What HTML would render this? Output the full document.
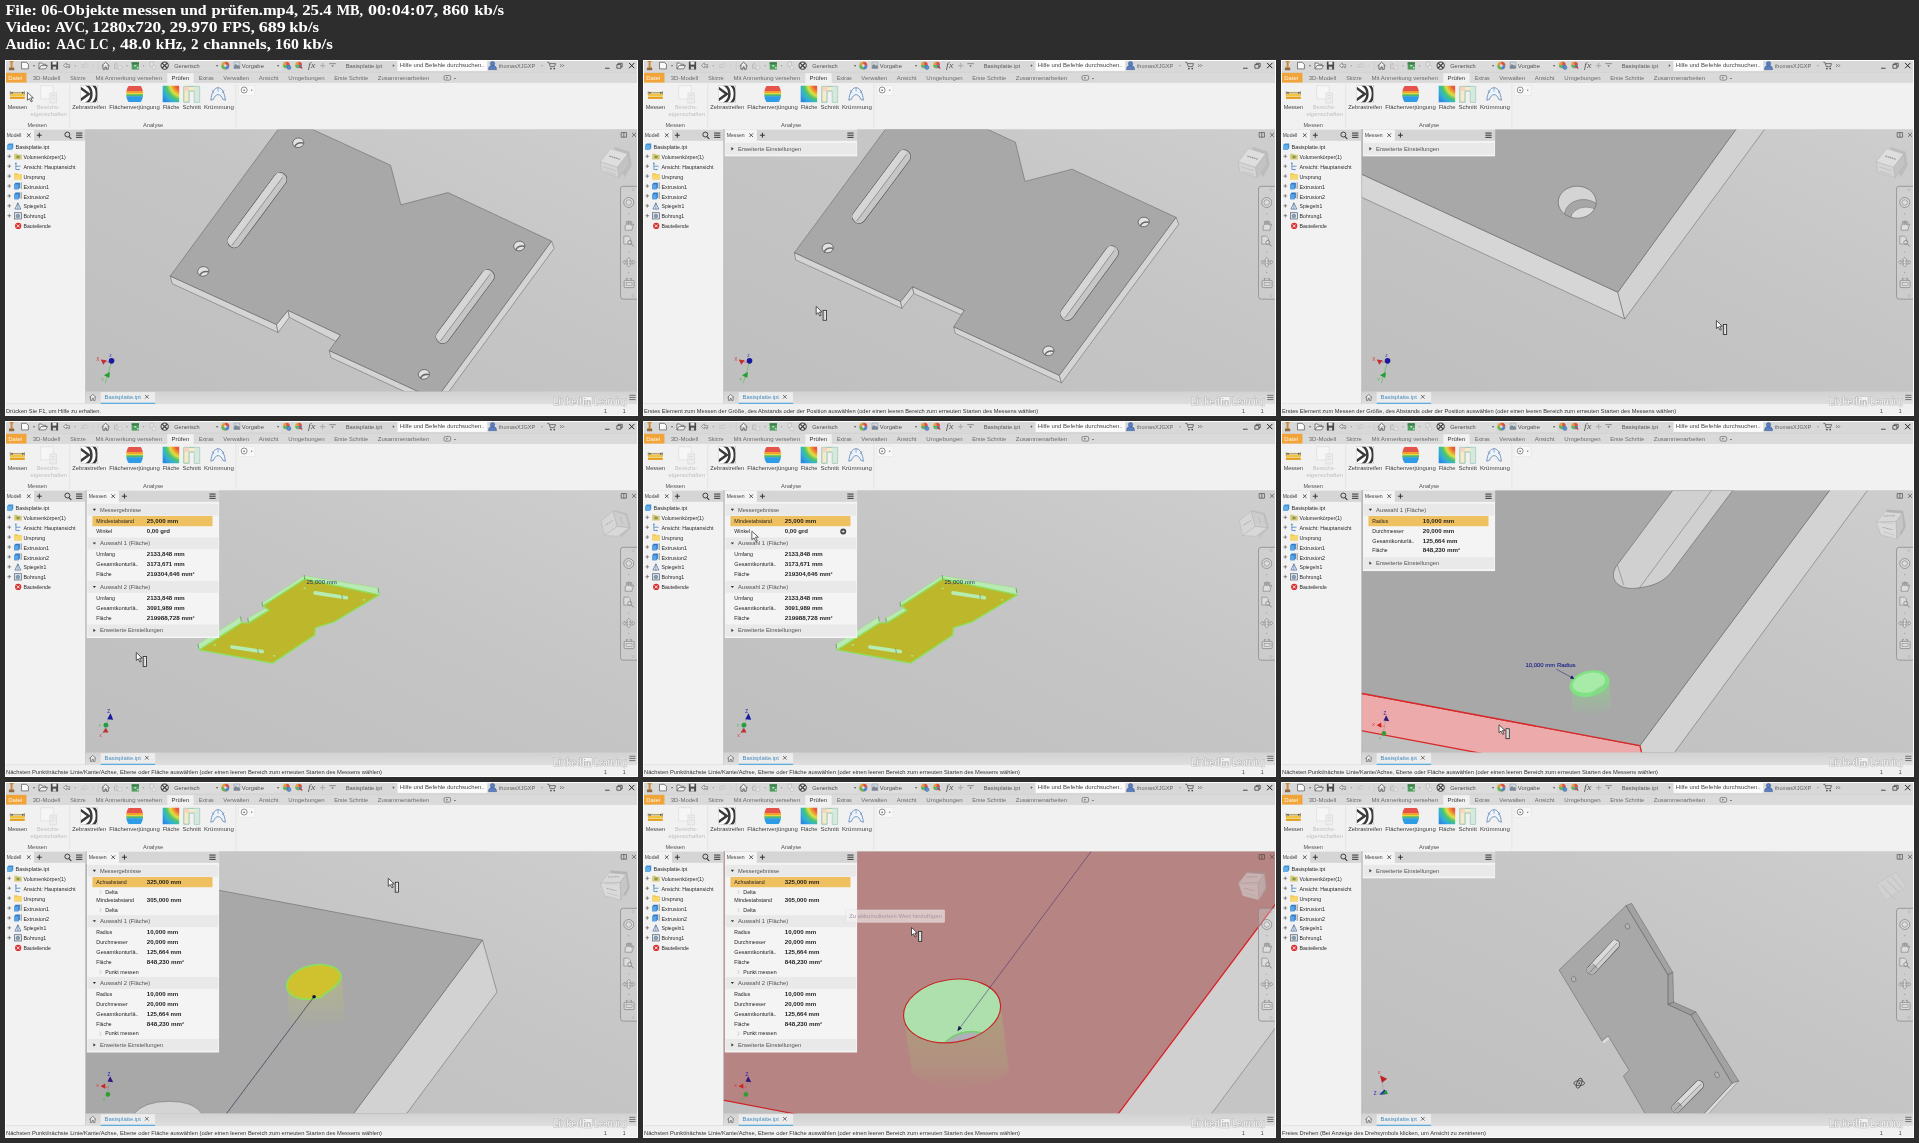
<!DOCTYPE html><html><head><meta charset="utf-8"><title>06-Objekte messen und prüfen</title>
<style>html,body{margin:0;padding:0}body{width:1919px;height:1143px;background:#2d2d2d;position:relative;overflow:hidden}.p{position:absolute;display:block;background:#c4c4c4;will-change:transform;filter:blur(.4px)}.h{position:absolute;left:0;top:0;will-change:transform}</style></head><body>
<svg class="h" width="1919" height="60" viewBox="0 0 1919 60" font-family='"Liberation Serif", serif' font-weight="bold" fill="#fff" font-size="15.5">
<text x="5.4" y="14.8" textLength="31.5" lengthAdjust="spacingAndGlyphs">File:</text>
<text x="41.3" y="14.8" textLength="77.7" lengthAdjust="spacingAndGlyphs">06-Objekte</text>
<text x="122.6" y="14.8" textLength="53.6" lengthAdjust="spacingAndGlyphs">messen</text>
<text x="180.2" y="14.8" textLength="26.4" lengthAdjust="spacingAndGlyphs">und</text>
<text x="211.4" y="14.8" textLength="86.7" lengthAdjust="spacingAndGlyphs">prüfen.mp4,</text>
<text x="302.2" y="14.8" textLength="29.5" lengthAdjust="spacingAndGlyphs">25.4</text>
<text x="336.7" y="14.8" textLength="26.4" lengthAdjust="spacingAndGlyphs">MB,</text>
<text x="367.9" y="14.8" textLength="70.4" lengthAdjust="spacingAndGlyphs">00:04:07,</text>
<text x="442.4" y="14.8" textLength="26.4" lengthAdjust="spacingAndGlyphs">860</text>
<text x="474.3" y="14.8" textLength="29.8" lengthAdjust="spacingAndGlyphs">kb/s</text>
<text x="5.4" y="31.7" textLength="45.4" lengthAdjust="spacingAndGlyphs">Video:</text>
<text x="54.9" y="31.7" textLength="33.9" lengthAdjust="spacingAndGlyphs">AVC,</text>
<text x="92.1" y="31.7" textLength="73.5" lengthAdjust="spacingAndGlyphs">1280x720,</text>
<text x="169.4" y="31.7" textLength="48.1" lengthAdjust="spacingAndGlyphs">29.970</text>
<text x="222.2" y="31.7" textLength="32.5" lengthAdjust="spacingAndGlyphs">FPS,</text>
<text x="258.8" y="31.7" textLength="27.1" lengthAdjust="spacingAndGlyphs">689</text>
<text x="289.3" y="31.7" textLength="29.8" lengthAdjust="spacingAndGlyphs">kb/s</text>
<text x="5.4" y="48.6" textLength="45.4" lengthAdjust="spacingAndGlyphs">Audio:</text>
<text x="56.2" y="48.6" textLength="29.4" lengthAdjust="spacingAndGlyphs">AAC</text>
<text x="90.1" y="48.6" textLength="18.3" lengthAdjust="spacingAndGlyphs">LC</text>
<text x="112.5" y="48.6" textLength="2.7" lengthAdjust="spacingAndGlyphs">,</text>
<text x="119.9" y="48.6" textLength="31.1" lengthAdjust="spacingAndGlyphs">48.0</text>
<text x="155.8" y="48.6" textLength="30.5" lengthAdjust="spacingAndGlyphs">kHz,</text>
<text x="191" y="48.6" textLength="7.5" lengthAdjust="spacingAndGlyphs">2</text>
<text x="203.3" y="48.6" textLength="67.7" lengthAdjust="spacingAndGlyphs">channels,</text>
<text x="275.1" y="48.6" textLength="23.7" lengthAdjust="spacingAndGlyphs">160</text>
<text x="302.8" y="48.6" textLength="30.1" lengthAdjust="spacingAndGlyphs">kb/s</text>
</svg>
<svg class="p" style="left:5px;top:60px" width="633" height="356" viewBox="0 0 1919 1079.25" font-family='"Liberation Sans", sans-serif'>
<linearGradient id="vbg0" x1="0" y1="1" x2="1" y2="0"><stop offset="0" stop-color="#bfbfbf"/><stop offset=".55" stop-color="#c5c5c5"/><stop offset="1" stop-color="#cecece"/></linearGradient><rect x="244" y="210" width="1675" height="796" fill="url(#vbg0)" />
<clipPath id="vc0"><rect x="244" y="210" width="1675" height="796"/></clipPath>
<g clip-path="url(#vc0)"><polygon points="501,655 823,802 828,826 507,678" fill="#d4d4d4" stroke="#4c4c4c" stroke-width="1.3" stroke-linejoin="round" />
<polygon points="823,802 858,759 862,780 828,826" fill="#dcdcdc" stroke="#4c4c4c" stroke-width="1.3" stroke-linejoin="round" />
<polygon points="858,759 1017,834 1003,853 862,780" fill="#d4d4d4" stroke="#4c4c4c" stroke-width="1.3" stroke-linejoin="round" />
<polygon points="983,881 1255,1006 1213,1006 988,902" fill="#d4d4d4" stroke="#4c4c4c" stroke-width="1.3" stroke-linejoin="round" />
<polygon points="1657,549 1665,571 1345,1006 1323,1006" fill="#d4d4d4" stroke="#4c4c4c" stroke-width="1.3" stroke-linejoin="round" />
<polygon points="501,655 828,210 931,210 1169,319 1200,439 1343,402 1657,549 1323,1006 1255,1006 983,881 1017,834 858,759 823,802" fill="#a8a8a8" stroke="#4c4c4c" stroke-width="1.3" stroke-linejoin="round" />
<line x1="834" y1="362" x2="695" y2="549" stroke="#484848" stroke-width="42.8" stroke-linecap="round"/>
<line x1="834" y1="362" x2="695" y2="549" stroke="#c6c6c6" stroke-width="39.6" stroke-linecap="round"/>
<line x1="830.1" y1="352.8" x2="685.0" y2="548.0" stroke="#d6d6d6" stroke-width="20.5" stroke-linecap="round"/>
<line x1="841.8" y1="355.0" x2="688.1" y2="561.7" stroke="#484848" stroke-width="1.3"/>
<line x1="1463" y1="656" x2="1327" y2="839" stroke="#484848" stroke-width="42.8" stroke-linecap="round"/>
<line x1="1463" y1="656" x2="1327" y2="839" stroke="#c6c6c6" stroke-width="39.6" stroke-linecap="round"/>
<line x1="1459.1" y1="646.8" x2="1317.0" y2="838.0" stroke="#d6d6d6" stroke-width="20.5" stroke-linecap="round"/>
<line x1="1470.8" y1="649.0" x2="1320.1" y2="851.7" stroke="#484848" stroke-width="1.3"/>
<g transform="translate(889,251) rotate(-10)">
<ellipse cx="0" cy="0" rx="17" ry="14.5" fill="#e2e2e2" stroke="#484848" stroke-width="2"/>
<path d="M-11.9 9.0Q-2.5 -2.9 14.3 3.2" fill="none" stroke="#6a6a6a" stroke-width="4.6" stroke-linecap="round"/>
</g>
<g transform="translate(601,641) rotate(-10)">
<ellipse cx="0" cy="0" rx="17" ry="14.5" fill="#e2e2e2" stroke="#484848" stroke-width="2"/>
<path d="M-11.9 9.0Q-2.5 -2.9 14.3 3.2" fill="none" stroke="#6a6a6a" stroke-width="4.6" stroke-linecap="round"/>
</g>
<g transform="translate(1559,564) rotate(-10)">
<ellipse cx="0" cy="0" rx="17" ry="14.5" fill="#e2e2e2" stroke="#484848" stroke-width="2"/>
<path d="M-11.9 9.0Q-2.5 -2.9 14.3 3.2" fill="none" stroke="#6a6a6a" stroke-width="4.6" stroke-linecap="round"/>
</g>
<g transform="translate(1270,953) rotate(-10)">
<ellipse cx="0" cy="0" rx="17" ry="14.5" fill="#e2e2e2" stroke="#484848" stroke-width="2"/>
<path d="M-11.9 9.0Q-2.5 -2.9 14.3 3.2" fill="none" stroke="#6a6a6a" stroke-width="4.6" stroke-linecap="round"/>
</g></g>
<path d="M322 918l-18 62" stroke="#40c040" stroke-width="1.6"/><path d="M322 918l-28-6" stroke="#d04040" stroke-width="1.6"/>
<path d="M300 956l18-10l-2 18z" fill="#20a030"/>
<path d="M290 908l18 2l-10 14z" fill="#c03030"/>
<circle cx="323" cy="912" r="8.5" fill="#1818a0"/>
<text x="277" y="914" font-size="14" fill="#e03030">X</text>
<text x="316" y="900" font-size="12" fill="#2020c0">Z</text>
<text x="292" y="972" font-size="12" fill="#30c030">Y</text>
<path d="M1868 220h16v14h-16zM1876 220v14" fill="none" stroke="#444" stroke-width="2"/>
<path d="M1901 221L1913 233M1913 221L1901 233" stroke="#444" stroke-width="2" fill="none"/>
<rect x="1866" y="383" width="60" height="342" rx="8" fill="#d8d8d8" fill-opacity=".35" stroke="#8c8c8c" stroke-width="2.4"/>
<circle cx="1891" cy="432" r="15" fill="#eaeaea" fill-opacity=".5" stroke="#7c7c7c" stroke-width="2.2"/><circle cx="1891" cy="432" r="8.5" fill="none" stroke="#888888" stroke-width="2"/>
<path d="M1880 516v-14l4-2v-10h4v9h2v-11h4v11h2v-9h4v12l2-4h4l-5 14v4z" fill="#ececec" fill-opacity=".5" stroke="#787878" stroke-width="1.8"/>
<path d="M1876 534h14l6 6v18h-20z" fill="#eaeaea" fill-opacity=".5" stroke="#7c7c7c" stroke-width="1.8"/><circle cx="1894" cy="553" r="6" fill="#e8e8e8" fill-opacity=".5" stroke="#707070" stroke-width="2"/><path d="M1899 558l7 7" stroke="#707070" stroke-width="2.6"/>
<path d="M1891 598l7 9h-4v4h9v-4l7 6l-7 6v-4h-9v4h4l-7 9l-7-9h4v-4h-9v4l-7-6l7-6v4h9v-4h-4z" fill="#e8e8e8" fill-opacity=".5" stroke="#7a7a7a" stroke-width="1.6" transform="translate(0,0) scale(1)"/>
<rect x="1877" y="668" width="30" height="22" rx="3" fill="#e8e8e8" fill-opacity=".5" stroke="#7a7a7a" stroke-width="2"/><rect x="1883" y="675" width="18" height="9" fill="none" stroke="#888888" stroke-width="1.6"/><path d="M1884 668v-6h5M1899 668v-6h-5" fill="none" stroke="#7a7a7a" stroke-width="1.8"/>
<circle cx="1891" cy="466" r="1.8" fill="#999"/>
<circle cx="1891" cy="582" r="1.8" fill="#999"/>
<circle cx="1891" cy="644" r="1.8" fill="#999"/>
<circle cx="1904" cy="393" r="3.4" fill="none" stroke="#aaa" stroke-width="1.4"/><circle cx="1904" cy="714" r="3.4" fill="none" stroke="#aaa" stroke-width="1.4"/>
<g opacity="1"><path d="M1846 262l48 16l6 42l-22 36z" fill="#a4a4a4" opacity=".4"/><path d="M1835.500 268.500L1888 285L1857 325.500L1804.500 309z" fill="#dedede" stroke="#b2b2b2" stroke-width="1.4" stroke-linejoin="round"/><path d="M1804.500 309L1857 325.500L1861.500 356.500L1809 340z" fill="#d5d5d5" stroke="#b2b2b2" stroke-width="1.4" stroke-linejoin="round"/><path d="M1857 325.500L1888 285L1892 317L1861.500 356.500z" fill="#c3c3c3" stroke="#b2b2b2" stroke-width="1.4" stroke-linejoin="round"/><path d="M1832 291l32 10" stroke="#8a8a8a" stroke-width="3.4" stroke-dasharray="5 2"/><path d="M1814 324l38 12M1816 337l36 11" stroke="#b8b8b8" stroke-width="2"/></g>

<rect x="0" y="0" width="1919" height="38" fill="#d8d8d8" />
<path d="M14 3h12v4h-3v15h4v6h-14v-6h4v-15h-3z" fill="#c98a3a"/>
<path d="M12 24h16v7h-16z" fill="#8a6a48"/>
<path d="M50 7h14l7 6v14h-21z" fill="#fafafa" stroke="#555" stroke-width="2.2"/>
<path d="M84.8 16.08h6.4l-3.2 4.16z" fill="#555"/>
<path d="M103 27v-18h8l3 4h10v5M103 27l6-10h20l-6 10z" fill="#f4f4f4" stroke="#555" stroke-width="2.2" stroke-linejoin="round"/>
<path d="M139 5h22v24h-22z" fill="#4a4a4a"/><path d="M144 5h12v9h-12z" fill="#e8e8e8"/><path d="M145 20h10v9h-10z" fill="#d0d0d0"/>
<path d="M177 17l9-8v5h10v9h-4v-4h-6v5z" fill="#e8e8e8" stroke="#666" stroke-width="1.8" stroke-linejoin="round"/>
<path d="M210.4 16.44h5.2l-2.6 3.3800000000000003z" fill="#777"/>
<path d="M252 17l-9-8v5h-10v9h4v-4h6v5z" fill="#dedede" stroke="#bdbdbd" stroke-width="1.8" stroke-linejoin="round"/>
<path d="M264.4 16.44h5.2l-2.6 3.3800000000000003z" fill="#b5b5b5"/>
<line x1="283" y1="5" x2="283" y2="30" stroke="#c4c4c4" stroke-width="1.5" />
<path d="M293 18l12-11l12 11M297 16v12h6v-7h4v7h6v-12" fill="#f4f4f4" stroke="#4a4a4a" stroke-width="2.4" stroke-linejoin="round"/>
<path d="M335 8l6 5l-6 5M335 13h-3v12h14v-6" fill="none" stroke="#b0b0b0" stroke-width="2.2"/><path d="M343 18h11v10h-11z" fill="#e6e6e6" stroke="#b8b8b8" stroke-width="1.6"/>
<path d="M367.4 16.44h5.2l-2.6 3.3800000000000003z" fill="#777"/>
<path d="M384 7h22v22h-22z" fill="#4f9d5d"/><path d="M384 7h22v6h-22z" fill="#3d7f4a"/><path d="M392 15h6v5h-6zM400 21h5v5h-5z" fill="#bfe3c5"/>
<path d="M417.4 16.44h5.2l-2.6 3.3800000000000003z" fill="#777"/>
<path d="M440 6h10v14h-10z" fill="#e4e4e4" stroke="#b0b0b0" stroke-width="1.6"/><path d="M447 18h9v10h-9z" fill="#ececec" stroke="#b8b8b8" stroke-width="1.6"/>
<circle cx="484" cy="17" r="11" fill="#e9e9e9" stroke="#3f3f3f" stroke-width="3.2"/><path d="M476.500 9.500l15 15M491.500 9.500l-15 15" stroke="#3f3f3f" stroke-width="4"/>
<rect x="502" y="3" width="150" height="30" fill="#dcdcdc" />
<text x="513" y="23" font-size="17" fill="#555" textLength="77" lengthAdjust="spacingAndGlyphs">Generisch</text>
<path d="M639.4 15.84h7.2l-3.6 4.680000000000001z" fill="#444"/>
<circle cx="668" cy="17" r="12" fill="#d9a13c"/><path d="M668 17L668 5A12 12 0 0 1 680 17z" fill="#d94c4c"/><path d="M668 17L680 17A12 12 0 0 1 668 29z" fill="#4d84d8"/><path d="M668 17L668 29A12 12 0 0 1 656 17z" fill="#5cb85c"/><circle cx="668" cy="17" r="4" fill="#e9d9f0"/>
<rect x="690" y="3" width="148" height="30" fill="#dedede" />
<path d="M694 6h18v20h-18z" fill="#cfd6de" stroke="#8a8f98" stroke-width="1.5"/><path d="M694 18l6-6l5 5l3-2l4 4v7h-18z" fill="#7b8794"/>
<text x="718" y="23" font-size="17" fill="#555" textLength="67" lengthAdjust="spacingAndGlyphs">Vorgabe</text>
<path d="M824.4 15.84h7.2l-3.6 4.680000000000001z" fill="#444"/>
<circle cx="853" cy="15" r="10" fill="#e0a040"/><path d="M853 15V5A10 10 0 0 1 863 15z" fill="#d95050"/><path d="M853 15h10A10 10 0 0 1 853 25z" fill="#4f86d8"/><path d="M853 15v10A10 10 0 0 1 843 15z" fill="#5cb85c"/>
<circle cx="890" cy="15" r="10" fill="#e0a040"/><path d="M890 15V5A10 10 0 0 1 900 15z" fill="#d95050"/><path d="M890 15h10A10 10 0 0 1 890 25z" fill="#4f86d8"/><path d="M890 15v10A10 10 0 0 1 880 15z" fill="#5cb85c"/>
<circle cx="861" cy="23" r="6" fill="#5a8fd0" stroke="#35588a" stroke-width="1.2"/>
<path d="M893 18l8 8" stroke="#c04040" stroke-width="4"/>
<text x="919" y="25" font-size="24" fill="#555" textLength="22" lengthAdjust="spacingAndGlyphs" font-style="italic" font-family="Liberation Serif, serif">fx</text>
<path d="M955 17H971M963 9V25" stroke="#b0b0b0" stroke-width="3.4" fill="none"/>
<line x1="983" y1="11" x2="1003" y2="11" stroke="#666" stroke-width="2" />
<path d="M989.4 16.84h7.2l-3.6 4.680000000000001z" fill="#555"/>
<text x="1033" y="23" font-size="17" fill="#5a5a5a" textLength="110" lengthAdjust="spacingAndGlyphs">Basisplatte.ipt</text>
<path d="M1175.6 13v8l5.6 -4z" fill="#555"/>
<rect x="1190" y="2" width="272" height="31" fill="#fbfbfb" />
<text x="1197" y="22" font-size="17" fill="#4a4a4a" textLength="257" lengthAdjust="spacingAndGlyphs">Hilfe und Befehle durchsuchen..</text>
<circle cx="1478" cy="11" r="6.5" fill="#5b7fc0" stroke="#2c4f92" stroke-width="1.6"/><path d="M1466 29c0-9 5-12 12-12s12 3 12 12z" fill="#5b7fc0" stroke="#2c4f92" stroke-width="1.6"/>
<text x="1497" y="23" font-size="17" fill="#666" textLength="110" lengthAdjust="spacingAndGlyphs">thomasXJGXP</text>
<path d="M1625.2 16.32h5.6l-2.8 3.6399999999999997z" fill="#666"/>
<path d="M1644 7h5l4 13h13l3-9h-18" fill="none" stroke="#4a4a4a" stroke-width="2.2"/><circle cx="1655" cy="26" r="2.6" fill="#4a4a4a"/><circle cx="1665" cy="26" r="2.6" fill="#4a4a4a"/>
<path d="M1683 13l4 4l-4 4M1690 13l4 4l-4 4" fill="none" stroke="#444" stroke-width="2"/>
<line x1="1819" y1="25" x2="1833" y2="25" stroke="#333" stroke-width="2.6" />
<path d="M1855 14h12v11h-12zM1859 14v-4h12v11h-4" fill="none" stroke="#333" stroke-width="2.2"/>
<path d="M1892 9L1908 25M1908 9L1892 25" stroke="#222" stroke-width="3" fill="none"/>
<rect x="0" y="38" width="1919" height="31" fill="#dadada" />
<rect x="3" y="39" width="62" height="30" fill="#f0a43a" />
<text x="10" y="60" font-size="17" fill="#fff3dc" textLength="42" lengthAdjust="spacingAndGlyphs">Datei</text>
<rect x="492" y="40" width="80" height="30" fill="#f1f1f1" />
<text x="84" y="60" font-size="17" fill="#6e6e6e" textLength="83" lengthAdjust="spacingAndGlyphs">3D-Modell</text>
<text x="198" y="60" font-size="17" fill="#6e6e6e" textLength="47" lengthAdjust="spacingAndGlyphs">Skizze</text>
<text x="274" y="60" font-size="17" fill="#6e6e6e" textLength="202" lengthAdjust="spacingAndGlyphs">Mit Anmerkung versehen</text>
<text x="505" y="60" font-size="17" fill="#333" textLength="53" lengthAdjust="spacingAndGlyphs">Prüfen</text>
<text x="587" y="60" font-size="17" fill="#6e6e6e" textLength="46" lengthAdjust="spacingAndGlyphs">Extras</text>
<text x="662" y="60" font-size="17" fill="#6e6e6e" textLength="78" lengthAdjust="spacingAndGlyphs">Verwalten</text>
<text x="769" y="60" font-size="17" fill="#6e6e6e" textLength="60" lengthAdjust="spacingAndGlyphs">Ansicht</text>
<text x="859" y="60" font-size="17" fill="#6e6e6e" textLength="110" lengthAdjust="spacingAndGlyphs">Umgebungen</text>
<text x="998" y="60" font-size="17" fill="#6e6e6e" textLength="103" lengthAdjust="spacingAndGlyphs">Erste Schritte</text>
<text x="1130" y="60" font-size="17" fill="#6e6e6e" textLength="156" lengthAdjust="spacingAndGlyphs">Zusammenarbeiten</text>
<rect x="1331" y="47" width="20" height="14" rx="4" fill="none" stroke="#555" stroke-width="1.8"/><path d="M1338 51v6l5-3z" fill="#555"/>
<path d="M1361 54.2h6l-3 3.9000000000000004z" fill="#444"/>
<rect x="0" y="69" width="1919" height="141" fill="#f1f1f1" />
<rect x="15" y="95.5" width="45" height="8" fill="#f9e9b4" />
<rect x="15" y="103" width="45" height="6.5" fill="#f3c440" />
<rect x="15" y="109.5" width="45" height="1.5" fill="#fdf2d0" />
<rect x="15" y="111" width="45" height="7" fill="#e1a11f" />
<path d="M16 95v9M59 95v9M18 99.500h39" stroke="#4a4a4a" stroke-width="1.8" fill="none"/><path d="M17 99.500l6-3.200v6.400zM58 99.500l-6-3.200v6.400z" fill="#4a4a4a"/>
<text x="8" y="148" font-size="17" fill="#444" textLength="59" lengthAdjust="spacingAndGlyphs">Messen</text>
<path d="M108 78h38v40h-38z" fill="#f6f6f6" stroke="#dcdcdc" stroke-width="2"/><path d="M136 100h20v30h-20z" fill="#ededed" stroke="#d8d8d8" stroke-width="2"/><path d="M141 108h10M141 116h10" stroke="#cfcfcf" stroke-width="2"/>
<text x="97" y="148" font-size="17" fill="#c2c2c2" textLength="68" lengthAdjust="spacingAndGlyphs">Bereichs-</text>
<text x="77" y="170" font-size="17" fill="#c2c2c2" textLength="111" lengthAdjust="spacingAndGlyphs">eigenschaften</text>
<text x="68" y="202" font-size="17" fill="#555" textLength="59" lengthAdjust="spacingAndGlyphs">Messen</text>
<line x1="196" y1="72" x2="196" y2="206" stroke="#dedede" stroke-width="2" />
<clipPath id="zb0"><rect x="230" y="78" width="50" height="50"/></clipPath>
<rect x="230" y="78" width="50" height="50" fill="#fdfdfd" stroke="#bbb" stroke-width="1"/>
<g clip-path="url(#zb0)" fill="none" stroke="#3a3a3a" stroke-width="7.500"><path d="M228 84l26 19l-26 19"/><path d="M244 74c24 12 24 46 0 58"/><path d="M262 72c22 12 22 50 0 62"/><path d="M279 70c12 14 12 52 0 66"/></g>
<text x="204" y="148" font-size="17" fill="#444" textLength="103" lengthAdjust="spacingAndGlyphs">Zebrastreifen</text>
<clipPath id="brl0"><path d="M375 78h36c10 13 10 37 0 50h-36c-10-13-10-37 0-50z"/></clipPath>
<g clip-path="url(#brl0)"><rect x="360" y="78" width="66" height="17" fill="#e5534b"/><rect x="360" y="94" width="66" height="7" fill="#f0a030"/><rect x="360" y="100" width="66" height="5" fill="#e8d83a"/><rect x="360" y="104" width="66" height="7" fill="#4bb86a"/><rect x="360" y="110" width="66" height="19" fill="#2e9be6"/></g>
<text x="316" y="148" font-size="17" fill="#444" textLength="153" lengthAdjust="spacingAndGlyphs">Flächenverjüngung</text>
<radialGradient id="fl0" gradientUnits="userSpaceOnUse" cx="540" cy="70" r="78"><stop offset="0" stop-color="#e8503e"/><stop offset=".3" stop-color="#ea5a3c"/><stop offset=".42" stop-color="#f0a030"/><stop offset=".52" stop-color="#dfe040"/><stop offset=".66" stop-color="#4cc470"/><stop offset=".82" stop-color="#30b0d8"/><stop offset="1" stop-color="#2e86e4"/></radialGradient>
<rect x="478" y="78" width="50" height="50" fill="url(#fl0)" />
<text x="478" y="148" font-size="17" fill="#444" textLength="51" lengthAdjust="spacingAndGlyphs">Fläche</text>
<path d="M542 80h48v48h-16v-34h-16v34h-16z" fill="#f4ecc8" stroke="#86bdb0" stroke-width="2.6"/><path d="M574 80h16v48h-16z" fill="#cfe8e2" opacity=".8"/><path d="M542 80h16v14h-16z" fill="#f4d0c0" opacity=".8"/>
<text x="538" y="148" font-size="17" fill="#444" textLength="56" lengthAdjust="spacingAndGlyphs">Schnitt</text>
<path d="M624 122c2-22 10-38 22-38s20 16 22 38l-8-3c-3-9-8-14-14-14s-11 5-14 14z" fill="#eef4fb" stroke="#5a80b0" stroke-width="2.4" stroke-linejoin="round"/><path d="M634 100l-6-8M646 96v-12M658 100l6-8" stroke="#5a80b0" stroke-width="1.8"/>
<text x="603" y="148" font-size="17" fill="#444" textLength="91" lengthAdjust="spacingAndGlyphs">Krümmung</text>
<text x="418" y="202" font-size="17" fill="#555" textLength="62" lengthAdjust="spacingAndGlyphs">Analyse</text>
<line x1="700" y1="72" x2="700" y2="206" stroke="#dedede" stroke-width="2" />
<rect x="709" y="77" width="49" height="30" fill="#f7f7f7" stroke="#e2e2e2" stroke-width="1.5"/>
<circle cx="725" cy="91" r="9" fill="#fff" stroke="#555" stroke-width="2"/>
<path d="M721.4 89.84h7.2l-3.6 4.680000000000001z" fill="#444"/>
<path d="M745.4 90.44h5.2l-2.6 3.3800000000000003z" fill="#444"/>
<path d="M68 98v24l6-5l5 10l4-2l-5-10h8z" fill="#fff" stroke="#333" stroke-width="2.2" stroke-linejoin="round"/>
<rect x="0" y="210" width="244" height="832" fill="#f2f2f2" />
<rect x="88" y="212" width="156" height="33" fill="#d5d5d5" />
<text x="5" y="233" font-size="15.5" fill="#444" textLength="45" lengthAdjust="spacingAndGlyphs">Modell</text>
<path d="M66.5 222.5L77.5 233.5M77.5 222.5L66.5 233.5" stroke="#333" stroke-width="2.4" fill="none"/>
<path d="M96.5 228H111.5M104 220.5V235.5" stroke="#333" stroke-width="3" fill="none"/>
<circle cx="189" cy="226" r="7.5" fill="none" stroke="#333" stroke-width="2.8"/><path d="M194 232l7 7" stroke="#333" stroke-width="3.2"/>
<path d="M215.5 221.5h19M215.5 228h19M215.5 234.5h19" stroke="#333" stroke-width="3" fill="none"/>
<line x1="244.5" y1="210" x2="244.5" y2="1042" stroke="#b4b4b4" stroke-width="1.5" />
<text x="32" y="270" font-size="15.5" fill="#2a2a2a" textLength="102" lengthAdjust="spacingAndGlyphs">Basisplatte.ipt</text>
<path d="M7 258l4-5h14v14l-4 5h-14z" fill="#3d8fd6"/><path d="M7 258h14v14h-14z" fill="#62aee8"/>
<text x="56" y="300" font-size="15.5" fill="#2a2a2a" textLength="128" lengthAdjust="spacingAndGlyphs">Volumenkörper(1)</text>
<path d="M7.5 292H18.5M13 286.5V297.5" stroke="#555" stroke-width="2" fill="none"/>
<path d="M28 284h9l3 3h11v15h-23z" fill="#d8c878"/><path d="M35 290h9v8h-9z" fill="#7f9a4a"/>
<text x="56" y="330" font-size="15.5" fill="#2a2a2a" textLength="158" lengthAdjust="spacingAndGlyphs">Ansicht: Hauptansicht</text>
<path d="M7.5 322H18.5M13 316.5V327.5" stroke="#555" stroke-width="2" fill="none"/>
<path d="M33 313v19h8M33 322h14" fill="none" stroke="#3a78b8" stroke-width="2.2"/><circle cx="33" cy="313" r="2.2" fill="#3a78b8"/><circle cx="42" cy="332" r="2.2" fill="#3a78b8"/>
<text x="56" y="360" font-size="15.5" fill="#2a2a2a" textLength="66" lengthAdjust="spacingAndGlyphs">Ursprung</text>
<path d="M7.5 352H18.5M13 346.5V357.5" stroke="#555" stroke-width="2" fill="none"/>
<path d="M28 343h9l3 3h11v16h-23z" fill="#f0c850"/><path d="M28 349h23v13h-23z" fill="#f7d870"/>
<text x="56" y="390" font-size="15.5" fill="#2a2a2a" textLength="77" lengthAdjust="spacingAndGlyphs">Extrusion1</text>
<path d="M7.5 382H18.5M13 376.5V387.5" stroke="#555" stroke-width="2" fill="none"/>
<path d="M28 377l4-5h13v15l-4 5h-13z" fill="#2f78c4"/><path d="M28 377h13v15h-13z" fill="#5aa4e4"/><path d="M49 391v-20" stroke="#444" stroke-width="1.8"/>
<text x="56" y="420" font-size="15.5" fill="#2a2a2a" textLength="77" lengthAdjust="spacingAndGlyphs">Extrusion2</text>
<path d="M7.5 412H18.5M13 406.5V417.5" stroke="#555" stroke-width="2" fill="none"/>
<path d="M28 407l4-5h13v15l-4 5h-13z" fill="#2f78c4"/><path d="M28 407h13v15h-13z" fill="#5aa4e4"/><path d="M49 421v-20" stroke="#444" stroke-width="1.8"/>
<text x="56" y="450" font-size="15.5" fill="#2a2a2a" textLength="69" lengthAdjust="spacingAndGlyphs">Spiegeln1</text>
<path d="M7.5 442H18.5M13 436.5V447.5" stroke="#555" stroke-width="2" fill="none"/>
<path d="M30 452l9-19l9 19z" fill="#dfe8f4" stroke="#44648c" stroke-width="2"/><path d="M39 433v19" stroke="#44648c" stroke-width="1.6"/>
<text x="56" y="480" font-size="15.5" fill="#2a2a2a" textLength="69" lengthAdjust="spacingAndGlyphs">Bohrung1</text>
<path d="M7.5 472H18.5M13 466.5V477.5" stroke="#555" stroke-width="2" fill="none"/>
<rect x="29" y="463" width="21" height="19" fill="#dce6ee" stroke="#4a5a6a" stroke-width="2"/><circle cx="39" cy="473" r="5.5" fill="#8aa0b4" stroke="#4a5a6a" stroke-width="1.4"/>
<text x="56" y="510" font-size="15.5" fill="#2a2a2a" textLength="83" lengthAdjust="spacingAndGlyphs">Bauteilende</text>
<circle cx="40" cy="503" r="9.5" fill="#d83030"/><path d="M35.500 498.5l9 9M44.500 498.5l-9 9" stroke="#fff" stroke-width="2.6"/>
<linearGradient id="dtb0" x1="0" y1="0" x2="0" y2="1"><stop offset="0" stop-color="#d2d2d2"/><stop offset="1" stop-color="#dedede"/></linearGradient>
<rect x="244" y="1005" width="1675" height="38" fill="url(#dtb0)" />
<path d="M256 1023l10-9l10 9M259 1021v11h5v-6h4v6h5v-11" fill="#f4f4f4" stroke="#555" stroke-width="2" stroke-linejoin="round"/>
<rect x="290" y="1007" width="165" height="33" fill="#ececec" />
<rect x="290" y="1039" width="165" height="3.5" fill="#4fa6de" />
<text x="302" y="1028" font-size="17" fill="#4a8fc0" textLength="110" lengthAdjust="spacingAndGlyphs">Basisplatte.ipt</text>
<path d="M424.5 1015.5L435.5 1026.5M435.5 1015.5L424.5 1026.5" stroke="#333" stroke-width="2" fill="none"/>
<path d="M1892.5 1016.5h19M1892.5 1023h19M1892.5 1029.5h19" stroke="#555" stroke-width="2.4" fill="none"/>
<rect x="0" y="1043" width="1919" height="37" fill="#f0f0f0" />
<text x="3" y="1070" font-size="15.5" fill="#333" textLength="288" lengthAdjust="spacingAndGlyphs">Drücken Sie F1, um Hilfe zu erhalten.</text>
<text x="1816" y="1070" font-size="15.5" fill="#444">1</text>
<text x="1873" y="1070" font-size="15.5" fill="#444">1</text>
<text x="1661" y="1047" font-size="32" fill="#ececec" textLength="87" lengthAdjust="spacingAndGlyphs" font-weight="bold" stroke="#8e8e8e" stroke-width="1.3" paint-order="stroke" fill-opacity=".92">Linked</text>
<rect x="1751" y="1020" width="29" height="29" fill="#f4f4f4" rx="3" stroke="#a0a0a0" stroke-width="1" fill-opacity=".9"/>
<text x="1754" y="1046" font-size="27" fill="#bdbdbd" textLength="23" lengthAdjust="spacingAndGlyphs" font-weight="bold" stroke="#b0b0b0" stroke-width=".4">in</text>
<text x="1786" y="1047" font-size="32" fill="#ececec" textLength="100" lengthAdjust="spacingAndGlyphs" font-weight="bold" stroke="#8e8e8e" stroke-width="1.3" paint-order="stroke" fill-opacity=".92">Learning</text>
<rect x="1.5" y="1.5" width="1916" height="1076.25" fill="none" stroke="#fdfdfd" stroke-width="3"/>
</svg>
<svg class="p" style="left:643px;top:60px" width="633" height="356" viewBox="0 0 1919 1079.25" font-family='"Liberation Sans", sans-serif'>
<linearGradient id="vbg1" x1="0" y1="1" x2="1" y2="0"><stop offset="0" stop-color="#bfbfbf"/><stop offset=".55" stop-color="#c5c5c5"/><stop offset="1" stop-color="#cecece"/></linearGradient><rect x="244" y="210" width="1675" height="796" fill="url(#vbg1)" />
<clipPath id="vc1"><rect x="244" y="210" width="1675" height="796"/></clipPath>
<g clip-path="url(#vc1)"><polygon points="459,584 781,732 785,753 463,606" fill="#d4d4d4" stroke="#4c4c4c" stroke-width="1.3" stroke-linejoin="round" />
<polygon points="781,732 817,687 821,708 785,753" fill="#d4d4d4" stroke="#4c4c4c" stroke-width="1.3" stroke-linejoin="round" />
<polygon points="817,687 974,759 966,773 821,708" fill="#d4d4d4" stroke="#4c4c4c" stroke-width="1.3" stroke-linejoin="round" />
<polygon points="942,809 1262,956 1269,979 947,829" fill="#d4d4d4" stroke="#4c4c4c" stroke-width="1.3" stroke-linejoin="round" />
<polygon points="1616,477 1624,498 1269,979 1262,956" fill="#d4d4d4" stroke="#4c4c4c" stroke-width="1.3" stroke-linejoin="round" />
<polygon points="459,584 735,210 1044,210 1129,249 1158,368 1301,331 1616,477 1262,956 942,809 974,759 817,687 781,732" fill="#a8a8a8" stroke="#4c4c4c" stroke-width="1.3" stroke-linejoin="round" />
<line x1="791" y1="293" x2="655" y2="475" stroke="#484848" stroke-width="42.8" stroke-linecap="round"/>
<line x1="791" y1="293" x2="655" y2="475" stroke="#c6c6c6" stroke-width="39.6" stroke-linecap="round"/>
<line x1="787.2" y1="283.7" x2="645.0" y2="474.0" stroke="#d6d6d6" stroke-width="20.5" stroke-linecap="round"/>
<line x1="798.8" y1="286.0" x2="648.1" y2="487.7" stroke="#484848" stroke-width="1.3"/>
<line x1="1421" y1="584" x2="1286" y2="769" stroke="#484848" stroke-width="42.8" stroke-linecap="round"/>
<line x1="1421" y1="584" x2="1286" y2="769" stroke="#c6c6c6" stroke-width="39.6" stroke-linecap="round"/>
<line x1="1417.1" y1="574.8" x2="1276.0" y2="768.1" stroke="#d6d6d6" stroke-width="20.5" stroke-linecap="round"/>
<line x1="1428.7" y1="576.9" x2="1279.2" y2="781.8" stroke="#484848" stroke-width="1.3"/>
<g transform="translate(560,570) rotate(-10)">
<ellipse cx="0" cy="0" rx="17" ry="14.5" fill="#e2e2e2" stroke="#484848" stroke-width="2"/>
<path d="M-11.9 9.0Q-2.5 -2.9 14.3 3.2" fill="none" stroke="#6a6a6a" stroke-width="4.6" stroke-linecap="round"/>
</g>
<g transform="translate(1518,491) rotate(-10)">
<ellipse cx="0" cy="0" rx="17" ry="14.5" fill="#e2e2e2" stroke="#484848" stroke-width="2"/>
<path d="M-11.9 9.0Q-2.5 -2.9 14.3 3.2" fill="none" stroke="#6a6a6a" stroke-width="4.6" stroke-linecap="round"/>
</g>
<g transform="translate(1229,882) rotate(-10)">
<ellipse cx="0" cy="0" rx="17" ry="14.5" fill="#e2e2e2" stroke="#484848" stroke-width="2"/>
<path d="M-11.9 9.0Q-2.5 -2.9 14.3 3.2" fill="none" stroke="#6a6a6a" stroke-width="4.6" stroke-linecap="round"/>
</g></g>
<path d="M322 918l-18 62" stroke="#40c040" stroke-width="1.6"/><path d="M322 918l-28-6" stroke="#d04040" stroke-width="1.6"/>
<path d="M300 956l18-10l-2 18z" fill="#20a030"/>
<path d="M290 908l18 2l-10 14z" fill="#c03030"/>
<circle cx="323" cy="912" r="8.5" fill="#1818a0"/>
<text x="277" y="914" font-size="14" fill="#e03030">X</text>
<text x="316" y="900" font-size="12" fill="#2020c0">Z</text>
<text x="292" y="972" font-size="12" fill="#30c030">Y</text>
<path d="M1868 220h16v14h-16zM1876 220v14" fill="none" stroke="#444" stroke-width="2"/>
<path d="M1901 221L1913 233M1913 221L1901 233" stroke="#444" stroke-width="2" fill="none"/>
<rect x="1866" y="383" width="60" height="342" rx="8" fill="#d8d8d8" fill-opacity=".35" stroke="#8c8c8c" stroke-width="2.4"/>
<circle cx="1891" cy="432" r="15" fill="#eaeaea" fill-opacity=".5" stroke="#7c7c7c" stroke-width="2.2"/><circle cx="1891" cy="432" r="8.5" fill="none" stroke="#888888" stroke-width="2"/>
<path d="M1880 516v-14l4-2v-10h4v9h2v-11h4v11h2v-9h4v12l2-4h4l-5 14v4z" fill="#ececec" fill-opacity=".5" stroke="#787878" stroke-width="1.8"/>
<path d="M1876 534h14l6 6v18h-20z" fill="#eaeaea" fill-opacity=".5" stroke="#7c7c7c" stroke-width="1.8"/><circle cx="1894" cy="553" r="6" fill="#e8e8e8" fill-opacity=".5" stroke="#707070" stroke-width="2"/><path d="M1899 558l7 7" stroke="#707070" stroke-width="2.6"/>
<path d="M1891 598l7 9h-4v4h9v-4l7 6l-7 6v-4h-9v4h4l-7 9l-7-9h4v-4h-9v4l-7-6l7-6v4h9v-4h-4z" fill="#e8e8e8" fill-opacity=".5" stroke="#7a7a7a" stroke-width="1.6" transform="translate(0,0) scale(1)"/>
<rect x="1877" y="668" width="30" height="22" rx="3" fill="#e8e8e8" fill-opacity=".5" stroke="#7a7a7a" stroke-width="2"/><rect x="1883" y="675" width="18" height="9" fill="none" stroke="#888888" stroke-width="1.6"/><path d="M1884 668v-6h5M1899 668v-6h-5" fill="none" stroke="#7a7a7a" stroke-width="1.8"/>
<circle cx="1891" cy="466" r="1.8" fill="#999"/>
<circle cx="1891" cy="582" r="1.8" fill="#999"/>
<circle cx="1891" cy="644" r="1.8" fill="#999"/>
<circle cx="1904" cy="393" r="3.4" fill="none" stroke="#aaa" stroke-width="1.4"/><circle cx="1904" cy="714" r="3.4" fill="none" stroke="#aaa" stroke-width="1.4"/>
<g opacity="1"><path d="M1846 262l48 16l6 42l-22 36z" fill="#a4a4a4" opacity=".4"/><path d="M1835.500 268.500L1888 285L1857 325.500L1804.500 309z" fill="#dedede" stroke="#b2b2b2" stroke-width="1.4" stroke-linejoin="round"/><path d="M1804.500 309L1857 325.500L1861.500 356.500L1809 340z" fill="#d5d5d5" stroke="#b2b2b2" stroke-width="1.4" stroke-linejoin="round"/><path d="M1857 325.500L1888 285L1892 317L1861.500 356.500z" fill="#c3c3c3" stroke="#b2b2b2" stroke-width="1.4" stroke-linejoin="round"/><path d="M1832 291l32 10" stroke="#8a8a8a" stroke-width="3.4" stroke-dasharray="5 2"/><path d="M1814 324l38 12M1816 337l36 11" stroke="#b8b8b8" stroke-width="2"/></g>
<rect x="248" y="210" width="401" height="82" fill="#f4f4f4" />
<rect x="345" y="212" width="304" height="33" fill="#d5d5d5" />
<text x="254" y="233" font-size="15.5" fill="#444" textLength="54" lengthAdjust="spacingAndGlyphs">Messen</text>
<path d="M322.5 222.5L333.5 233.5M333.5 222.5L322.5 233.5" stroke="#333" stroke-width="2.4" fill="none"/>
<path d="M354.5 228H369.5M362 220.5V235.5" stroke="#333" stroke-width="3" fill="none"/>
<path d="M619.5 221.5h19M619.5 228h19M619.5 234.5h19" stroke="#333" stroke-width="3" fill="none"/>
<rect x="250" y="251" width="397" height="36" fill="#e9e9e9" />
<path d="M268.0 264v10l7.0 -5z" fill="#333"/>
<text x="288" y="275" font-size="17" fill="#555" textLength="192" lengthAdjust="spacingAndGlyphs">Erweiterte Einstellungen</text>

<path d="M525 747v24l6-5l5 10l4-2l-5-10h8z" fill="#fff" stroke="#2c2c2c" stroke-width="2.4" stroke-linejoin="round"/><rect x="546" y="759" width="10" height="30" fill="#ececec" stroke="#2c2c2c" stroke-width="2.6"/><path d="M548 766h4M548 772h4M548 778h4M548 784h4" stroke="#888" stroke-width="1.2"/>
<rect x="0" y="0" width="1919" height="38" fill="#d8d8d8" />
<path d="M14 3h12v4h-3v15h4v6h-14v-6h4v-15h-3z" fill="#c98a3a"/>
<path d="M12 24h16v7h-16z" fill="#8a6a48"/>
<path d="M50 7h14l7 6v14h-21z" fill="#fafafa" stroke="#555" stroke-width="2.2"/>
<path d="M84.8 16.08h6.4l-3.2 4.16z" fill="#555"/>
<path d="M103 27v-18h8l3 4h10v5M103 27l6-10h20l-6 10z" fill="#f4f4f4" stroke="#555" stroke-width="2.2" stroke-linejoin="round"/>
<path d="M139 5h22v24h-22z" fill="#4a4a4a"/><path d="M144 5h12v9h-12z" fill="#e8e8e8"/><path d="M145 20h10v9h-10z" fill="#d0d0d0"/>
<path d="M177 17l9-8v5h10v9h-4v-4h-6v5z" fill="#e8e8e8" stroke="#666" stroke-width="1.8" stroke-linejoin="round"/>
<path d="M210.4 16.44h5.2l-2.6 3.3800000000000003z" fill="#777"/>
<path d="M252 17l-9-8v5h-10v9h4v-4h6v5z" fill="#dedede" stroke="#bdbdbd" stroke-width="1.8" stroke-linejoin="round"/>
<path d="M264.4 16.44h5.2l-2.6 3.3800000000000003z" fill="#b5b5b5"/>
<line x1="283" y1="5" x2="283" y2="30" stroke="#c4c4c4" stroke-width="1.5" />
<path d="M293 18l12-11l12 11M297 16v12h6v-7h4v7h6v-12" fill="#f4f4f4" stroke="#4a4a4a" stroke-width="2.4" stroke-linejoin="round"/>
<path d="M335 8l6 5l-6 5M335 13h-3v12h14v-6" fill="none" stroke="#b0b0b0" stroke-width="2.2"/><path d="M343 18h11v10h-11z" fill="#e6e6e6" stroke="#b8b8b8" stroke-width="1.6"/>
<path d="M367.4 16.44h5.2l-2.6 3.3800000000000003z" fill="#777"/>
<path d="M384 7h22v22h-22z" fill="#4f9d5d"/><path d="M384 7h22v6h-22z" fill="#3d7f4a"/><path d="M392 15h6v5h-6zM400 21h5v5h-5z" fill="#bfe3c5"/>
<path d="M417.4 16.44h5.2l-2.6 3.3800000000000003z" fill="#777"/>
<path d="M440 6h10v14h-10z" fill="#e4e4e4" stroke="#b0b0b0" stroke-width="1.6"/><path d="M447 18h9v10h-9z" fill="#ececec" stroke="#b8b8b8" stroke-width="1.6"/>
<circle cx="484" cy="17" r="11" fill="#e9e9e9" stroke="#3f3f3f" stroke-width="3.2"/><path d="M476.500 9.500l15 15M491.500 9.500l-15 15" stroke="#3f3f3f" stroke-width="4"/>
<rect x="502" y="3" width="150" height="30" fill="#dcdcdc" />
<text x="513" y="23" font-size="17" fill="#555" textLength="77" lengthAdjust="spacingAndGlyphs">Generisch</text>
<path d="M639.4 15.84h7.2l-3.6 4.680000000000001z" fill="#444"/>
<circle cx="668" cy="17" r="12" fill="#d9a13c"/><path d="M668 17L668 5A12 12 0 0 1 680 17z" fill="#d94c4c"/><path d="M668 17L680 17A12 12 0 0 1 668 29z" fill="#4d84d8"/><path d="M668 17L668 29A12 12 0 0 1 656 17z" fill="#5cb85c"/><circle cx="668" cy="17" r="4" fill="#e9d9f0"/>
<rect x="690" y="3" width="148" height="30" fill="#dedede" />
<path d="M694 6h18v20h-18z" fill="#cfd6de" stroke="#8a8f98" stroke-width="1.5"/><path d="M694 18l6-6l5 5l3-2l4 4v7h-18z" fill="#7b8794"/>
<text x="718" y="23" font-size="17" fill="#555" textLength="67" lengthAdjust="spacingAndGlyphs">Vorgabe</text>
<path d="M824.4 15.84h7.2l-3.6 4.680000000000001z" fill="#444"/>
<circle cx="853" cy="15" r="10" fill="#e0a040"/><path d="M853 15V5A10 10 0 0 1 863 15z" fill="#d95050"/><path d="M853 15h10A10 10 0 0 1 853 25z" fill="#4f86d8"/><path d="M853 15v10A10 10 0 0 1 843 15z" fill="#5cb85c"/>
<circle cx="890" cy="15" r="10" fill="#e0a040"/><path d="M890 15V5A10 10 0 0 1 900 15z" fill="#d95050"/><path d="M890 15h10A10 10 0 0 1 890 25z" fill="#4f86d8"/><path d="M890 15v10A10 10 0 0 1 880 15z" fill="#5cb85c"/>
<circle cx="861" cy="23" r="6" fill="#5a8fd0" stroke="#35588a" stroke-width="1.2"/>
<path d="M893 18l8 8" stroke="#c04040" stroke-width="4"/>
<text x="919" y="25" font-size="24" fill="#555" textLength="22" lengthAdjust="spacingAndGlyphs" font-style="italic" font-family="Liberation Serif, serif">fx</text>
<path d="M955 17H971M963 9V25" stroke="#b0b0b0" stroke-width="3.4" fill="none"/>
<line x1="983" y1="11" x2="1003" y2="11" stroke="#666" stroke-width="2" />
<path d="M989.4 16.84h7.2l-3.6 4.680000000000001z" fill="#555"/>
<text x="1033" y="23" font-size="17" fill="#5a5a5a" textLength="110" lengthAdjust="spacingAndGlyphs">Basisplatte.ipt</text>
<path d="M1175.6 13v8l5.6 -4z" fill="#555"/>
<rect x="1190" y="2" width="272" height="31" fill="#fbfbfb" />
<text x="1197" y="22" font-size="17" fill="#4a4a4a" textLength="257" lengthAdjust="spacingAndGlyphs">Hilfe und Befehle durchsuchen..</text>
<circle cx="1478" cy="11" r="6.5" fill="#5b7fc0" stroke="#2c4f92" stroke-width="1.6"/><path d="M1466 29c0-9 5-12 12-12s12 3 12 12z" fill="#5b7fc0" stroke="#2c4f92" stroke-width="1.6"/>
<text x="1497" y="23" font-size="17" fill="#666" textLength="110" lengthAdjust="spacingAndGlyphs">thomasXJGXP</text>
<path d="M1625.2 16.32h5.6l-2.8 3.6399999999999997z" fill="#666"/>
<path d="M1644 7h5l4 13h13l3-9h-18" fill="none" stroke="#4a4a4a" stroke-width="2.2"/><circle cx="1655" cy="26" r="2.6" fill="#4a4a4a"/><circle cx="1665" cy="26" r="2.6" fill="#4a4a4a"/>
<path d="M1683 13l4 4l-4 4M1690 13l4 4l-4 4" fill="none" stroke="#444" stroke-width="2"/>
<line x1="1819" y1="25" x2="1833" y2="25" stroke="#333" stroke-width="2.6" />
<path d="M1855 14h12v11h-12zM1859 14v-4h12v11h-4" fill="none" stroke="#333" stroke-width="2.2"/>
<path d="M1892 9L1908 25M1908 9L1892 25" stroke="#222" stroke-width="3" fill="none"/>
<rect x="0" y="38" width="1919" height="31" fill="#dadada" />
<rect x="3" y="39" width="62" height="30" fill="#f0a43a" />
<text x="10" y="60" font-size="17" fill="#fff3dc" textLength="42" lengthAdjust="spacingAndGlyphs">Datei</text>
<rect x="492" y="40" width="80" height="30" fill="#f1f1f1" />
<text x="84" y="60" font-size="17" fill="#6e6e6e" textLength="83" lengthAdjust="spacingAndGlyphs">3D-Modell</text>
<text x="198" y="60" font-size="17" fill="#6e6e6e" textLength="47" lengthAdjust="spacingAndGlyphs">Skizze</text>
<text x="274" y="60" font-size="17" fill="#6e6e6e" textLength="202" lengthAdjust="spacingAndGlyphs">Mit Anmerkung versehen</text>
<text x="505" y="60" font-size="17" fill="#333" textLength="53" lengthAdjust="spacingAndGlyphs">Prüfen</text>
<text x="587" y="60" font-size="17" fill="#6e6e6e" textLength="46" lengthAdjust="spacingAndGlyphs">Extras</text>
<text x="662" y="60" font-size="17" fill="#6e6e6e" textLength="78" lengthAdjust="spacingAndGlyphs">Verwalten</text>
<text x="769" y="60" font-size="17" fill="#6e6e6e" textLength="60" lengthAdjust="spacingAndGlyphs">Ansicht</text>
<text x="859" y="60" font-size="17" fill="#6e6e6e" textLength="110" lengthAdjust="spacingAndGlyphs">Umgebungen</text>
<text x="998" y="60" font-size="17" fill="#6e6e6e" textLength="103" lengthAdjust="spacingAndGlyphs">Erste Schritte</text>
<text x="1130" y="60" font-size="17" fill="#6e6e6e" textLength="156" lengthAdjust="spacingAndGlyphs">Zusammenarbeiten</text>
<rect x="1331" y="47" width="20" height="14" rx="4" fill="none" stroke="#555" stroke-width="1.8"/><path d="M1338 51v6l5-3z" fill="#555"/>
<path d="M1361 54.2h6l-3 3.9000000000000004z" fill="#444"/>
<rect x="0" y="69" width="1919" height="141" fill="#f1f1f1" />
<rect x="15" y="95.5" width="45" height="8" fill="#f9e9b4" />
<rect x="15" y="103" width="45" height="6.5" fill="#f3c440" />
<rect x="15" y="109.5" width="45" height="1.5" fill="#fdf2d0" />
<rect x="15" y="111" width="45" height="7" fill="#e1a11f" />
<path d="M16 95v9M59 95v9M18 99.500h39" stroke="#4a4a4a" stroke-width="1.8" fill="none"/><path d="M17 99.500l6-3.200v6.400zM58 99.500l-6-3.200v6.400z" fill="#4a4a4a"/>
<text x="8" y="148" font-size="17" fill="#444" textLength="59" lengthAdjust="spacingAndGlyphs">Messen</text>
<path d="M108 78h38v40h-38z" fill="#f6f6f6" stroke="#dcdcdc" stroke-width="2"/><path d="M136 100h20v30h-20z" fill="#ededed" stroke="#d8d8d8" stroke-width="2"/><path d="M141 108h10M141 116h10" stroke="#cfcfcf" stroke-width="2"/>
<text x="97" y="148" font-size="17" fill="#c2c2c2" textLength="68" lengthAdjust="spacingAndGlyphs">Bereichs-</text>
<text x="77" y="170" font-size="17" fill="#c2c2c2" textLength="111" lengthAdjust="spacingAndGlyphs">eigenschaften</text>
<text x="68" y="202" font-size="17" fill="#555" textLength="59" lengthAdjust="spacingAndGlyphs">Messen</text>
<line x1="196" y1="72" x2="196" y2="206" stroke="#dedede" stroke-width="2" />
<clipPath id="zb1"><rect x="230" y="78" width="50" height="50"/></clipPath>
<rect x="230" y="78" width="50" height="50" fill="#fdfdfd" stroke="#bbb" stroke-width="1"/>
<g clip-path="url(#zb1)" fill="none" stroke="#3a3a3a" stroke-width="7.500"><path d="M228 84l26 19l-26 19"/><path d="M244 74c24 12 24 46 0 58"/><path d="M262 72c22 12 22 50 0 62"/><path d="M279 70c12 14 12 52 0 66"/></g>
<text x="204" y="148" font-size="17" fill="#444" textLength="103" lengthAdjust="spacingAndGlyphs">Zebrastreifen</text>
<clipPath id="brl1"><path d="M375 78h36c10 13 10 37 0 50h-36c-10-13-10-37 0-50z"/></clipPath>
<g clip-path="url(#brl1)"><rect x="360" y="78" width="66" height="17" fill="#e5534b"/><rect x="360" y="94" width="66" height="7" fill="#f0a030"/><rect x="360" y="100" width="66" height="5" fill="#e8d83a"/><rect x="360" y="104" width="66" height="7" fill="#4bb86a"/><rect x="360" y="110" width="66" height="19" fill="#2e9be6"/></g>
<text x="316" y="148" font-size="17" fill="#444" textLength="153" lengthAdjust="spacingAndGlyphs">Flächenverjüngung</text>
<radialGradient id="fl1" gradientUnits="userSpaceOnUse" cx="540" cy="70" r="78"><stop offset="0" stop-color="#e8503e"/><stop offset=".3" stop-color="#ea5a3c"/><stop offset=".42" stop-color="#f0a030"/><stop offset=".52" stop-color="#dfe040"/><stop offset=".66" stop-color="#4cc470"/><stop offset=".82" stop-color="#30b0d8"/><stop offset="1" stop-color="#2e86e4"/></radialGradient>
<rect x="478" y="78" width="50" height="50" fill="url(#fl1)" />
<text x="478" y="148" font-size="17" fill="#444" textLength="51" lengthAdjust="spacingAndGlyphs">Fläche</text>
<path d="M542 80h48v48h-16v-34h-16v34h-16z" fill="#f4ecc8" stroke="#86bdb0" stroke-width="2.6"/><path d="M574 80h16v48h-16z" fill="#cfe8e2" opacity=".8"/><path d="M542 80h16v14h-16z" fill="#f4d0c0" opacity=".8"/>
<text x="538" y="148" font-size="17" fill="#444" textLength="56" lengthAdjust="spacingAndGlyphs">Schnitt</text>
<path d="M624 122c2-22 10-38 22-38s20 16 22 38l-8-3c-3-9-8-14-14-14s-11 5-14 14z" fill="#eef4fb" stroke="#5a80b0" stroke-width="2.4" stroke-linejoin="round"/><path d="M634 100l-6-8M646 96v-12M658 100l6-8" stroke="#5a80b0" stroke-width="1.8"/>
<text x="603" y="148" font-size="17" fill="#444" textLength="91" lengthAdjust="spacingAndGlyphs">Krümmung</text>
<text x="418" y="202" font-size="17" fill="#555" textLength="62" lengthAdjust="spacingAndGlyphs">Analyse</text>
<line x1="700" y1="72" x2="700" y2="206" stroke="#dedede" stroke-width="2" />
<rect x="709" y="77" width="49" height="30" fill="#f7f7f7" stroke="#e2e2e2" stroke-width="1.5"/>
<circle cx="725" cy="91" r="9" fill="#fff" stroke="#555" stroke-width="2"/>
<path d="M721.4 89.84h7.2l-3.6 4.680000000000001z" fill="#444"/>
<path d="M745.4 90.44h5.2l-2.6 3.3800000000000003z" fill="#444"/>
<rect x="0" y="210" width="244" height="832" fill="#f2f2f2" />
<rect x="88" y="212" width="156" height="33" fill="#d5d5d5" />
<text x="5" y="233" font-size="15.5" fill="#444" textLength="45" lengthAdjust="spacingAndGlyphs">Modell</text>
<path d="M66.5 222.5L77.5 233.5M77.5 222.5L66.5 233.5" stroke="#333" stroke-width="2.4" fill="none"/>
<path d="M96.5 228H111.5M104 220.5V235.5" stroke="#333" stroke-width="3" fill="none"/>
<circle cx="189" cy="226" r="7.5" fill="none" stroke="#333" stroke-width="2.8"/><path d="M194 232l7 7" stroke="#333" stroke-width="3.2"/>
<path d="M215.5 221.5h19M215.5 228h19M215.5 234.5h19" stroke="#333" stroke-width="3" fill="none"/>
<line x1="244.5" y1="210" x2="244.5" y2="1042" stroke="#b4b4b4" stroke-width="1.5" />
<text x="32" y="270" font-size="15.5" fill="#2a2a2a" textLength="102" lengthAdjust="spacingAndGlyphs">Basisplatte.ipt</text>
<path d="M7 258l4-5h14v14l-4 5h-14z" fill="#3d8fd6"/><path d="M7 258h14v14h-14z" fill="#62aee8"/>
<text x="56" y="300" font-size="15.5" fill="#2a2a2a" textLength="128" lengthAdjust="spacingAndGlyphs">Volumenkörper(1)</text>
<path d="M7.5 292H18.5M13 286.5V297.5" stroke="#555" stroke-width="2" fill="none"/>
<path d="M28 284h9l3 3h11v15h-23z" fill="#d8c878"/><path d="M35 290h9v8h-9z" fill="#7f9a4a"/>
<text x="56" y="330" font-size="15.5" fill="#2a2a2a" textLength="158" lengthAdjust="spacingAndGlyphs">Ansicht: Hauptansicht</text>
<path d="M7.5 322H18.5M13 316.5V327.5" stroke="#555" stroke-width="2" fill="none"/>
<path d="M33 313v19h8M33 322h14" fill="none" stroke="#3a78b8" stroke-width="2.2"/><circle cx="33" cy="313" r="2.2" fill="#3a78b8"/><circle cx="42" cy="332" r="2.2" fill="#3a78b8"/>
<text x="56" y="360" font-size="15.5" fill="#2a2a2a" textLength="66" lengthAdjust="spacingAndGlyphs">Ursprung</text>
<path d="M7.5 352H18.5M13 346.5V357.5" stroke="#555" stroke-width="2" fill="none"/>
<path d="M28 343h9l3 3h11v16h-23z" fill="#f0c850"/><path d="M28 349h23v13h-23z" fill="#f7d870"/>
<text x="56" y="390" font-size="15.5" fill="#2a2a2a" textLength="77" lengthAdjust="spacingAndGlyphs">Extrusion1</text>
<path d="M7.5 382H18.5M13 376.5V387.5" stroke="#555" stroke-width="2" fill="none"/>
<path d="M28 377l4-5h13v15l-4 5h-13z" fill="#2f78c4"/><path d="M28 377h13v15h-13z" fill="#5aa4e4"/><path d="M49 391v-20" stroke="#444" stroke-width="1.8"/>
<text x="56" y="420" font-size="15.5" fill="#2a2a2a" textLength="77" lengthAdjust="spacingAndGlyphs">Extrusion2</text>
<path d="M7.5 412H18.5M13 406.5V417.5" stroke="#555" stroke-width="2" fill="none"/>
<path d="M28 407l4-5h13v15l-4 5h-13z" fill="#2f78c4"/><path d="M28 407h13v15h-13z" fill="#5aa4e4"/><path d="M49 421v-20" stroke="#444" stroke-width="1.8"/>
<text x="56" y="450" font-size="15.5" fill="#2a2a2a" textLength="69" lengthAdjust="spacingAndGlyphs">Spiegeln1</text>
<path d="M7.5 442H18.5M13 436.5V447.5" stroke="#555" stroke-width="2" fill="none"/>
<path d="M30 452l9-19l9 19z" fill="#dfe8f4" stroke="#44648c" stroke-width="2"/><path d="M39 433v19" stroke="#44648c" stroke-width="1.6"/>
<text x="56" y="480" font-size="15.5" fill="#2a2a2a" textLength="69" lengthAdjust="spacingAndGlyphs">Bohrung1</text>
<path d="M7.5 472H18.5M13 466.5V477.5" stroke="#555" stroke-width="2" fill="none"/>
<rect x="29" y="463" width="21" height="19" fill="#dce6ee" stroke="#4a5a6a" stroke-width="2"/><circle cx="39" cy="473" r="5.5" fill="#8aa0b4" stroke="#4a5a6a" stroke-width="1.4"/>
<text x="56" y="510" font-size="15.5" fill="#2a2a2a" textLength="83" lengthAdjust="spacingAndGlyphs">Bauteilende</text>
<circle cx="40" cy="503" r="9.5" fill="#d83030"/><path d="M35.500 498.5l9 9M44.500 498.5l-9 9" stroke="#fff" stroke-width="2.6"/>
<linearGradient id="dtb1" x1="0" y1="0" x2="0" y2="1"><stop offset="0" stop-color="#d2d2d2"/><stop offset="1" stop-color="#dedede"/></linearGradient>
<rect x="244" y="1005" width="1675" height="38" fill="url(#dtb1)" />
<path d="M256 1023l10-9l10 9M259 1021v11h5v-6h4v6h5v-11" fill="#f4f4f4" stroke="#555" stroke-width="2" stroke-linejoin="round"/>
<rect x="290" y="1007" width="165" height="33" fill="#ececec" />
<rect x="290" y="1039" width="165" height="3.5" fill="#4fa6de" />
<text x="302" y="1028" font-size="17" fill="#4a8fc0" textLength="110" lengthAdjust="spacingAndGlyphs">Basisplatte.ipt</text>
<path d="M424.5 1015.5L435.5 1026.5M435.5 1015.5L424.5 1026.5" stroke="#333" stroke-width="2" fill="none"/>
<path d="M1892.5 1016.5h19M1892.5 1023h19M1892.5 1029.5h19" stroke="#555" stroke-width="2.4" fill="none"/>
<rect x="0" y="1043" width="1919" height="37" fill="#f0f0f0" />
<text x="3" y="1070" font-size="15.5" fill="#333" textLength="1195" lengthAdjust="spacingAndGlyphs">Erstes Element zum Messen der Größe, des Abstands oder der Position auswählen (oder einen leeren Bereich zum erneuten Starten des Messens wählen)</text>
<text x="1816" y="1070" font-size="15.5" fill="#444">1</text>
<text x="1873" y="1070" font-size="15.5" fill="#444">1</text>
<text x="1661" y="1047" font-size="32" fill="#ececec" textLength="87" lengthAdjust="spacingAndGlyphs" font-weight="bold" stroke="#8e8e8e" stroke-width="1.3" paint-order="stroke" fill-opacity=".92">Linked</text>
<rect x="1751" y="1020" width="29" height="29" fill="#f4f4f4" rx="3" stroke="#a0a0a0" stroke-width="1" fill-opacity=".9"/>
<text x="1754" y="1046" font-size="27" fill="#bdbdbd" textLength="23" lengthAdjust="spacingAndGlyphs" font-weight="bold" stroke="#b0b0b0" stroke-width=".4">in</text>
<text x="1786" y="1047" font-size="32" fill="#ececec" textLength="100" lengthAdjust="spacingAndGlyphs" font-weight="bold" stroke="#8e8e8e" stroke-width="1.3" paint-order="stroke" fill-opacity=".92">Learning</text>
<rect x="1.5" y="1.5" width="1916" height="1076.25" fill="none" stroke="#fdfdfd" stroke-width="3"/>
</svg>
<svg class="p" style="left:1281px;top:60px" width="633" height="356" viewBox="0 0 1919 1079.25" font-family='"Liberation Sans", sans-serif'>
<linearGradient id="vbg2" x1="0" y1="1" x2="1" y2="0"><stop offset="0" stop-color="#bfbfbf"/><stop offset=".55" stop-color="#c5c5c5"/><stop offset="1" stop-color="#cecece"/></linearGradient><rect x="244" y="210" width="1675" height="796" fill="url(#vbg2)" />
<clipPath id="vc2"><rect x="244" y="210" width="1675" height="796"/></clipPath>
<g clip-path="url(#vc2)"><polygon points="244,346 1021,704 1042,785 244,416" fill="#d6d6d6" stroke="#4c4c4c" stroke-width="1.3" stroke-linejoin="round" />
<polygon points="1383,205 1470,205 1042,785 1021,704" fill="#d2d2d2" stroke="#4c4c4c" stroke-width="1.3" stroke-linejoin="round" />
<polygon points="244,205 1383,205 1021,704 244,346" fill="#a8a8a8" stroke="#4c4c4c" stroke-width="1.3" stroke-linejoin="round" />
<clipPath id="bh2"><ellipse cx="898" cy="431" rx="57.5" ry="48.5"/></clipPath>
<ellipse cx="898" cy="431" rx="57.500" ry="48.5" fill="#d4d4d4"/>
<g clip-path="url(#bh2)"><ellipse cx="917" cy="468" rx="57" ry="45" fill="#a6a6a6" stroke="#4c4c4c" stroke-width="1.2"/><ellipse cx="925" cy="482" rx="47" ry="36" fill="#dadada" stroke="#4c4c4c" stroke-width="1.2"/></g>
<ellipse cx="898" cy="431" rx="57.5" ry="48.500" fill="none" stroke="#4c4c4c" stroke-width="1.5"/></g>
<path d="M322 918l-18 62" stroke="#40c040" stroke-width="1.6"/><path d="M322 918l-28-6" stroke="#d04040" stroke-width="1.6"/>
<path d="M300 956l18-10l-2 18z" fill="#20a030"/>
<path d="M290 908l18 2l-10 14z" fill="#c03030"/>
<circle cx="323" cy="912" r="8.5" fill="#1818a0"/>
<text x="277" y="914" font-size="14" fill="#e03030">X</text>
<text x="316" y="900" font-size="12" fill="#2020c0">Z</text>
<text x="292" y="972" font-size="12" fill="#30c030">Y</text>
<path d="M1868 220h16v14h-16zM1876 220v14" fill="none" stroke="#444" stroke-width="2"/>
<path d="M1901 221L1913 233M1913 221L1901 233" stroke="#444" stroke-width="2" fill="none"/>
<rect x="1866" y="383" width="60" height="342" rx="8" fill="#d8d8d8" fill-opacity=".35" stroke="#8c8c8c" stroke-width="2.4"/>
<circle cx="1891" cy="432" r="15" fill="#eaeaea" fill-opacity=".5" stroke="#7c7c7c" stroke-width="2.2"/><circle cx="1891" cy="432" r="8.5" fill="none" stroke="#888888" stroke-width="2"/>
<path d="M1880 516v-14l4-2v-10h4v9h2v-11h4v11h2v-9h4v12l2-4h4l-5 14v4z" fill="#ececec" fill-opacity=".5" stroke="#787878" stroke-width="1.8"/>
<path d="M1876 534h14l6 6v18h-20z" fill="#eaeaea" fill-opacity=".5" stroke="#7c7c7c" stroke-width="1.8"/><circle cx="1894" cy="553" r="6" fill="#e8e8e8" fill-opacity=".5" stroke="#707070" stroke-width="2"/><path d="M1899 558l7 7" stroke="#707070" stroke-width="2.6"/>
<path d="M1891 598l7 9h-4v4h9v-4l7 6l-7 6v-4h-9v4h4l-7 9l-7-9h4v-4h-9v4l-7-6l7-6v4h9v-4h-4z" fill="#e8e8e8" fill-opacity=".5" stroke="#7a7a7a" stroke-width="1.6" transform="translate(0,0) scale(1)"/>
<rect x="1877" y="668" width="30" height="22" rx="3" fill="#e8e8e8" fill-opacity=".5" stroke="#7a7a7a" stroke-width="2"/><rect x="1883" y="675" width="18" height="9" fill="none" stroke="#888888" stroke-width="1.6"/><path d="M1884 668v-6h5M1899 668v-6h-5" fill="none" stroke="#7a7a7a" stroke-width="1.8"/>
<circle cx="1891" cy="466" r="1.8" fill="#999"/>
<circle cx="1891" cy="582" r="1.8" fill="#999"/>
<circle cx="1891" cy="644" r="1.8" fill="#999"/>
<circle cx="1904" cy="393" r="3.4" fill="none" stroke="#aaa" stroke-width="1.4"/><circle cx="1904" cy="714" r="3.4" fill="none" stroke="#aaa" stroke-width="1.4"/>
<g opacity="1"><path d="M1846 262l48 16l6 42l-22 36z" fill="#a4a4a4" opacity=".4"/><path d="M1835.500 268.500L1888 285L1857 325.500L1804.500 309z" fill="#dedede" stroke="#b2b2b2" stroke-width="1.4" stroke-linejoin="round"/><path d="M1804.500 309L1857 325.500L1861.500 356.500L1809 340z" fill="#d5d5d5" stroke="#b2b2b2" stroke-width="1.4" stroke-linejoin="round"/><path d="M1857 325.500L1888 285L1892 317L1861.500 356.500z" fill="#c3c3c3" stroke="#b2b2b2" stroke-width="1.4" stroke-linejoin="round"/><path d="M1832 291l32 10" stroke="#8a8a8a" stroke-width="3.4" stroke-dasharray="5 2"/><path d="M1814 324l38 12M1816 337l36 11" stroke="#b8b8b8" stroke-width="2"/></g>
<rect x="248" y="210" width="401" height="82" fill="#f4f4f4" />
<rect x="345" y="212" width="304" height="33" fill="#d5d5d5" />
<text x="254" y="233" font-size="15.5" fill="#444" textLength="54" lengthAdjust="spacingAndGlyphs">Messen</text>
<path d="M322.5 222.5L333.5 233.5M333.5 222.5L322.5 233.5" stroke="#333" stroke-width="2.4" fill="none"/>
<path d="M354.5 228H369.5M362 220.5V235.5" stroke="#333" stroke-width="3" fill="none"/>
<path d="M619.5 221.5h19M619.5 228h19M619.5 234.5h19" stroke="#333" stroke-width="3" fill="none"/>
<rect x="250" y="251" width="397" height="36" fill="#e9e9e9" />
<path d="M268.0 264v10l7.0 -5z" fill="#333"/>
<text x="288" y="275" font-size="17" fill="#555" textLength="192" lengthAdjust="spacingAndGlyphs">Erweiterte Einstellungen</text>

<path d="M1320 790v24l6-5l5 10l4-2l-5-10h8z" fill="#fff" stroke="#2c2c2c" stroke-width="2.4" stroke-linejoin="round"/><rect x="1341" y="802" width="10" height="30" fill="#ececec" stroke="#2c2c2c" stroke-width="2.6"/><path d="M1343 809h4M1343 815h4M1343 821h4M1343 827h4" stroke="#888" stroke-width="1.2"/>
<rect x="0" y="0" width="1919" height="38" fill="#d8d8d8" />
<path d="M14 3h12v4h-3v15h4v6h-14v-6h4v-15h-3z" fill="#c98a3a"/>
<path d="M12 24h16v7h-16z" fill="#8a6a48"/>
<path d="M50 7h14l7 6v14h-21z" fill="#fafafa" stroke="#555" stroke-width="2.2"/>
<path d="M84.8 16.08h6.4l-3.2 4.16z" fill="#555"/>
<path d="M103 27v-18h8l3 4h10v5M103 27l6-10h20l-6 10z" fill="#f4f4f4" stroke="#555" stroke-width="2.2" stroke-linejoin="round"/>
<path d="M139 5h22v24h-22z" fill="#4a4a4a"/><path d="M144 5h12v9h-12z" fill="#e8e8e8"/><path d="M145 20h10v9h-10z" fill="#d0d0d0"/>
<path d="M177 17l9-8v5h10v9h-4v-4h-6v5z" fill="#e8e8e8" stroke="#666" stroke-width="1.8" stroke-linejoin="round"/>
<path d="M210.4 16.44h5.2l-2.6 3.3800000000000003z" fill="#777"/>
<path d="M252 17l-9-8v5h-10v9h4v-4h6v5z" fill="#dedede" stroke="#bdbdbd" stroke-width="1.8" stroke-linejoin="round"/>
<path d="M264.4 16.44h5.2l-2.6 3.3800000000000003z" fill="#b5b5b5"/>
<line x1="283" y1="5" x2="283" y2="30" stroke="#c4c4c4" stroke-width="1.5" />
<path d="M293 18l12-11l12 11M297 16v12h6v-7h4v7h6v-12" fill="#f4f4f4" stroke="#4a4a4a" stroke-width="2.4" stroke-linejoin="round"/>
<path d="M335 8l6 5l-6 5M335 13h-3v12h14v-6" fill="none" stroke="#b0b0b0" stroke-width="2.2"/><path d="M343 18h11v10h-11z" fill="#e6e6e6" stroke="#b8b8b8" stroke-width="1.6"/>
<path d="M367.4 16.44h5.2l-2.6 3.3800000000000003z" fill="#777"/>
<path d="M384 7h22v22h-22z" fill="#4f9d5d"/><path d="M384 7h22v6h-22z" fill="#3d7f4a"/><path d="M392 15h6v5h-6zM400 21h5v5h-5z" fill="#bfe3c5"/>
<path d="M417.4 16.44h5.2l-2.6 3.3800000000000003z" fill="#777"/>
<path d="M440 6h10v14h-10z" fill="#e4e4e4" stroke="#b0b0b0" stroke-width="1.6"/><path d="M447 18h9v10h-9z" fill="#ececec" stroke="#b8b8b8" stroke-width="1.6"/>
<circle cx="484" cy="17" r="11" fill="#e9e9e9" stroke="#3f3f3f" stroke-width="3.2"/><path d="M476.500 9.500l15 15M491.500 9.500l-15 15" stroke="#3f3f3f" stroke-width="4"/>
<rect x="502" y="3" width="150" height="30" fill="#dcdcdc" />
<text x="513" y="23" font-size="17" fill="#555" textLength="77" lengthAdjust="spacingAndGlyphs">Generisch</text>
<path d="M639.4 15.84h7.2l-3.6 4.680000000000001z" fill="#444"/>
<circle cx="668" cy="17" r="12" fill="#d9a13c"/><path d="M668 17L668 5A12 12 0 0 1 680 17z" fill="#d94c4c"/><path d="M668 17L680 17A12 12 0 0 1 668 29z" fill="#4d84d8"/><path d="M668 17L668 29A12 12 0 0 1 656 17z" fill="#5cb85c"/><circle cx="668" cy="17" r="4" fill="#e9d9f0"/>
<rect x="690" y="3" width="148" height="30" fill="#dedede" />
<path d="M694 6h18v20h-18z" fill="#cfd6de" stroke="#8a8f98" stroke-width="1.5"/><path d="M694 18l6-6l5 5l3-2l4 4v7h-18z" fill="#7b8794"/>
<text x="718" y="23" font-size="17" fill="#555" textLength="67" lengthAdjust="spacingAndGlyphs">Vorgabe</text>
<path d="M824.4 15.84h7.2l-3.6 4.680000000000001z" fill="#444"/>
<circle cx="853" cy="15" r="10" fill="#e0a040"/><path d="M853 15V5A10 10 0 0 1 863 15z" fill="#d95050"/><path d="M853 15h10A10 10 0 0 1 853 25z" fill="#4f86d8"/><path d="M853 15v10A10 10 0 0 1 843 15z" fill="#5cb85c"/>
<circle cx="890" cy="15" r="10" fill="#e0a040"/><path d="M890 15V5A10 10 0 0 1 900 15z" fill="#d95050"/><path d="M890 15h10A10 10 0 0 1 890 25z" fill="#4f86d8"/><path d="M890 15v10A10 10 0 0 1 880 15z" fill="#5cb85c"/>
<circle cx="861" cy="23" r="6" fill="#5a8fd0" stroke="#35588a" stroke-width="1.2"/>
<path d="M893 18l8 8" stroke="#c04040" stroke-width="4"/>
<text x="919" y="25" font-size="24" fill="#555" textLength="22" lengthAdjust="spacingAndGlyphs" font-style="italic" font-family="Liberation Serif, serif">fx</text>
<path d="M955 17H971M963 9V25" stroke="#b0b0b0" stroke-width="3.4" fill="none"/>
<line x1="983" y1="11" x2="1003" y2="11" stroke="#666" stroke-width="2" />
<path d="M989.4 16.84h7.2l-3.6 4.680000000000001z" fill="#555"/>
<text x="1033" y="23" font-size="17" fill="#5a5a5a" textLength="110" lengthAdjust="spacingAndGlyphs">Basisplatte.ipt</text>
<path d="M1175.6 13v8l5.6 -4z" fill="#555"/>
<rect x="1190" y="2" width="272" height="31" fill="#fbfbfb" />
<text x="1197" y="22" font-size="17" fill="#4a4a4a" textLength="257" lengthAdjust="spacingAndGlyphs">Hilfe und Befehle durchsuchen..</text>
<circle cx="1478" cy="11" r="6.5" fill="#5b7fc0" stroke="#2c4f92" stroke-width="1.6"/><path d="M1466 29c0-9 5-12 12-12s12 3 12 12z" fill="#5b7fc0" stroke="#2c4f92" stroke-width="1.6"/>
<text x="1497" y="23" font-size="17" fill="#666" textLength="110" lengthAdjust="spacingAndGlyphs">thomasXJGXP</text>
<path d="M1625.2 16.32h5.6l-2.8 3.6399999999999997z" fill="#666"/>
<path d="M1644 7h5l4 13h13l3-9h-18" fill="none" stroke="#4a4a4a" stroke-width="2.2"/><circle cx="1655" cy="26" r="2.6" fill="#4a4a4a"/><circle cx="1665" cy="26" r="2.6" fill="#4a4a4a"/>
<path d="M1683 13l4 4l-4 4M1690 13l4 4l-4 4" fill="none" stroke="#444" stroke-width="2"/>
<line x1="1819" y1="25" x2="1833" y2="25" stroke="#333" stroke-width="2.6" />
<path d="M1855 14h12v11h-12zM1859 14v-4h12v11h-4" fill="none" stroke="#333" stroke-width="2.2"/>
<path d="M1892 9L1908 25M1908 9L1892 25" stroke="#222" stroke-width="3" fill="none"/>
<rect x="0" y="38" width="1919" height="31" fill="#dadada" />
<rect x="3" y="39" width="62" height="30" fill="#f0a43a" />
<text x="10" y="60" font-size="17" fill="#fff3dc" textLength="42" lengthAdjust="spacingAndGlyphs">Datei</text>
<rect x="492" y="40" width="80" height="30" fill="#f1f1f1" />
<text x="84" y="60" font-size="17" fill="#6e6e6e" textLength="83" lengthAdjust="spacingAndGlyphs">3D-Modell</text>
<text x="198" y="60" font-size="17" fill="#6e6e6e" textLength="47" lengthAdjust="spacingAndGlyphs">Skizze</text>
<text x="274" y="60" font-size="17" fill="#6e6e6e" textLength="202" lengthAdjust="spacingAndGlyphs">Mit Anmerkung versehen</text>
<text x="505" y="60" font-size="17" fill="#333" textLength="53" lengthAdjust="spacingAndGlyphs">Prüfen</text>
<text x="587" y="60" font-size="17" fill="#6e6e6e" textLength="46" lengthAdjust="spacingAndGlyphs">Extras</text>
<text x="662" y="60" font-size="17" fill="#6e6e6e" textLength="78" lengthAdjust="spacingAndGlyphs">Verwalten</text>
<text x="769" y="60" font-size="17" fill="#6e6e6e" textLength="60" lengthAdjust="spacingAndGlyphs">Ansicht</text>
<text x="859" y="60" font-size="17" fill="#6e6e6e" textLength="110" lengthAdjust="spacingAndGlyphs">Umgebungen</text>
<text x="998" y="60" font-size="17" fill="#6e6e6e" textLength="103" lengthAdjust="spacingAndGlyphs">Erste Schritte</text>
<text x="1130" y="60" font-size="17" fill="#6e6e6e" textLength="156" lengthAdjust="spacingAndGlyphs">Zusammenarbeiten</text>
<rect x="1331" y="47" width="20" height="14" rx="4" fill="none" stroke="#555" stroke-width="1.8"/><path d="M1338 51v6l5-3z" fill="#555"/>
<path d="M1361 54.2h6l-3 3.9000000000000004z" fill="#444"/>
<rect x="0" y="69" width="1919" height="141" fill="#f1f1f1" />
<rect x="15" y="95.5" width="45" height="8" fill="#f9e9b4" />
<rect x="15" y="103" width="45" height="6.5" fill="#f3c440" />
<rect x="15" y="109.5" width="45" height="1.5" fill="#fdf2d0" />
<rect x="15" y="111" width="45" height="7" fill="#e1a11f" />
<path d="M16 95v9M59 95v9M18 99.500h39" stroke="#4a4a4a" stroke-width="1.8" fill="none"/><path d="M17 99.500l6-3.200v6.400zM58 99.500l-6-3.200v6.400z" fill="#4a4a4a"/>
<text x="8" y="148" font-size="17" fill="#444" textLength="59" lengthAdjust="spacingAndGlyphs">Messen</text>
<path d="M108 78h38v40h-38z" fill="#f6f6f6" stroke="#dcdcdc" stroke-width="2"/><path d="M136 100h20v30h-20z" fill="#ededed" stroke="#d8d8d8" stroke-width="2"/><path d="M141 108h10M141 116h10" stroke="#cfcfcf" stroke-width="2"/>
<text x="97" y="148" font-size="17" fill="#c2c2c2" textLength="68" lengthAdjust="spacingAndGlyphs">Bereichs-</text>
<text x="77" y="170" font-size="17" fill="#c2c2c2" textLength="111" lengthAdjust="spacingAndGlyphs">eigenschaften</text>
<text x="68" y="202" font-size="17" fill="#555" textLength="59" lengthAdjust="spacingAndGlyphs">Messen</text>
<line x1="196" y1="72" x2="196" y2="206" stroke="#dedede" stroke-width="2" />
<clipPath id="zb2"><rect x="230" y="78" width="50" height="50"/></clipPath>
<rect x="230" y="78" width="50" height="50" fill="#fdfdfd" stroke="#bbb" stroke-width="1"/>
<g clip-path="url(#zb2)" fill="none" stroke="#3a3a3a" stroke-width="7.500"><path d="M228 84l26 19l-26 19"/><path d="M244 74c24 12 24 46 0 58"/><path d="M262 72c22 12 22 50 0 62"/><path d="M279 70c12 14 12 52 0 66"/></g>
<text x="204" y="148" font-size="17" fill="#444" textLength="103" lengthAdjust="spacingAndGlyphs">Zebrastreifen</text>
<clipPath id="brl2"><path d="M375 78h36c10 13 10 37 0 50h-36c-10-13-10-37 0-50z"/></clipPath>
<g clip-path="url(#brl2)"><rect x="360" y="78" width="66" height="17" fill="#e5534b"/><rect x="360" y="94" width="66" height="7" fill="#f0a030"/><rect x="360" y="100" width="66" height="5" fill="#e8d83a"/><rect x="360" y="104" width="66" height="7" fill="#4bb86a"/><rect x="360" y="110" width="66" height="19" fill="#2e9be6"/></g>
<text x="316" y="148" font-size="17" fill="#444" textLength="153" lengthAdjust="spacingAndGlyphs">Flächenverjüngung</text>
<radialGradient id="fl2" gradientUnits="userSpaceOnUse" cx="540" cy="70" r="78"><stop offset="0" stop-color="#e8503e"/><stop offset=".3" stop-color="#ea5a3c"/><stop offset=".42" stop-color="#f0a030"/><stop offset=".52" stop-color="#dfe040"/><stop offset=".66" stop-color="#4cc470"/><stop offset=".82" stop-color="#30b0d8"/><stop offset="1" stop-color="#2e86e4"/></radialGradient>
<rect x="478" y="78" width="50" height="50" fill="url(#fl2)" />
<text x="478" y="148" font-size="17" fill="#444" textLength="51" lengthAdjust="spacingAndGlyphs">Fläche</text>
<path d="M542 80h48v48h-16v-34h-16v34h-16z" fill="#f4ecc8" stroke="#86bdb0" stroke-width="2.6"/><path d="M574 80h16v48h-16z" fill="#cfe8e2" opacity=".8"/><path d="M542 80h16v14h-16z" fill="#f4d0c0" opacity=".8"/>
<text x="538" y="148" font-size="17" fill="#444" textLength="56" lengthAdjust="spacingAndGlyphs">Schnitt</text>
<path d="M624 122c2-22 10-38 22-38s20 16 22 38l-8-3c-3-9-8-14-14-14s-11 5-14 14z" fill="#eef4fb" stroke="#5a80b0" stroke-width="2.4" stroke-linejoin="round"/><path d="M634 100l-6-8M646 96v-12M658 100l6-8" stroke="#5a80b0" stroke-width="1.8"/>
<text x="603" y="148" font-size="17" fill="#444" textLength="91" lengthAdjust="spacingAndGlyphs">Krümmung</text>
<text x="418" y="202" font-size="17" fill="#555" textLength="62" lengthAdjust="spacingAndGlyphs">Analyse</text>
<line x1="700" y1="72" x2="700" y2="206" stroke="#dedede" stroke-width="2" />
<rect x="709" y="77" width="49" height="30" fill="#f7f7f7" stroke="#e2e2e2" stroke-width="1.5"/>
<circle cx="725" cy="91" r="9" fill="#fff" stroke="#555" stroke-width="2"/>
<path d="M721.4 89.84h7.2l-3.6 4.680000000000001z" fill="#444"/>
<path d="M745.4 90.44h5.2l-2.6 3.3800000000000003z" fill="#444"/>
<rect x="0" y="210" width="244" height="832" fill="#f2f2f2" />
<rect x="88" y="212" width="156" height="33" fill="#d5d5d5" />
<text x="5" y="233" font-size="15.5" fill="#444" textLength="45" lengthAdjust="spacingAndGlyphs">Modell</text>
<path d="M66.5 222.5L77.5 233.5M77.5 222.5L66.5 233.5" stroke="#333" stroke-width="2.4" fill="none"/>
<path d="M96.5 228H111.5M104 220.5V235.5" stroke="#333" stroke-width="3" fill="none"/>
<circle cx="189" cy="226" r="7.5" fill="none" stroke="#333" stroke-width="2.8"/><path d="M194 232l7 7" stroke="#333" stroke-width="3.2"/>
<path d="M215.5 221.5h19M215.5 228h19M215.5 234.5h19" stroke="#333" stroke-width="3" fill="none"/>
<line x1="244.5" y1="210" x2="244.5" y2="1042" stroke="#b4b4b4" stroke-width="1.5" />
<text x="32" y="270" font-size="15.5" fill="#2a2a2a" textLength="102" lengthAdjust="spacingAndGlyphs">Basisplatte.ipt</text>
<path d="M7 258l4-5h14v14l-4 5h-14z" fill="#3d8fd6"/><path d="M7 258h14v14h-14z" fill="#62aee8"/>
<text x="56" y="300" font-size="15.5" fill="#2a2a2a" textLength="128" lengthAdjust="spacingAndGlyphs">Volumenkörper(1)</text>
<path d="M7.5 292H18.5M13 286.5V297.5" stroke="#555" stroke-width="2" fill="none"/>
<path d="M28 284h9l3 3h11v15h-23z" fill="#d8c878"/><path d="M35 290h9v8h-9z" fill="#7f9a4a"/>
<text x="56" y="330" font-size="15.5" fill="#2a2a2a" textLength="158" lengthAdjust="spacingAndGlyphs">Ansicht: Hauptansicht</text>
<path d="M7.5 322H18.5M13 316.5V327.5" stroke="#555" stroke-width="2" fill="none"/>
<path d="M33 313v19h8M33 322h14" fill="none" stroke="#3a78b8" stroke-width="2.2"/><circle cx="33" cy="313" r="2.2" fill="#3a78b8"/><circle cx="42" cy="332" r="2.2" fill="#3a78b8"/>
<text x="56" y="360" font-size="15.5" fill="#2a2a2a" textLength="66" lengthAdjust="spacingAndGlyphs">Ursprung</text>
<path d="M7.5 352H18.5M13 346.5V357.5" stroke="#555" stroke-width="2" fill="none"/>
<path d="M28 343h9l3 3h11v16h-23z" fill="#f0c850"/><path d="M28 349h23v13h-23z" fill="#f7d870"/>
<text x="56" y="390" font-size="15.5" fill="#2a2a2a" textLength="77" lengthAdjust="spacingAndGlyphs">Extrusion1</text>
<path d="M7.5 382H18.5M13 376.5V387.5" stroke="#555" stroke-width="2" fill="none"/>
<path d="M28 377l4-5h13v15l-4 5h-13z" fill="#2f78c4"/><path d="M28 377h13v15h-13z" fill="#5aa4e4"/><path d="M49 391v-20" stroke="#444" stroke-width="1.8"/>
<text x="56" y="420" font-size="15.5" fill="#2a2a2a" textLength="77" lengthAdjust="spacingAndGlyphs">Extrusion2</text>
<path d="M7.5 412H18.5M13 406.5V417.5" stroke="#555" stroke-width="2" fill="none"/>
<path d="M28 407l4-5h13v15l-4 5h-13z" fill="#2f78c4"/><path d="M28 407h13v15h-13z" fill="#5aa4e4"/><path d="M49 421v-20" stroke="#444" stroke-width="1.8"/>
<text x="56" y="450" font-size="15.5" fill="#2a2a2a" textLength="69" lengthAdjust="spacingAndGlyphs">Spiegeln1</text>
<path d="M7.5 442H18.5M13 436.5V447.5" stroke="#555" stroke-width="2" fill="none"/>
<path d="M30 452l9-19l9 19z" fill="#dfe8f4" stroke="#44648c" stroke-width="2"/><path d="M39 433v19" stroke="#44648c" stroke-width="1.6"/>
<text x="56" y="480" font-size="15.5" fill="#2a2a2a" textLength="69" lengthAdjust="spacingAndGlyphs">Bohrung1</text>
<path d="M7.5 472H18.5M13 466.5V477.5" stroke="#555" stroke-width="2" fill="none"/>
<rect x="29" y="463" width="21" height="19" fill="#dce6ee" stroke="#4a5a6a" stroke-width="2"/><circle cx="39" cy="473" r="5.5" fill="#8aa0b4" stroke="#4a5a6a" stroke-width="1.4"/>
<text x="56" y="510" font-size="15.5" fill="#2a2a2a" textLength="83" lengthAdjust="spacingAndGlyphs">Bauteilende</text>
<circle cx="40" cy="503" r="9.5" fill="#d83030"/><path d="M35.500 498.5l9 9M44.500 498.5l-9 9" stroke="#fff" stroke-width="2.6"/>
<linearGradient id="dtb2" x1="0" y1="0" x2="0" y2="1"><stop offset="0" stop-color="#d2d2d2"/><stop offset="1" stop-color="#dedede"/></linearGradient>
<rect x="244" y="1005" width="1675" height="38" fill="url(#dtb2)" />
<path d="M256 1023l10-9l10 9M259 1021v11h5v-6h4v6h5v-11" fill="#f4f4f4" stroke="#555" stroke-width="2" stroke-linejoin="round"/>
<rect x="290" y="1007" width="165" height="33" fill="#ececec" />
<rect x="290" y="1039" width="165" height="3.5" fill="#4fa6de" />
<text x="302" y="1028" font-size="17" fill="#4a8fc0" textLength="110" lengthAdjust="spacingAndGlyphs">Basisplatte.ipt</text>
<path d="M424.5 1015.5L435.5 1026.5M435.5 1015.5L424.5 1026.5" stroke="#333" stroke-width="2" fill="none"/>
<path d="M1892.5 1016.5h19M1892.5 1023h19M1892.5 1029.5h19" stroke="#555" stroke-width="2.4" fill="none"/>
<rect x="0" y="1043" width="1919" height="37" fill="#f0f0f0" />
<text x="3" y="1070" font-size="15.5" fill="#333" textLength="1195" lengthAdjust="spacingAndGlyphs">Erstes Element zum Messen der Größe, des Abstands oder der Position auswählen (oder einen leeren Bereich zum erneuten Starten des Messens wählen)</text>
<text x="1816" y="1070" font-size="15.5" fill="#444">1</text>
<text x="1873" y="1070" font-size="15.5" fill="#444">1</text>
<text x="1661" y="1047" font-size="32" fill="#ececec" textLength="87" lengthAdjust="spacingAndGlyphs" font-weight="bold" stroke="#8e8e8e" stroke-width="1.3" paint-order="stroke" fill-opacity=".92">Linked</text>
<rect x="1751" y="1020" width="29" height="29" fill="#f4f4f4" rx="3" stroke="#a0a0a0" stroke-width="1" fill-opacity=".9"/>
<text x="1754" y="1046" font-size="27" fill="#bdbdbd" textLength="23" lengthAdjust="spacingAndGlyphs" font-weight="bold" stroke="#b0b0b0" stroke-width=".4">in</text>
<text x="1786" y="1047" font-size="32" fill="#ececec" textLength="100" lengthAdjust="spacingAndGlyphs" font-weight="bold" stroke="#8e8e8e" stroke-width="1.3" paint-order="stroke" fill-opacity=".92">Learning</text>
<rect x="1.5" y="1.5" width="1916" height="1076.25" fill="none" stroke="#fdfdfd" stroke-width="3"/>
</svg>
<svg class="p" style="left:5px;top:421px" width="633" height="356" viewBox="0 0 1919 1079.25" font-family='"Liberation Sans", sans-serif'>
<linearGradient id="vbg3" x1="0" y1="1" x2="1" y2="0"><stop offset="0" stop-color="#bfbfbf"/><stop offset=".55" stop-color="#c5c5c5"/><stop offset="1" stop-color="#cecece"/></linearGradient><rect x="244" y="210" width="1675" height="796" fill="url(#vbg3)" />
<clipPath id="vc3"><rect x="244" y="210" width="1675" height="796"/></clipPath>
<g clip-path="url(#vc3)"><polygon points="589,694 717.5,612 714,594 585,677" fill="#b9eab4" stroke="#8fe070" stroke-width="1.5" stroke-linejoin="round" />
<polygon points="739,612 801,574 799,562 736,598" fill="#b9eab4" stroke="#8fe070" stroke-width="1.5" stroke-linejoin="round" />
<polygon points="782.5,560.5 909,479 907,469 779,552" fill="#b9eab4" stroke="#8fe070" stroke-width="1.5" stroke-linejoin="round" />
<polygon points="909,479 1134,527 1131,506 907,469" fill="#b9eab4" stroke="#8fe070" stroke-width="1.5" stroke-linejoin="round" />
<polygon points="589,694 717.5,612 739,612 801,574 782.5,560.5 909,479 1134,527 997.5,609 941,627 939,649 811,734" fill="#bcb72b" stroke="#8de05c" stroke-width="4.2" stroke-linejoin="round" />
<path d="M940 521l95 15" stroke="#b6ecb2" stroke-width="11" stroke-linecap="round"/>
<path d="M688 685l92 14" stroke="#b6ecb2" stroke-width="11" stroke-linecap="round"/>
<ellipse cx="909" cy="507" rx="4" ry="2.6" fill="#a8e878"/>
<ellipse cx="1088" cy="542" rx="4" ry="2.6" fill="#a8e878"/>
<ellipse cx="636" cy="679" rx="4" ry="2.6" fill="#a8e878"/>
<ellipse cx="816" cy="712" rx="4" ry="2.6" fill="#a8e878"/>
<line x1="585" y1="676" x2="587" y2="690" stroke="#4a5a4a" stroke-width="1.4" />
<line x1="714" y1="593" x2="716" y2="607" stroke="#4a5a4a" stroke-width="1.4" />
<line x1="736" y1="597" x2="738" y2="611" stroke="#4a5a4a" stroke-width="1.4" />
<line x1="779" y1="549" x2="781" y2="563" stroke="#4a5a4a" stroke-width="1.4" />
<line x1="907" y1="467" x2="909" y2="481" stroke="#4a5a4a" stroke-width="1.4" />
<line x1="1131" y1="507" x2="1133" y2="521" stroke="#4a5a4a" stroke-width="1.4" />
<line x1="1021" y1="526" x2="1023" y2="540" stroke="#4a5a4a" stroke-width="1.4" />
<line x1="766" y1="690" x2="768" y2="704" stroke="#4a5a4a" stroke-width="1.4" />
<text x="914" y="493" font-size="17" fill="#1c3566" textLength="92" lengthAdjust="spacingAndGlyphs">25,000 mm</text></g>
<path d="M318 890l-10 30l-12 28" stroke="#888" stroke-width="1.2" fill="none"/>
<path d="M310 904l10-18l8 20z" fill="#1818a0"/>
<circle cx="306" cy="922" r="7.5" fill="#20a040"/>
<path d="M296 944l10-14l8 14z" fill="#c03030"/>
<text x="310" y="886" font-size="14" fill="#2020c0">Z</text>
<text x="284" y="927" font-size="11" fill="#30c030">Y</text>
<text x="286" y="958" font-size="12" fill="#e03030">X</text>
<path d="M1868 220h16v14h-16zM1876 220v14" fill="none" stroke="#444" stroke-width="2"/>
<path d="M1901 221L1913 233M1913 221L1901 233" stroke="#444" stroke-width="2" fill="none"/>
<rect x="1866" y="383" width="60" height="342" rx="8" fill="#d8d8d8" fill-opacity=".35" stroke="#8c8c8c" stroke-width="2.4"/>
<circle cx="1891" cy="432" r="15" fill="#eaeaea" fill-opacity=".5" stroke="#7c7c7c" stroke-width="2.2"/><circle cx="1891" cy="432" r="8.5" fill="none" stroke="#888888" stroke-width="2"/>
<path d="M1880 516v-14l4-2v-10h4v9h2v-11h4v11h2v-9h4v12l2-4h4l-5 14v4z" fill="#ececec" fill-opacity=".5" stroke="#787878" stroke-width="1.8"/>
<path d="M1876 534h14l6 6v18h-20z" fill="#eaeaea" fill-opacity=".5" stroke="#7c7c7c" stroke-width="1.8"/><circle cx="1894" cy="553" r="6" fill="#e8e8e8" fill-opacity=".5" stroke="#707070" stroke-width="2"/><path d="M1899 558l7 7" stroke="#707070" stroke-width="2.6"/>
<path d="M1891 598l7 9h-4v4h9v-4l7 6l-7 6v-4h-9v4h4l-7 9l-7-9h4v-4h-9v4l-7-6l7-6v4h9v-4h-4z" fill="#e8e8e8" fill-opacity=".5" stroke="#7a7a7a" stroke-width="1.6" transform="translate(0,0) scale(1)"/>
<rect x="1877" y="668" width="30" height="22" rx="3" fill="#e8e8e8" fill-opacity=".5" stroke="#7a7a7a" stroke-width="2"/><rect x="1883" y="675" width="18" height="9" fill="none" stroke="#888888" stroke-width="1.6"/><path d="M1884 668v-6h5M1899 668v-6h-5" fill="none" stroke="#7a7a7a" stroke-width="1.8"/>
<circle cx="1891" cy="466" r="1.8" fill="#999"/>
<circle cx="1891" cy="582" r="1.8" fill="#999"/>
<circle cx="1891" cy="644" r="1.8" fill="#999"/>
<circle cx="1904" cy="393" r="3.4" fill="none" stroke="#aaa" stroke-width="1.4"/><circle cx="1904" cy="714" r="3.4" fill="none" stroke="#aaa" stroke-width="1.4"/>
<g opacity="1"><path d="M1846 270l40 10l12 44l-30 30z" fill="#a8a8a8" opacity=".35"/><path d="M1807.500 302.600L1843.600 272.900L1856.300 319.600L1818 347.200z" fill="#d6d6d6" stroke="#b2b2b2" stroke-width="1.4" stroke-linejoin="round"/><path d="M1843.600 272.900L1881.800 283.500L1892.400 323.800L1856.300 319.600z" fill="#cdcdcd" stroke="#b2b2b2" stroke-width="1.4" stroke-linejoin="round"/><path d="M1818 347.200L1856.300 319.600L1892.400 323.800L1858.400 349.300z" fill="#d9d9d9" stroke="#b2b2b2" stroke-width="1.4" stroke-linejoin="round"/><path d="M1820 316l22-14" stroke="#a4a4a4" stroke-width="3" stroke-dasharray="4 2"/><path d="M1866 290l5 20" stroke="#b4b4b4" stroke-width="2"/></g>
<rect x="248" y="210" width="401" height="448" fill="#f4f4f4" />
<rect x="345" y="212" width="304" height="33" fill="#d5d5d5" />
<text x="254" y="233" font-size="15.5" fill="#444" textLength="54" lengthAdjust="spacingAndGlyphs">Messen</text>
<path d="M322.5 222.5L333.5 233.5M333.5 222.5L322.5 233.5" stroke="#333" stroke-width="2.4" fill="none"/>
<path d="M354.5 228H369.5M362 220.5V235.5" stroke="#333" stroke-width="3" fill="none"/>
<path d="M619.5 221.5h19M619.5 228h19M619.5 234.5h19" stroke="#333" stroke-width="3" fill="none"/>
<rect x="250" y="251" width="397" height="36" fill="#e9e9e9" />
<path d="M266 266.0h10l-5 6.5z" fill="#333"/>
<text x="288" y="275" font-size="17" fill="#555" textLength="125" lengthAdjust="spacingAndGlyphs">Messergebnisse</text>
<rect x="265" y="288" width="364" height="31" fill="#efc060" />
<text x="277" y="308.5" font-size="15.5" fill="#1e1e1e" textLength="114" lengthAdjust="spacingAndGlyphs">Mindestabstand</text>
<text x="430" y="308.5" font-size="15.5" fill="#1c1c1c" textLength="95" lengthAdjust="spacingAndGlyphs" font-weight="bold">25,000 mm</text>
<text x="277" y="338.5" font-size="15.5" fill="#1e1e1e" textLength="48" lengthAdjust="spacingAndGlyphs">Winkel</text>
<text x="430" y="338.5" font-size="15.5" fill="#1c1c1c" textLength="70" lengthAdjust="spacingAndGlyphs" font-weight="bold">0,00 grd</text>
<rect x="250" y="353" width="397" height="36" fill="#e9e9e9" />
<path d="M266 368.0h10l-5 6.5z" fill="#333"/>
<text x="288" y="377" font-size="17" fill="#555" textLength="152" lengthAdjust="spacingAndGlyphs">Auswahl 1 (Fläche)</text>
<text x="277" y="410.5" font-size="15.5" fill="#1e1e1e" textLength="56" lengthAdjust="spacingAndGlyphs">Umfang</text>
<text x="430" y="410.5" font-size="15.5" fill="#1c1c1c" textLength="115" lengthAdjust="spacingAndGlyphs" font-weight="bold">2133,848 mm</text>
<text x="277" y="440.5" font-size="15.5" fill="#1e1e1e" textLength="128" lengthAdjust="spacingAndGlyphs">Gesamtkonturlä..</text>
<text x="430" y="440.5" font-size="15.5" fill="#1c1c1c" textLength="115" lengthAdjust="spacingAndGlyphs" font-weight="bold">3173,671 mm</text>
<text x="277" y="470.5" font-size="15.5" fill="#1e1e1e" textLength="46" lengthAdjust="spacingAndGlyphs">Fläche</text>
<text x="430" y="470.5" font-size="15.5" fill="#1c1c1c" textLength="145" lengthAdjust="spacingAndGlyphs" font-weight="bold">219304,646 mm²</text>
<rect x="250" y="485" width="397" height="36" fill="#e9e9e9" />
<path d="M266 500.0h10l-5 6.5z" fill="#333"/>
<text x="288" y="509" font-size="17" fill="#555" textLength="152" lengthAdjust="spacingAndGlyphs">Auswahl 2 (Fläche)</text>
<text x="277" y="542.5" font-size="15.5" fill="#1e1e1e" textLength="56" lengthAdjust="spacingAndGlyphs">Umfang</text>
<text x="430" y="542.5" font-size="15.5" fill="#1c1c1c" textLength="115" lengthAdjust="spacingAndGlyphs" font-weight="bold">2133,848 mm</text>
<text x="277" y="572.5" font-size="15.5" fill="#1e1e1e" textLength="128" lengthAdjust="spacingAndGlyphs">Gesamtkonturlä..</text>
<text x="430" y="572.5" font-size="15.5" fill="#1c1c1c" textLength="115" lengthAdjust="spacingAndGlyphs" font-weight="bold">3091,989 mm</text>
<text x="277" y="602.5" font-size="15.5" fill="#1e1e1e" textLength="46" lengthAdjust="spacingAndGlyphs">Fläche</text>
<text x="430" y="602.5" font-size="15.5" fill="#1c1c1c" textLength="145" lengthAdjust="spacingAndGlyphs" font-weight="bold">219988,728 mm²</text>
<rect x="250" y="617" width="397" height="36" fill="#e9e9e9" />
<path d="M268.0 630v10l7.0 -5z" fill="#333"/>
<text x="288" y="641" font-size="17" fill="#555" textLength="192" lengthAdjust="spacingAndGlyphs">Erweiterte Einstellungen</text>

<path d="M398 702v24l6-5l5 10l4-2l-5-10h8z" fill="#fff" stroke="#2c2c2c" stroke-width="2.4" stroke-linejoin="round"/><rect x="419" y="714" width="10" height="30" fill="#ececec" stroke="#2c2c2c" stroke-width="2.6"/><path d="M421 721h4M421 727h4M421 733h4M421 739h4" stroke="#888" stroke-width="1.2"/>
<rect x="0" y="0" width="1919" height="38" fill="#d8d8d8" />
<path d="M14 3h12v4h-3v15h4v6h-14v-6h4v-15h-3z" fill="#c98a3a"/>
<path d="M12 24h16v7h-16z" fill="#8a6a48"/>
<path d="M50 7h14l7 6v14h-21z" fill="#fafafa" stroke="#555" stroke-width="2.2"/>
<path d="M84.8 16.08h6.4l-3.2 4.16z" fill="#555"/>
<path d="M103 27v-18h8l3 4h10v5M103 27l6-10h20l-6 10z" fill="#f4f4f4" stroke="#555" stroke-width="2.2" stroke-linejoin="round"/>
<path d="M139 5h22v24h-22z" fill="#4a4a4a"/><path d="M144 5h12v9h-12z" fill="#e8e8e8"/><path d="M145 20h10v9h-10z" fill="#d0d0d0"/>
<path d="M177 17l9-8v5h10v9h-4v-4h-6v5z" fill="#e8e8e8" stroke="#666" stroke-width="1.8" stroke-linejoin="round"/>
<path d="M210.4 16.44h5.2l-2.6 3.3800000000000003z" fill="#777"/>
<path d="M252 17l-9-8v5h-10v9h4v-4h6v5z" fill="#dedede" stroke="#bdbdbd" stroke-width="1.8" stroke-linejoin="round"/>
<path d="M264.4 16.44h5.2l-2.6 3.3800000000000003z" fill="#b5b5b5"/>
<line x1="283" y1="5" x2="283" y2="30" stroke="#c4c4c4" stroke-width="1.5" />
<path d="M293 18l12-11l12 11M297 16v12h6v-7h4v7h6v-12" fill="#f4f4f4" stroke="#4a4a4a" stroke-width="2.4" stroke-linejoin="round"/>
<path d="M335 8l6 5l-6 5M335 13h-3v12h14v-6" fill="none" stroke="#b0b0b0" stroke-width="2.2"/><path d="M343 18h11v10h-11z" fill="#e6e6e6" stroke="#b8b8b8" stroke-width="1.6"/>
<path d="M367.4 16.44h5.2l-2.6 3.3800000000000003z" fill="#777"/>
<path d="M384 7h22v22h-22z" fill="#4f9d5d"/><path d="M384 7h22v6h-22z" fill="#3d7f4a"/><path d="M392 15h6v5h-6zM400 21h5v5h-5z" fill="#bfe3c5"/>
<path d="M417.4 16.44h5.2l-2.6 3.3800000000000003z" fill="#777"/>
<path d="M440 6h10v14h-10z" fill="#e4e4e4" stroke="#b0b0b0" stroke-width="1.6"/><path d="M447 18h9v10h-9z" fill="#ececec" stroke="#b8b8b8" stroke-width="1.6"/>
<circle cx="484" cy="17" r="11" fill="#e9e9e9" stroke="#3f3f3f" stroke-width="3.2"/><path d="M476.500 9.500l15 15M491.500 9.500l-15 15" stroke="#3f3f3f" stroke-width="4"/>
<rect x="502" y="3" width="150" height="30" fill="#dcdcdc" />
<text x="513" y="23" font-size="17" fill="#555" textLength="77" lengthAdjust="spacingAndGlyphs">Generisch</text>
<path d="M639.4 15.84h7.2l-3.6 4.680000000000001z" fill="#444"/>
<circle cx="668" cy="17" r="12" fill="#d9a13c"/><path d="M668 17L668 5A12 12 0 0 1 680 17z" fill="#d94c4c"/><path d="M668 17L680 17A12 12 0 0 1 668 29z" fill="#4d84d8"/><path d="M668 17L668 29A12 12 0 0 1 656 17z" fill="#5cb85c"/><circle cx="668" cy="17" r="4" fill="#e9d9f0"/>
<rect x="690" y="3" width="148" height="30" fill="#dedede" />
<path d="M694 6h18v20h-18z" fill="#cfd6de" stroke="#8a8f98" stroke-width="1.5"/><path d="M694 18l6-6l5 5l3-2l4 4v7h-18z" fill="#7b8794"/>
<text x="718" y="23" font-size="17" fill="#555" textLength="67" lengthAdjust="spacingAndGlyphs">Vorgabe</text>
<path d="M824.4 15.84h7.2l-3.6 4.680000000000001z" fill="#444"/>
<circle cx="853" cy="15" r="10" fill="#e0a040"/><path d="M853 15V5A10 10 0 0 1 863 15z" fill="#d95050"/><path d="M853 15h10A10 10 0 0 1 853 25z" fill="#4f86d8"/><path d="M853 15v10A10 10 0 0 1 843 15z" fill="#5cb85c"/>
<circle cx="890" cy="15" r="10" fill="#e0a040"/><path d="M890 15V5A10 10 0 0 1 900 15z" fill="#d95050"/><path d="M890 15h10A10 10 0 0 1 890 25z" fill="#4f86d8"/><path d="M890 15v10A10 10 0 0 1 880 15z" fill="#5cb85c"/>
<circle cx="861" cy="23" r="6" fill="#5a8fd0" stroke="#35588a" stroke-width="1.2"/>
<path d="M893 18l8 8" stroke="#c04040" stroke-width="4"/>
<text x="919" y="25" font-size="24" fill="#555" textLength="22" lengthAdjust="spacingAndGlyphs" font-style="italic" font-family="Liberation Serif, serif">fx</text>
<path d="M955 17H971M963 9V25" stroke="#b0b0b0" stroke-width="3.4" fill="none"/>
<line x1="983" y1="11" x2="1003" y2="11" stroke="#666" stroke-width="2" />
<path d="M989.4 16.84h7.2l-3.6 4.680000000000001z" fill="#555"/>
<text x="1033" y="23" font-size="17" fill="#5a5a5a" textLength="110" lengthAdjust="spacingAndGlyphs">Basisplatte.ipt</text>
<path d="M1175.6 13v8l5.6 -4z" fill="#555"/>
<rect x="1190" y="2" width="272" height="31" fill="#fbfbfb" />
<text x="1197" y="22" font-size="17" fill="#4a4a4a" textLength="257" lengthAdjust="spacingAndGlyphs">Hilfe und Befehle durchsuchen..</text>
<circle cx="1478" cy="11" r="6.5" fill="#5b7fc0" stroke="#2c4f92" stroke-width="1.6"/><path d="M1466 29c0-9 5-12 12-12s12 3 12 12z" fill="#5b7fc0" stroke="#2c4f92" stroke-width="1.6"/>
<text x="1497" y="23" font-size="17" fill="#666" textLength="110" lengthAdjust="spacingAndGlyphs">thomasXJGXP</text>
<path d="M1625.2 16.32h5.6l-2.8 3.6399999999999997z" fill="#666"/>
<path d="M1644 7h5l4 13h13l3-9h-18" fill="none" stroke="#4a4a4a" stroke-width="2.2"/><circle cx="1655" cy="26" r="2.6" fill="#4a4a4a"/><circle cx="1665" cy="26" r="2.6" fill="#4a4a4a"/>
<path d="M1683 13l4 4l-4 4M1690 13l4 4l-4 4" fill="none" stroke="#444" stroke-width="2"/>
<line x1="1819" y1="25" x2="1833" y2="25" stroke="#333" stroke-width="2.6" />
<path d="M1855 14h12v11h-12zM1859 14v-4h12v11h-4" fill="none" stroke="#333" stroke-width="2.2"/>
<path d="M1892 9L1908 25M1908 9L1892 25" stroke="#222" stroke-width="3" fill="none"/>
<rect x="0" y="38" width="1919" height="31" fill="#dadada" />
<rect x="3" y="39" width="62" height="30" fill="#f0a43a" />
<text x="10" y="60" font-size="17" fill="#fff3dc" textLength="42" lengthAdjust="spacingAndGlyphs">Datei</text>
<rect x="492" y="40" width="80" height="30" fill="#f1f1f1" />
<text x="84" y="60" font-size="17" fill="#6e6e6e" textLength="83" lengthAdjust="spacingAndGlyphs">3D-Modell</text>
<text x="198" y="60" font-size="17" fill="#6e6e6e" textLength="47" lengthAdjust="spacingAndGlyphs">Skizze</text>
<text x="274" y="60" font-size="17" fill="#6e6e6e" textLength="202" lengthAdjust="spacingAndGlyphs">Mit Anmerkung versehen</text>
<text x="505" y="60" font-size="17" fill="#333" textLength="53" lengthAdjust="spacingAndGlyphs">Prüfen</text>
<text x="587" y="60" font-size="17" fill="#6e6e6e" textLength="46" lengthAdjust="spacingAndGlyphs">Extras</text>
<text x="662" y="60" font-size="17" fill="#6e6e6e" textLength="78" lengthAdjust="spacingAndGlyphs">Verwalten</text>
<text x="769" y="60" font-size="17" fill="#6e6e6e" textLength="60" lengthAdjust="spacingAndGlyphs">Ansicht</text>
<text x="859" y="60" font-size="17" fill="#6e6e6e" textLength="110" lengthAdjust="spacingAndGlyphs">Umgebungen</text>
<text x="998" y="60" font-size="17" fill="#6e6e6e" textLength="103" lengthAdjust="spacingAndGlyphs">Erste Schritte</text>
<text x="1130" y="60" font-size="17" fill="#6e6e6e" textLength="156" lengthAdjust="spacingAndGlyphs">Zusammenarbeiten</text>
<rect x="1331" y="47" width="20" height="14" rx="4" fill="none" stroke="#555" stroke-width="1.8"/><path d="M1338 51v6l5-3z" fill="#555"/>
<path d="M1361 54.2h6l-3 3.9000000000000004z" fill="#444"/>
<rect x="0" y="69" width="1919" height="141" fill="#f1f1f1" />
<rect x="15" y="95.5" width="45" height="8" fill="#f9e9b4" />
<rect x="15" y="103" width="45" height="6.5" fill="#f3c440" />
<rect x="15" y="109.5" width="45" height="1.5" fill="#fdf2d0" />
<rect x="15" y="111" width="45" height="7" fill="#e1a11f" />
<path d="M16 95v9M59 95v9M18 99.500h39" stroke="#4a4a4a" stroke-width="1.8" fill="none"/><path d="M17 99.500l6-3.200v6.400zM58 99.500l-6-3.200v6.400z" fill="#4a4a4a"/>
<text x="8" y="148" font-size="17" fill="#444" textLength="59" lengthAdjust="spacingAndGlyphs">Messen</text>
<path d="M108 78h38v40h-38z" fill="#f6f6f6" stroke="#dcdcdc" stroke-width="2"/><path d="M136 100h20v30h-20z" fill="#ededed" stroke="#d8d8d8" stroke-width="2"/><path d="M141 108h10M141 116h10" stroke="#cfcfcf" stroke-width="2"/>
<text x="97" y="148" font-size="17" fill="#c2c2c2" textLength="68" lengthAdjust="spacingAndGlyphs">Bereichs-</text>
<text x="77" y="170" font-size="17" fill="#c2c2c2" textLength="111" lengthAdjust="spacingAndGlyphs">eigenschaften</text>
<text x="68" y="202" font-size="17" fill="#555" textLength="59" lengthAdjust="spacingAndGlyphs">Messen</text>
<line x1="196" y1="72" x2="196" y2="206" stroke="#dedede" stroke-width="2" />
<clipPath id="zb3"><rect x="230" y="78" width="50" height="50"/></clipPath>
<rect x="230" y="78" width="50" height="50" fill="#fdfdfd" stroke="#bbb" stroke-width="1"/>
<g clip-path="url(#zb3)" fill="none" stroke="#3a3a3a" stroke-width="7.500"><path d="M228 84l26 19l-26 19"/><path d="M244 74c24 12 24 46 0 58"/><path d="M262 72c22 12 22 50 0 62"/><path d="M279 70c12 14 12 52 0 66"/></g>
<text x="204" y="148" font-size="17" fill="#444" textLength="103" lengthAdjust="spacingAndGlyphs">Zebrastreifen</text>
<clipPath id="brl3"><path d="M375 78h36c10 13 10 37 0 50h-36c-10-13-10-37 0-50z"/></clipPath>
<g clip-path="url(#brl3)"><rect x="360" y="78" width="66" height="17" fill="#e5534b"/><rect x="360" y="94" width="66" height="7" fill="#f0a030"/><rect x="360" y="100" width="66" height="5" fill="#e8d83a"/><rect x="360" y="104" width="66" height="7" fill="#4bb86a"/><rect x="360" y="110" width="66" height="19" fill="#2e9be6"/></g>
<text x="316" y="148" font-size="17" fill="#444" textLength="153" lengthAdjust="spacingAndGlyphs">Flächenverjüngung</text>
<radialGradient id="fl3" gradientUnits="userSpaceOnUse" cx="540" cy="70" r="78"><stop offset="0" stop-color="#e8503e"/><stop offset=".3" stop-color="#ea5a3c"/><stop offset=".42" stop-color="#f0a030"/><stop offset=".52" stop-color="#dfe040"/><stop offset=".66" stop-color="#4cc470"/><stop offset=".82" stop-color="#30b0d8"/><stop offset="1" stop-color="#2e86e4"/></radialGradient>
<rect x="478" y="78" width="50" height="50" fill="url(#fl3)" />
<text x="478" y="148" font-size="17" fill="#444" textLength="51" lengthAdjust="spacingAndGlyphs">Fläche</text>
<path d="M542 80h48v48h-16v-34h-16v34h-16z" fill="#f4ecc8" stroke="#86bdb0" stroke-width="2.6"/><path d="M574 80h16v48h-16z" fill="#cfe8e2" opacity=".8"/><path d="M542 80h16v14h-16z" fill="#f4d0c0" opacity=".8"/>
<text x="538" y="148" font-size="17" fill="#444" textLength="56" lengthAdjust="spacingAndGlyphs">Schnitt</text>
<path d="M624 122c2-22 10-38 22-38s20 16 22 38l-8-3c-3-9-8-14-14-14s-11 5-14 14z" fill="#eef4fb" stroke="#5a80b0" stroke-width="2.4" stroke-linejoin="round"/><path d="M634 100l-6-8M646 96v-12M658 100l6-8" stroke="#5a80b0" stroke-width="1.8"/>
<text x="603" y="148" font-size="17" fill="#444" textLength="91" lengthAdjust="spacingAndGlyphs">Krümmung</text>
<text x="418" y="202" font-size="17" fill="#555" textLength="62" lengthAdjust="spacingAndGlyphs">Analyse</text>
<line x1="700" y1="72" x2="700" y2="206" stroke="#dedede" stroke-width="2" />
<rect x="709" y="77" width="49" height="30" fill="#f7f7f7" stroke="#e2e2e2" stroke-width="1.5"/>
<circle cx="725" cy="91" r="9" fill="#fff" stroke="#555" stroke-width="2"/>
<path d="M721.4 89.84h7.2l-3.6 4.680000000000001z" fill="#444"/>
<path d="M745.4 90.44h5.2l-2.6 3.3800000000000003z" fill="#444"/>
<rect x="0" y="210" width="244" height="832" fill="#f2f2f2" />
<rect x="88" y="212" width="156" height="33" fill="#d5d5d5" />
<text x="5" y="233" font-size="15.5" fill="#444" textLength="45" lengthAdjust="spacingAndGlyphs">Modell</text>
<path d="M66.5 222.5L77.5 233.5M77.5 222.5L66.5 233.5" stroke="#333" stroke-width="2.4" fill="none"/>
<path d="M96.5 228H111.5M104 220.5V235.5" stroke="#333" stroke-width="3" fill="none"/>
<circle cx="189" cy="226" r="7.5" fill="none" stroke="#333" stroke-width="2.8"/><path d="M194 232l7 7" stroke="#333" stroke-width="3.2"/>
<path d="M215.5 221.5h19M215.5 228h19M215.5 234.5h19" stroke="#333" stroke-width="3" fill="none"/>
<line x1="244.5" y1="210" x2="244.5" y2="1042" stroke="#b4b4b4" stroke-width="1.5" />
<text x="32" y="270" font-size="15.5" fill="#2a2a2a" textLength="102" lengthAdjust="spacingAndGlyphs">Basisplatte.ipt</text>
<path d="M7 258l4-5h14v14l-4 5h-14z" fill="#3d8fd6"/><path d="M7 258h14v14h-14z" fill="#62aee8"/>
<text x="56" y="300" font-size="15.5" fill="#2a2a2a" textLength="128" lengthAdjust="spacingAndGlyphs">Volumenkörper(1)</text>
<path d="M7.5 292H18.5M13 286.5V297.5" stroke="#555" stroke-width="2" fill="none"/>
<path d="M28 284h9l3 3h11v15h-23z" fill="#d8c878"/><path d="M35 290h9v8h-9z" fill="#7f9a4a"/>
<text x="56" y="330" font-size="15.5" fill="#2a2a2a" textLength="158" lengthAdjust="spacingAndGlyphs">Ansicht: Hauptansicht</text>
<path d="M7.5 322H18.5M13 316.5V327.5" stroke="#555" stroke-width="2" fill="none"/>
<path d="M33 313v19h8M33 322h14" fill="none" stroke="#3a78b8" stroke-width="2.2"/><circle cx="33" cy="313" r="2.2" fill="#3a78b8"/><circle cx="42" cy="332" r="2.2" fill="#3a78b8"/>
<text x="56" y="360" font-size="15.5" fill="#2a2a2a" textLength="66" lengthAdjust="spacingAndGlyphs">Ursprung</text>
<path d="M7.5 352H18.5M13 346.5V357.5" stroke="#555" stroke-width="2" fill="none"/>
<path d="M28 343h9l3 3h11v16h-23z" fill="#f0c850"/><path d="M28 349h23v13h-23z" fill="#f7d870"/>
<text x="56" y="390" font-size="15.5" fill="#2a2a2a" textLength="77" lengthAdjust="spacingAndGlyphs">Extrusion1</text>
<path d="M7.5 382H18.5M13 376.5V387.5" stroke="#555" stroke-width="2" fill="none"/>
<path d="M28 377l4-5h13v15l-4 5h-13z" fill="#2f78c4"/><path d="M28 377h13v15h-13z" fill="#5aa4e4"/><path d="M49 391v-20" stroke="#444" stroke-width="1.8"/>
<text x="56" y="420" font-size="15.5" fill="#2a2a2a" textLength="77" lengthAdjust="spacingAndGlyphs">Extrusion2</text>
<path d="M7.5 412H18.5M13 406.5V417.5" stroke="#555" stroke-width="2" fill="none"/>
<path d="M28 407l4-5h13v15l-4 5h-13z" fill="#2f78c4"/><path d="M28 407h13v15h-13z" fill="#5aa4e4"/><path d="M49 421v-20" stroke="#444" stroke-width="1.8"/>
<text x="56" y="450" font-size="15.5" fill="#2a2a2a" textLength="69" lengthAdjust="spacingAndGlyphs">Spiegeln1</text>
<path d="M7.5 442H18.5M13 436.5V447.5" stroke="#555" stroke-width="2" fill="none"/>
<path d="M30 452l9-19l9 19z" fill="#dfe8f4" stroke="#44648c" stroke-width="2"/><path d="M39 433v19" stroke="#44648c" stroke-width="1.6"/>
<text x="56" y="480" font-size="15.5" fill="#2a2a2a" textLength="69" lengthAdjust="spacingAndGlyphs">Bohrung1</text>
<path d="M7.5 472H18.5M13 466.5V477.5" stroke="#555" stroke-width="2" fill="none"/>
<rect x="29" y="463" width="21" height="19" fill="#dce6ee" stroke="#4a5a6a" stroke-width="2"/><circle cx="39" cy="473" r="5.5" fill="#8aa0b4" stroke="#4a5a6a" stroke-width="1.4"/>
<text x="56" y="510" font-size="15.5" fill="#2a2a2a" textLength="83" lengthAdjust="spacingAndGlyphs">Bauteilende</text>
<circle cx="40" cy="503" r="9.5" fill="#d83030"/><path d="M35.500 498.5l9 9M44.500 498.5l-9 9" stroke="#fff" stroke-width="2.6"/>
<linearGradient id="dtb3" x1="0" y1="0" x2="0" y2="1"><stop offset="0" stop-color="#d2d2d2"/><stop offset="1" stop-color="#dedede"/></linearGradient>
<rect x="244" y="1005" width="1675" height="38" fill="url(#dtb3)" />
<path d="M256 1023l10-9l10 9M259 1021v11h5v-6h4v6h5v-11" fill="#f4f4f4" stroke="#555" stroke-width="2" stroke-linejoin="round"/>
<rect x="290" y="1007" width="165" height="33" fill="#ececec" />
<rect x="290" y="1039" width="165" height="3.5" fill="#4fa6de" />
<text x="302" y="1028" font-size="17" fill="#4a8fc0" textLength="110" lengthAdjust="spacingAndGlyphs">Basisplatte.ipt</text>
<path d="M424.5 1015.5L435.5 1026.5M435.5 1015.5L424.5 1026.5" stroke="#333" stroke-width="2" fill="none"/>
<path d="M1892.5 1016.5h19M1892.5 1023h19M1892.5 1029.5h19" stroke="#555" stroke-width="2.4" fill="none"/>
<rect x="0" y="1043" width="1919" height="37" fill="#f0f0f0" />
<text x="3" y="1070" font-size="15.5" fill="#333" textLength="1140" lengthAdjust="spacingAndGlyphs">Nächsten Punkt/nächste Linie/Kante/Achse, Ebene oder Fläche auswählen (oder einen leeren Bereich zum erneuten Starten des Messens wählen)</text>
<text x="1816" y="1070" font-size="15.5" fill="#444">1</text>
<text x="1873" y="1070" font-size="15.5" fill="#444">1</text>
<text x="1661" y="1047" font-size="32" fill="#ececec" textLength="87" lengthAdjust="spacingAndGlyphs" font-weight="bold" stroke="#8e8e8e" stroke-width="1.3" paint-order="stroke" fill-opacity=".92">Linked</text>
<rect x="1751" y="1020" width="29" height="29" fill="#f4f4f4" rx="3" stroke="#a0a0a0" stroke-width="1" fill-opacity=".9"/>
<text x="1754" y="1046" font-size="27" fill="#bdbdbd" textLength="23" lengthAdjust="spacingAndGlyphs" font-weight="bold" stroke="#b0b0b0" stroke-width=".4">in</text>
<text x="1786" y="1047" font-size="32" fill="#ececec" textLength="100" lengthAdjust="spacingAndGlyphs" font-weight="bold" stroke="#8e8e8e" stroke-width="1.3" paint-order="stroke" fill-opacity=".92">Learning</text>
<rect x="1.5" y="1.5" width="1916" height="1076.25" fill="none" stroke="#fdfdfd" stroke-width="3"/>
</svg>
<svg class="p" style="left:643px;top:421px" width="633" height="356" viewBox="0 0 1919 1079.25" font-family='"Liberation Sans", sans-serif'>
<linearGradient id="vbg4" x1="0" y1="1" x2="1" y2="0"><stop offset="0" stop-color="#bfbfbf"/><stop offset=".55" stop-color="#c5c5c5"/><stop offset="1" stop-color="#cecece"/></linearGradient><rect x="244" y="210" width="1675" height="796" fill="url(#vbg4)" />
<clipPath id="vc4"><rect x="244" y="210" width="1675" height="796"/></clipPath>
<g clip-path="url(#vc4)"><polygon points="589,694 717.5,612 714,594 585,677" fill="#b9eab4" stroke="#8fe070" stroke-width="1.5" stroke-linejoin="round" />
<polygon points="739,612 801,574 799,562 736,598" fill="#b9eab4" stroke="#8fe070" stroke-width="1.5" stroke-linejoin="round" />
<polygon points="782.5,560.5 909,479 907,469 779,552" fill="#b9eab4" stroke="#8fe070" stroke-width="1.5" stroke-linejoin="round" />
<polygon points="909,479 1134,527 1131,506 907,469" fill="#b9eab4" stroke="#8fe070" stroke-width="1.5" stroke-linejoin="round" />
<polygon points="589,694 717.5,612 739,612 801,574 782.5,560.5 909,479 1134,527 997.5,609 941,627 939,649 811,734" fill="#bcb72b" stroke="#8de05c" stroke-width="4.2" stroke-linejoin="round" />
<path d="M940 521l95 15" stroke="#b6ecb2" stroke-width="11" stroke-linecap="round"/>
<path d="M688 685l92 14" stroke="#b6ecb2" stroke-width="11" stroke-linecap="round"/>
<ellipse cx="909" cy="507" rx="4" ry="2.6" fill="#a8e878"/>
<ellipse cx="1088" cy="542" rx="4" ry="2.6" fill="#a8e878"/>
<ellipse cx="636" cy="679" rx="4" ry="2.6" fill="#a8e878"/>
<ellipse cx="816" cy="712" rx="4" ry="2.6" fill="#a8e878"/>
<line x1="585" y1="676" x2="587" y2="690" stroke="#4a5a4a" stroke-width="1.4" />
<line x1="714" y1="593" x2="716" y2="607" stroke="#4a5a4a" stroke-width="1.4" />
<line x1="736" y1="597" x2="738" y2="611" stroke="#4a5a4a" stroke-width="1.4" />
<line x1="779" y1="549" x2="781" y2="563" stroke="#4a5a4a" stroke-width="1.4" />
<line x1="907" y1="467" x2="909" y2="481" stroke="#4a5a4a" stroke-width="1.4" />
<line x1="1131" y1="507" x2="1133" y2="521" stroke="#4a5a4a" stroke-width="1.4" />
<line x1="1021" y1="526" x2="1023" y2="540" stroke="#4a5a4a" stroke-width="1.4" />
<line x1="766" y1="690" x2="768" y2="704" stroke="#4a5a4a" stroke-width="1.4" />
<text x="914" y="493" font-size="17" fill="#1c3566" textLength="92" lengthAdjust="spacingAndGlyphs">25,000 mm</text></g>
<path d="M318 890l-10 30l-12 28" stroke="#888" stroke-width="1.2" fill="none"/>
<path d="M310 904l10-18l8 20z" fill="#1818a0"/>
<circle cx="306" cy="922" r="7.5" fill="#20a040"/>
<path d="M296 944l10-14l8 14z" fill="#c03030"/>
<text x="310" y="886" font-size="14" fill="#2020c0">Z</text>
<text x="284" y="927" font-size="11" fill="#30c030">Y</text>
<text x="286" y="958" font-size="12" fill="#e03030">X</text>
<path d="M1868 220h16v14h-16zM1876 220v14" fill="none" stroke="#444" stroke-width="2"/>
<path d="M1901 221L1913 233M1913 221L1901 233" stroke="#444" stroke-width="2" fill="none"/>
<rect x="1866" y="383" width="60" height="342" rx="8" fill="#d8d8d8" fill-opacity=".35" stroke="#8c8c8c" stroke-width="2.4"/>
<circle cx="1891" cy="432" r="15" fill="#eaeaea" fill-opacity=".5" stroke="#7c7c7c" stroke-width="2.2"/><circle cx="1891" cy="432" r="8.5" fill="none" stroke="#888888" stroke-width="2"/>
<path d="M1880 516v-14l4-2v-10h4v9h2v-11h4v11h2v-9h4v12l2-4h4l-5 14v4z" fill="#ececec" fill-opacity=".5" stroke="#787878" stroke-width="1.8"/>
<path d="M1876 534h14l6 6v18h-20z" fill="#eaeaea" fill-opacity=".5" stroke="#7c7c7c" stroke-width="1.8"/><circle cx="1894" cy="553" r="6" fill="#e8e8e8" fill-opacity=".5" stroke="#707070" stroke-width="2"/><path d="M1899 558l7 7" stroke="#707070" stroke-width="2.6"/>
<path d="M1891 598l7 9h-4v4h9v-4l7 6l-7 6v-4h-9v4h4l-7 9l-7-9h4v-4h-9v4l-7-6l7-6v4h9v-4h-4z" fill="#e8e8e8" fill-opacity=".5" stroke="#7a7a7a" stroke-width="1.6" transform="translate(0,0) scale(1)"/>
<rect x="1877" y="668" width="30" height="22" rx="3" fill="#e8e8e8" fill-opacity=".5" stroke="#7a7a7a" stroke-width="2"/><rect x="1883" y="675" width="18" height="9" fill="none" stroke="#888888" stroke-width="1.6"/><path d="M1884 668v-6h5M1899 668v-6h-5" fill="none" stroke="#7a7a7a" stroke-width="1.8"/>
<circle cx="1891" cy="466" r="1.8" fill="#999"/>
<circle cx="1891" cy="582" r="1.8" fill="#999"/>
<circle cx="1891" cy="644" r="1.8" fill="#999"/>
<circle cx="1904" cy="393" r="3.4" fill="none" stroke="#aaa" stroke-width="1.4"/><circle cx="1904" cy="714" r="3.4" fill="none" stroke="#aaa" stroke-width="1.4"/>
<g opacity="1"><path d="M1846 270l40 10l12 44l-30 30z" fill="#a8a8a8" opacity=".35"/><path d="M1807.500 302.600L1843.600 272.900L1856.300 319.600L1818 347.200z" fill="#d6d6d6" stroke="#b2b2b2" stroke-width="1.4" stroke-linejoin="round"/><path d="M1843.600 272.900L1881.800 283.500L1892.400 323.800L1856.300 319.600z" fill="#cdcdcd" stroke="#b2b2b2" stroke-width="1.4" stroke-linejoin="round"/><path d="M1818 347.200L1856.300 319.600L1892.400 323.800L1858.400 349.300z" fill="#d9d9d9" stroke="#b2b2b2" stroke-width="1.4" stroke-linejoin="round"/><path d="M1820 316l22-14" stroke="#a4a4a4" stroke-width="3" stroke-dasharray="4 2"/><path d="M1866 290l5 20" stroke="#b4b4b4" stroke-width="2"/></g>
<rect x="248" y="210" width="401" height="448" fill="#f4f4f4" />
<rect x="345" y="212" width="304" height="33" fill="#d5d5d5" />
<text x="254" y="233" font-size="15.5" fill="#444" textLength="54" lengthAdjust="spacingAndGlyphs">Messen</text>
<path d="M322.5 222.5L333.5 233.5M333.5 222.5L322.5 233.5" stroke="#333" stroke-width="2.4" fill="none"/>
<path d="M354.5 228H369.5M362 220.5V235.5" stroke="#333" stroke-width="3" fill="none"/>
<path d="M619.5 221.5h19M619.5 228h19M619.5 234.5h19" stroke="#333" stroke-width="3" fill="none"/>
<rect x="250" y="251" width="397" height="36" fill="#e9e9e9" />
<path d="M266 266.0h10l-5 6.5z" fill="#333"/>
<text x="288" y="275" font-size="17" fill="#555" textLength="125" lengthAdjust="spacingAndGlyphs">Messergebnisse</text>
<rect x="265" y="288" width="364" height="31" fill="#efc060" />
<text x="277" y="308.5" font-size="15.5" fill="#1e1e1e" textLength="114" lengthAdjust="spacingAndGlyphs">Mindestabstand</text>
<text x="430" y="308.5" font-size="15.5" fill="#1c1c1c" textLength="95" lengthAdjust="spacingAndGlyphs" font-weight="bold">25,000 mm</text>
<text x="277" y="338.5" font-size="15.5" fill="#1e1e1e" textLength="48" lengthAdjust="spacingAndGlyphs">Winkel</text>
<text x="430" y="338.5" font-size="15.5" fill="#1c1c1c" textLength="70" lengthAdjust="spacingAndGlyphs" font-weight="bold">0,00 grd</text>
<rect x="250" y="353" width="397" height="36" fill="#e9e9e9" />
<path d="M266 368.0h10l-5 6.5z" fill="#333"/>
<text x="288" y="377" font-size="17" fill="#555" textLength="152" lengthAdjust="spacingAndGlyphs">Auswahl 1 (Fläche)</text>
<text x="277" y="410.5" font-size="15.5" fill="#1e1e1e" textLength="56" lengthAdjust="spacingAndGlyphs">Umfang</text>
<text x="430" y="410.5" font-size="15.5" fill="#1c1c1c" textLength="115" lengthAdjust="spacingAndGlyphs" font-weight="bold">2133,848 mm</text>
<text x="277" y="440.5" font-size="15.5" fill="#1e1e1e" textLength="128" lengthAdjust="spacingAndGlyphs">Gesamtkonturlä..</text>
<text x="430" y="440.5" font-size="15.5" fill="#1c1c1c" textLength="115" lengthAdjust="spacingAndGlyphs" font-weight="bold">3173,671 mm</text>
<text x="277" y="470.5" font-size="15.5" fill="#1e1e1e" textLength="46" lengthAdjust="spacingAndGlyphs">Fläche</text>
<text x="430" y="470.5" font-size="15.5" fill="#1c1c1c" textLength="145" lengthAdjust="spacingAndGlyphs" font-weight="bold">219304,646 mm²</text>
<rect x="250" y="485" width="397" height="36" fill="#e9e9e9" />
<path d="M266 500.0h10l-5 6.5z" fill="#333"/>
<text x="288" y="509" font-size="17" fill="#555" textLength="152" lengthAdjust="spacingAndGlyphs">Auswahl 2 (Fläche)</text>
<text x="277" y="542.5" font-size="15.5" fill="#1e1e1e" textLength="56" lengthAdjust="spacingAndGlyphs">Umfang</text>
<text x="430" y="542.5" font-size="15.5" fill="#1c1c1c" textLength="115" lengthAdjust="spacingAndGlyphs" font-weight="bold">2133,848 mm</text>
<text x="277" y="572.5" font-size="15.5" fill="#1e1e1e" textLength="128" lengthAdjust="spacingAndGlyphs">Gesamtkonturlä..</text>
<text x="430" y="572.5" font-size="15.5" fill="#1c1c1c" textLength="115" lengthAdjust="spacingAndGlyphs" font-weight="bold">3091,989 mm</text>
<text x="277" y="602.5" font-size="15.5" fill="#1e1e1e" textLength="46" lengthAdjust="spacingAndGlyphs">Fläche</text>
<text x="430" y="602.5" font-size="15.5" fill="#1c1c1c" textLength="145" lengthAdjust="spacingAndGlyphs" font-weight="bold">219988,728 mm²</text>
<rect x="250" y="617" width="397" height="36" fill="#e9e9e9" />
<path d="M268.0 630v10l7.0 -5z" fill="#333"/>
<text x="288" y="641" font-size="17" fill="#555" textLength="192" lengthAdjust="spacingAndGlyphs">Erweiterte Einstellungen</text>
<circle cx="607" cy="335" r="9" fill="#444"/><path d="M602 335h10M607 330v10" stroke="#fff" stroke-width="2"/>

<path d="M330 334v26l6.500-5.500l5.500 11l4.500-2.200l-5.500-11h9z" fill="#fff" stroke="#2c2c2c" stroke-width="2.2" stroke-linejoin="round"/>
<rect x="0" y="0" width="1919" height="38" fill="#d8d8d8" />
<path d="M14 3h12v4h-3v15h4v6h-14v-6h4v-15h-3z" fill="#c98a3a"/>
<path d="M12 24h16v7h-16z" fill="#8a6a48"/>
<path d="M50 7h14l7 6v14h-21z" fill="#fafafa" stroke="#555" stroke-width="2.2"/>
<path d="M84.8 16.08h6.4l-3.2 4.16z" fill="#555"/>
<path d="M103 27v-18h8l3 4h10v5M103 27l6-10h20l-6 10z" fill="#f4f4f4" stroke="#555" stroke-width="2.2" stroke-linejoin="round"/>
<path d="M139 5h22v24h-22z" fill="#4a4a4a"/><path d="M144 5h12v9h-12z" fill="#e8e8e8"/><path d="M145 20h10v9h-10z" fill="#d0d0d0"/>
<path d="M177 17l9-8v5h10v9h-4v-4h-6v5z" fill="#e8e8e8" stroke="#666" stroke-width="1.8" stroke-linejoin="round"/>
<path d="M210.4 16.44h5.2l-2.6 3.3800000000000003z" fill="#777"/>
<path d="M252 17l-9-8v5h-10v9h4v-4h6v5z" fill="#dedede" stroke="#bdbdbd" stroke-width="1.8" stroke-linejoin="round"/>
<path d="M264.4 16.44h5.2l-2.6 3.3800000000000003z" fill="#b5b5b5"/>
<line x1="283" y1="5" x2="283" y2="30" stroke="#c4c4c4" stroke-width="1.5" />
<path d="M293 18l12-11l12 11M297 16v12h6v-7h4v7h6v-12" fill="#f4f4f4" stroke="#4a4a4a" stroke-width="2.4" stroke-linejoin="round"/>
<path d="M335 8l6 5l-6 5M335 13h-3v12h14v-6" fill="none" stroke="#b0b0b0" stroke-width="2.2"/><path d="M343 18h11v10h-11z" fill="#e6e6e6" stroke="#b8b8b8" stroke-width="1.6"/>
<path d="M367.4 16.44h5.2l-2.6 3.3800000000000003z" fill="#777"/>
<path d="M384 7h22v22h-22z" fill="#4f9d5d"/><path d="M384 7h22v6h-22z" fill="#3d7f4a"/><path d="M392 15h6v5h-6zM400 21h5v5h-5z" fill="#bfe3c5"/>
<path d="M417.4 16.44h5.2l-2.6 3.3800000000000003z" fill="#777"/>
<path d="M440 6h10v14h-10z" fill="#e4e4e4" stroke="#b0b0b0" stroke-width="1.6"/><path d="M447 18h9v10h-9z" fill="#ececec" stroke="#b8b8b8" stroke-width="1.6"/>
<circle cx="484" cy="17" r="11" fill="#e9e9e9" stroke="#3f3f3f" stroke-width="3.2"/><path d="M476.500 9.500l15 15M491.500 9.500l-15 15" stroke="#3f3f3f" stroke-width="4"/>
<rect x="502" y="3" width="150" height="30" fill="#dcdcdc" />
<text x="513" y="23" font-size="17" fill="#555" textLength="77" lengthAdjust="spacingAndGlyphs">Generisch</text>
<path d="M639.4 15.84h7.2l-3.6 4.680000000000001z" fill="#444"/>
<circle cx="668" cy="17" r="12" fill="#d9a13c"/><path d="M668 17L668 5A12 12 0 0 1 680 17z" fill="#d94c4c"/><path d="M668 17L680 17A12 12 0 0 1 668 29z" fill="#4d84d8"/><path d="M668 17L668 29A12 12 0 0 1 656 17z" fill="#5cb85c"/><circle cx="668" cy="17" r="4" fill="#e9d9f0"/>
<rect x="690" y="3" width="148" height="30" fill="#dedede" />
<path d="M694 6h18v20h-18z" fill="#cfd6de" stroke="#8a8f98" stroke-width="1.5"/><path d="M694 18l6-6l5 5l3-2l4 4v7h-18z" fill="#7b8794"/>
<text x="718" y="23" font-size="17" fill="#555" textLength="67" lengthAdjust="spacingAndGlyphs">Vorgabe</text>
<path d="M824.4 15.84h7.2l-3.6 4.680000000000001z" fill="#444"/>
<circle cx="853" cy="15" r="10" fill="#e0a040"/><path d="M853 15V5A10 10 0 0 1 863 15z" fill="#d95050"/><path d="M853 15h10A10 10 0 0 1 853 25z" fill="#4f86d8"/><path d="M853 15v10A10 10 0 0 1 843 15z" fill="#5cb85c"/>
<circle cx="890" cy="15" r="10" fill="#e0a040"/><path d="M890 15V5A10 10 0 0 1 900 15z" fill="#d95050"/><path d="M890 15h10A10 10 0 0 1 890 25z" fill="#4f86d8"/><path d="M890 15v10A10 10 0 0 1 880 15z" fill="#5cb85c"/>
<circle cx="861" cy="23" r="6" fill="#5a8fd0" stroke="#35588a" stroke-width="1.2"/>
<path d="M893 18l8 8" stroke="#c04040" stroke-width="4"/>
<text x="919" y="25" font-size="24" fill="#555" textLength="22" lengthAdjust="spacingAndGlyphs" font-style="italic" font-family="Liberation Serif, serif">fx</text>
<path d="M955 17H971M963 9V25" stroke="#b0b0b0" stroke-width="3.4" fill="none"/>
<line x1="983" y1="11" x2="1003" y2="11" stroke="#666" stroke-width="2" />
<path d="M989.4 16.84h7.2l-3.6 4.680000000000001z" fill="#555"/>
<text x="1033" y="23" font-size="17" fill="#5a5a5a" textLength="110" lengthAdjust="spacingAndGlyphs">Basisplatte.ipt</text>
<path d="M1175.6 13v8l5.6 -4z" fill="#555"/>
<rect x="1190" y="2" width="272" height="31" fill="#fbfbfb" />
<text x="1197" y="22" font-size="17" fill="#4a4a4a" textLength="257" lengthAdjust="spacingAndGlyphs">Hilfe und Befehle durchsuchen..</text>
<circle cx="1478" cy="11" r="6.5" fill="#5b7fc0" stroke="#2c4f92" stroke-width="1.6"/><path d="M1466 29c0-9 5-12 12-12s12 3 12 12z" fill="#5b7fc0" stroke="#2c4f92" stroke-width="1.6"/>
<text x="1497" y="23" font-size="17" fill="#666" textLength="110" lengthAdjust="spacingAndGlyphs">thomasXJGXP</text>
<path d="M1625.2 16.32h5.6l-2.8 3.6399999999999997z" fill="#666"/>
<path d="M1644 7h5l4 13h13l3-9h-18" fill="none" stroke="#4a4a4a" stroke-width="2.2"/><circle cx="1655" cy="26" r="2.6" fill="#4a4a4a"/><circle cx="1665" cy="26" r="2.6" fill="#4a4a4a"/>
<path d="M1683 13l4 4l-4 4M1690 13l4 4l-4 4" fill="none" stroke="#444" stroke-width="2"/>
<line x1="1819" y1="25" x2="1833" y2="25" stroke="#333" stroke-width="2.6" />
<path d="M1855 14h12v11h-12zM1859 14v-4h12v11h-4" fill="none" stroke="#333" stroke-width="2.2"/>
<path d="M1892 9L1908 25M1908 9L1892 25" stroke="#222" stroke-width="3" fill="none"/>
<rect x="0" y="38" width="1919" height="31" fill="#dadada" />
<rect x="3" y="39" width="62" height="30" fill="#f0a43a" />
<text x="10" y="60" font-size="17" fill="#fff3dc" textLength="42" lengthAdjust="spacingAndGlyphs">Datei</text>
<rect x="492" y="40" width="80" height="30" fill="#f1f1f1" />
<text x="84" y="60" font-size="17" fill="#6e6e6e" textLength="83" lengthAdjust="spacingAndGlyphs">3D-Modell</text>
<text x="198" y="60" font-size="17" fill="#6e6e6e" textLength="47" lengthAdjust="spacingAndGlyphs">Skizze</text>
<text x="274" y="60" font-size="17" fill="#6e6e6e" textLength="202" lengthAdjust="spacingAndGlyphs">Mit Anmerkung versehen</text>
<text x="505" y="60" font-size="17" fill="#333" textLength="53" lengthAdjust="spacingAndGlyphs">Prüfen</text>
<text x="587" y="60" font-size="17" fill="#6e6e6e" textLength="46" lengthAdjust="spacingAndGlyphs">Extras</text>
<text x="662" y="60" font-size="17" fill="#6e6e6e" textLength="78" lengthAdjust="spacingAndGlyphs">Verwalten</text>
<text x="769" y="60" font-size="17" fill="#6e6e6e" textLength="60" lengthAdjust="spacingAndGlyphs">Ansicht</text>
<text x="859" y="60" font-size="17" fill="#6e6e6e" textLength="110" lengthAdjust="spacingAndGlyphs">Umgebungen</text>
<text x="998" y="60" font-size="17" fill="#6e6e6e" textLength="103" lengthAdjust="spacingAndGlyphs">Erste Schritte</text>
<text x="1130" y="60" font-size="17" fill="#6e6e6e" textLength="156" lengthAdjust="spacingAndGlyphs">Zusammenarbeiten</text>
<rect x="1331" y="47" width="20" height="14" rx="4" fill="none" stroke="#555" stroke-width="1.8"/><path d="M1338 51v6l5-3z" fill="#555"/>
<path d="M1361 54.2h6l-3 3.9000000000000004z" fill="#444"/>
<rect x="0" y="69" width="1919" height="141" fill="#f1f1f1" />
<rect x="15" y="95.5" width="45" height="8" fill="#f9e9b4" />
<rect x="15" y="103" width="45" height="6.5" fill="#f3c440" />
<rect x="15" y="109.5" width="45" height="1.5" fill="#fdf2d0" />
<rect x="15" y="111" width="45" height="7" fill="#e1a11f" />
<path d="M16 95v9M59 95v9M18 99.500h39" stroke="#4a4a4a" stroke-width="1.8" fill="none"/><path d="M17 99.500l6-3.200v6.400zM58 99.500l-6-3.200v6.400z" fill="#4a4a4a"/>
<text x="8" y="148" font-size="17" fill="#444" textLength="59" lengthAdjust="spacingAndGlyphs">Messen</text>
<path d="M108 78h38v40h-38z" fill="#f6f6f6" stroke="#dcdcdc" stroke-width="2"/><path d="M136 100h20v30h-20z" fill="#ededed" stroke="#d8d8d8" stroke-width="2"/><path d="M141 108h10M141 116h10" stroke="#cfcfcf" stroke-width="2"/>
<text x="97" y="148" font-size="17" fill="#c2c2c2" textLength="68" lengthAdjust="spacingAndGlyphs">Bereichs-</text>
<text x="77" y="170" font-size="17" fill="#c2c2c2" textLength="111" lengthAdjust="spacingAndGlyphs">eigenschaften</text>
<text x="68" y="202" font-size="17" fill="#555" textLength="59" lengthAdjust="spacingAndGlyphs">Messen</text>
<line x1="196" y1="72" x2="196" y2="206" stroke="#dedede" stroke-width="2" />
<clipPath id="zb4"><rect x="230" y="78" width="50" height="50"/></clipPath>
<rect x="230" y="78" width="50" height="50" fill="#fdfdfd" stroke="#bbb" stroke-width="1"/>
<g clip-path="url(#zb4)" fill="none" stroke="#3a3a3a" stroke-width="7.500"><path d="M228 84l26 19l-26 19"/><path d="M244 74c24 12 24 46 0 58"/><path d="M262 72c22 12 22 50 0 62"/><path d="M279 70c12 14 12 52 0 66"/></g>
<text x="204" y="148" font-size="17" fill="#444" textLength="103" lengthAdjust="spacingAndGlyphs">Zebrastreifen</text>
<clipPath id="brl4"><path d="M375 78h36c10 13 10 37 0 50h-36c-10-13-10-37 0-50z"/></clipPath>
<g clip-path="url(#brl4)"><rect x="360" y="78" width="66" height="17" fill="#e5534b"/><rect x="360" y="94" width="66" height="7" fill="#f0a030"/><rect x="360" y="100" width="66" height="5" fill="#e8d83a"/><rect x="360" y="104" width="66" height="7" fill="#4bb86a"/><rect x="360" y="110" width="66" height="19" fill="#2e9be6"/></g>
<text x="316" y="148" font-size="17" fill="#444" textLength="153" lengthAdjust="spacingAndGlyphs">Flächenverjüngung</text>
<radialGradient id="fl4" gradientUnits="userSpaceOnUse" cx="540" cy="70" r="78"><stop offset="0" stop-color="#e8503e"/><stop offset=".3" stop-color="#ea5a3c"/><stop offset=".42" stop-color="#f0a030"/><stop offset=".52" stop-color="#dfe040"/><stop offset=".66" stop-color="#4cc470"/><stop offset=".82" stop-color="#30b0d8"/><stop offset="1" stop-color="#2e86e4"/></radialGradient>
<rect x="478" y="78" width="50" height="50" fill="url(#fl4)" />
<text x="478" y="148" font-size="17" fill="#444" textLength="51" lengthAdjust="spacingAndGlyphs">Fläche</text>
<path d="M542 80h48v48h-16v-34h-16v34h-16z" fill="#f4ecc8" stroke="#86bdb0" stroke-width="2.6"/><path d="M574 80h16v48h-16z" fill="#cfe8e2" opacity=".8"/><path d="M542 80h16v14h-16z" fill="#f4d0c0" opacity=".8"/>
<text x="538" y="148" font-size="17" fill="#444" textLength="56" lengthAdjust="spacingAndGlyphs">Schnitt</text>
<path d="M624 122c2-22 10-38 22-38s20 16 22 38l-8-3c-3-9-8-14-14-14s-11 5-14 14z" fill="#eef4fb" stroke="#5a80b0" stroke-width="2.4" stroke-linejoin="round"/><path d="M634 100l-6-8M646 96v-12M658 100l6-8" stroke="#5a80b0" stroke-width="1.8"/>
<text x="603" y="148" font-size="17" fill="#444" textLength="91" lengthAdjust="spacingAndGlyphs">Krümmung</text>
<text x="418" y="202" font-size="17" fill="#555" textLength="62" lengthAdjust="spacingAndGlyphs">Analyse</text>
<line x1="700" y1="72" x2="700" y2="206" stroke="#dedede" stroke-width="2" />
<rect x="709" y="77" width="49" height="30" fill="#f7f7f7" stroke="#e2e2e2" stroke-width="1.5"/>
<circle cx="725" cy="91" r="9" fill="#fff" stroke="#555" stroke-width="2"/>
<path d="M721.4 89.84h7.2l-3.6 4.680000000000001z" fill="#444"/>
<path d="M745.4 90.44h5.2l-2.6 3.3800000000000003z" fill="#444"/>
<rect x="0" y="210" width="244" height="832" fill="#f2f2f2" />
<rect x="88" y="212" width="156" height="33" fill="#d5d5d5" />
<text x="5" y="233" font-size="15.5" fill="#444" textLength="45" lengthAdjust="spacingAndGlyphs">Modell</text>
<path d="M66.5 222.5L77.5 233.5M77.5 222.5L66.5 233.5" stroke="#333" stroke-width="2.4" fill="none"/>
<path d="M96.5 228H111.5M104 220.5V235.5" stroke="#333" stroke-width="3" fill="none"/>
<circle cx="189" cy="226" r="7.5" fill="none" stroke="#333" stroke-width="2.8"/><path d="M194 232l7 7" stroke="#333" stroke-width="3.2"/>
<path d="M215.5 221.5h19M215.5 228h19M215.5 234.5h19" stroke="#333" stroke-width="3" fill="none"/>
<line x1="244.5" y1="210" x2="244.5" y2="1042" stroke="#b4b4b4" stroke-width="1.5" />
<text x="32" y="270" font-size="15.5" fill="#2a2a2a" textLength="102" lengthAdjust="spacingAndGlyphs">Basisplatte.ipt</text>
<path d="M7 258l4-5h14v14l-4 5h-14z" fill="#3d8fd6"/><path d="M7 258h14v14h-14z" fill="#62aee8"/>
<text x="56" y="300" font-size="15.5" fill="#2a2a2a" textLength="128" lengthAdjust="spacingAndGlyphs">Volumenkörper(1)</text>
<path d="M7.5 292H18.5M13 286.5V297.5" stroke="#555" stroke-width="2" fill="none"/>
<path d="M28 284h9l3 3h11v15h-23z" fill="#d8c878"/><path d="M35 290h9v8h-9z" fill="#7f9a4a"/>
<text x="56" y="330" font-size="15.5" fill="#2a2a2a" textLength="158" lengthAdjust="spacingAndGlyphs">Ansicht: Hauptansicht</text>
<path d="M7.5 322H18.5M13 316.5V327.5" stroke="#555" stroke-width="2" fill="none"/>
<path d="M33 313v19h8M33 322h14" fill="none" stroke="#3a78b8" stroke-width="2.2"/><circle cx="33" cy="313" r="2.2" fill="#3a78b8"/><circle cx="42" cy="332" r="2.2" fill="#3a78b8"/>
<text x="56" y="360" font-size="15.5" fill="#2a2a2a" textLength="66" lengthAdjust="spacingAndGlyphs">Ursprung</text>
<path d="M7.5 352H18.5M13 346.5V357.5" stroke="#555" stroke-width="2" fill="none"/>
<path d="M28 343h9l3 3h11v16h-23z" fill="#f0c850"/><path d="M28 349h23v13h-23z" fill="#f7d870"/>
<text x="56" y="390" font-size="15.5" fill="#2a2a2a" textLength="77" lengthAdjust="spacingAndGlyphs">Extrusion1</text>
<path d="M7.5 382H18.5M13 376.5V387.5" stroke="#555" stroke-width="2" fill="none"/>
<path d="M28 377l4-5h13v15l-4 5h-13z" fill="#2f78c4"/><path d="M28 377h13v15h-13z" fill="#5aa4e4"/><path d="M49 391v-20" stroke="#444" stroke-width="1.8"/>
<text x="56" y="420" font-size="15.5" fill="#2a2a2a" textLength="77" lengthAdjust="spacingAndGlyphs">Extrusion2</text>
<path d="M7.5 412H18.5M13 406.5V417.5" stroke="#555" stroke-width="2" fill="none"/>
<path d="M28 407l4-5h13v15l-4 5h-13z" fill="#2f78c4"/><path d="M28 407h13v15h-13z" fill="#5aa4e4"/><path d="M49 421v-20" stroke="#444" stroke-width="1.8"/>
<text x="56" y="450" font-size="15.5" fill="#2a2a2a" textLength="69" lengthAdjust="spacingAndGlyphs">Spiegeln1</text>
<path d="M7.5 442H18.5M13 436.5V447.5" stroke="#555" stroke-width="2" fill="none"/>
<path d="M30 452l9-19l9 19z" fill="#dfe8f4" stroke="#44648c" stroke-width="2"/><path d="M39 433v19" stroke="#44648c" stroke-width="1.6"/>
<text x="56" y="480" font-size="15.5" fill="#2a2a2a" textLength="69" lengthAdjust="spacingAndGlyphs">Bohrung1</text>
<path d="M7.5 472H18.5M13 466.5V477.5" stroke="#555" stroke-width="2" fill="none"/>
<rect x="29" y="463" width="21" height="19" fill="#dce6ee" stroke="#4a5a6a" stroke-width="2"/><circle cx="39" cy="473" r="5.5" fill="#8aa0b4" stroke="#4a5a6a" stroke-width="1.4"/>
<text x="56" y="510" font-size="15.5" fill="#2a2a2a" textLength="83" lengthAdjust="spacingAndGlyphs">Bauteilende</text>
<circle cx="40" cy="503" r="9.5" fill="#d83030"/><path d="M35.500 498.5l9 9M44.500 498.5l-9 9" stroke="#fff" stroke-width="2.6"/>
<linearGradient id="dtb4" x1="0" y1="0" x2="0" y2="1"><stop offset="0" stop-color="#d2d2d2"/><stop offset="1" stop-color="#dedede"/></linearGradient>
<rect x="244" y="1005" width="1675" height="38" fill="url(#dtb4)" />
<path d="M256 1023l10-9l10 9M259 1021v11h5v-6h4v6h5v-11" fill="#f4f4f4" stroke="#555" stroke-width="2" stroke-linejoin="round"/>
<rect x="290" y="1007" width="165" height="33" fill="#ececec" />
<rect x="290" y="1039" width="165" height="3.5" fill="#4fa6de" />
<text x="302" y="1028" font-size="17" fill="#4a8fc0" textLength="110" lengthAdjust="spacingAndGlyphs">Basisplatte.ipt</text>
<path d="M424.5 1015.5L435.5 1026.5M435.5 1015.5L424.5 1026.5" stroke="#333" stroke-width="2" fill="none"/>
<path d="M1892.5 1016.5h19M1892.5 1023h19M1892.5 1029.5h19" stroke="#555" stroke-width="2.4" fill="none"/>
<rect x="0" y="1043" width="1919" height="37" fill="#f0f0f0" />
<text x="3" y="1070" font-size="15.5" fill="#333" textLength="1140" lengthAdjust="spacingAndGlyphs">Nächsten Punkt/nächste Linie/Kante/Achse, Ebene oder Fläche auswählen (oder einen leeren Bereich zum erneuten Starten des Messens wählen)</text>
<text x="1816" y="1070" font-size="15.5" fill="#444">1</text>
<text x="1873" y="1070" font-size="15.5" fill="#444">1</text>
<text x="1661" y="1047" font-size="32" fill="#ececec" textLength="87" lengthAdjust="spacingAndGlyphs" font-weight="bold" stroke="#8e8e8e" stroke-width="1.3" paint-order="stroke" fill-opacity=".92">Linked</text>
<rect x="1751" y="1020" width="29" height="29" fill="#f4f4f4" rx="3" stroke="#a0a0a0" stroke-width="1" fill-opacity=".9"/>
<text x="1754" y="1046" font-size="27" fill="#bdbdbd" textLength="23" lengthAdjust="spacingAndGlyphs" font-weight="bold" stroke="#b0b0b0" stroke-width=".4">in</text>
<text x="1786" y="1047" font-size="32" fill="#ececec" textLength="100" lengthAdjust="spacingAndGlyphs" font-weight="bold" stroke="#8e8e8e" stroke-width="1.3" paint-order="stroke" fill-opacity=".92">Learning</text>
<rect x="1.5" y="1.5" width="1916" height="1076.25" fill="none" stroke="#fdfdfd" stroke-width="3"/>
</svg>
<svg class="p" style="left:1281px;top:421px" width="633" height="356" viewBox="0 0 1919 1079.25" font-family='"Liberation Sans", sans-serif'>
<linearGradient id="vbg5" x1="0" y1="1" x2="1" y2="0"><stop offset="0" stop-color="#bfbfbf"/><stop offset=".55" stop-color="#c5c5c5"/><stop offset="1" stop-color="#cecece"/></linearGradient><rect x="244" y="210" width="1675" height="796" fill="url(#vbg5)" />
<clipPath id="vc5"><rect x="244" y="210" width="1675" height="796"/></clipPath>
<g clip-path="url(#vc5)"><polygon points="1667,205 1782,205 1192,1006 1094,1006 1088,984" fill="#d3d3d3" stroke="#4c4c4c" stroke-width="1.3" stroke-linejoin="round" />
<polygon points="240,825 1088,984 1094,1010 620,1010 240,938" fill="#ecaaaa" stroke="#d62a2a" stroke-width="4" stroke-linejoin="round" />
<polygon points="240,205 1667,205 1088,984 240,825.5" fill="#a8a8a8" />
<line x1="1667" y1="205" x2="1088" y2="984" stroke="#4c4c4c" stroke-width="1.3" />
<line x1="240" y1="825" x2="1088" y2="984" stroke="#d62a2a" stroke-width="4" />
<path d="M1188 210L1016 441C990 485 1030 512 1075 507C1125 503 1160 487 1181 461L1370 210z" fill="#d0d0d0" stroke="#4c4c4c" stroke-width="1.4"/>
<path d="M1305.500 210L1086 507" stroke="#4c4c4c" stroke-width="1.2" fill="none"/>
<path d="M1020 437l19 60" stroke="#4c4c4c" stroke-width="1.2" fill="none"/>
<linearGradient id="gcy5" x1="0" y1="0" x2="0" y2="1"><stop offset="0" stop-color="#7fe47f" stop-opacity=".55"/><stop offset="1" stop-color="#7fe47f" stop-opacity="0"/></linearGradient>
<path d="M880 800L884 880Q940 915 1000 870L996 780z" fill="url(#gcy5)"/>
<g transform="translate(935,796) rotate(-14)"><ellipse rx="61" ry="39" fill="#80e282"/><ellipse rx="50" ry="29" cx="-1" cy="-3" fill="#a8eaa8"/><path d="M-6 37Q8 16 59 12Q42 40 -6 37z" fill="#84d888" opacity=".8"/></g>
<text x="741" y="746" font-size="17" fill="#1c2288" textLength="152" lengthAdjust="spacingAndGlyphs" stroke="#1c2288" stroke-width=".3">10,000 mm Radius</text>
<line x1="834" y1="752" x2="886" y2="780" stroke="#1c2a70" stroke-width="1.6" />
<path d="M889 782l-13 -1l6 -10z" fill="#101a60"/></g>
<path d="M318 896l-4 30l-6 30" stroke="#888" stroke-width="1.2" fill="none"/><path d="M314 926l-22-4" stroke="#d04040" stroke-width="1.4"/>
<path d="M311 908l8-16l9 18z" fill="#301880"/>
<path d="M290 922l14-8v16z" fill="#d02020"/>
<circle cx="312" cy="947" r="7" fill="#30a030"/>
<text x="311" y="890" font-size="14" fill="#2020c0">Z</text>
<text x="276" y="926" font-size="13" fill="#e03030">X</text>
<text x="296" y="968" font-size="12" fill="#30c030">Y</text>
<path d="M1868 220h16v14h-16zM1876 220v14" fill="none" stroke="#444" stroke-width="2"/>
<path d="M1901 221L1913 233M1913 221L1901 233" stroke="#444" stroke-width="2" fill="none"/>
<rect x="1866" y="383" width="60" height="342" rx="8" fill="#d8d8d8" fill-opacity=".35" stroke="#8c8c8c" stroke-width="2.4"/>
<circle cx="1891" cy="432" r="15" fill="#eaeaea" fill-opacity=".5" stroke="#7c7c7c" stroke-width="2.2"/><circle cx="1891" cy="432" r="8.5" fill="none" stroke="#888888" stroke-width="2"/>
<path d="M1880 516v-14l4-2v-10h4v9h2v-11h4v11h2v-9h4v12l2-4h4l-5 14v4z" fill="#ececec" fill-opacity=".5" stroke="#787878" stroke-width="1.8"/>
<path d="M1876 534h14l6 6v18h-20z" fill="#eaeaea" fill-opacity=".5" stroke="#7c7c7c" stroke-width="1.8"/><circle cx="1894" cy="553" r="6" fill="#e8e8e8" fill-opacity=".5" stroke="#707070" stroke-width="2"/><path d="M1899 558l7 7" stroke="#707070" stroke-width="2.6"/>
<path d="M1891 598l7 9h-4v4h9v-4l7 6l-7 6v-4h-9v4h4l-7 9l-7-9h4v-4h-9v4l-7-6l7-6v4h9v-4h-4z" fill="#e8e8e8" fill-opacity=".5" stroke="#7a7a7a" stroke-width="1.6" transform="translate(0,0) scale(1)"/>
<rect x="1877" y="668" width="30" height="22" rx="3" fill="#e8e8e8" fill-opacity=".5" stroke="#7a7a7a" stroke-width="2"/><rect x="1883" y="675" width="18" height="9" fill="none" stroke="#888888" stroke-width="1.6"/><path d="M1884 668v-6h5M1899 668v-6h-5" fill="none" stroke="#7a7a7a" stroke-width="1.8"/>
<circle cx="1891" cy="466" r="1.8" fill="#999"/>
<circle cx="1891" cy="582" r="1.8" fill="#999"/>
<circle cx="1891" cy="644" r="1.8" fill="#999"/>
<circle cx="1904" cy="393" r="3.4" fill="none" stroke="#aaa" stroke-width="1.4"/><circle cx="1904" cy="714" r="3.4" fill="none" stroke="#aaa" stroke-width="1.4"/>
<g opacity="1"><path d="M1834 268l52 4l8 48l-14 26z" fill="#9c9c9c" opacity=".5"/><path d="M1805.300 306.900L1830.800 275L1883.900 279.300L1864.800 304.700z" fill="#d8d8d8" stroke="#b2b2b2" stroke-width="1.4" stroke-linejoin="round"/><path d="M1805.300 306.900L1864.800 304.700L1866.900 357.800L1818.100 345.100z" fill="#dadada" stroke="#b2b2b2" stroke-width="1.4" stroke-linejoin="round"/><path d="M1883.900 279.300L1888.100 321.700L1866.900 357.800L1864.800 304.700z" fill="#c6c6c6" stroke="#b2b2b2" stroke-width="1.4" stroke-linejoin="round"/><path d="M1828 288l34-1M1824 322l30 8" stroke="#9a9a9a" stroke-width="2.6" stroke-dasharray="5 2"/><path d="M1820 308l36 2M1826 336l34 10" stroke="#bababa" stroke-width="1.8"/></g>
<rect x="248" y="210" width="401" height="245" fill="#f4f4f4" />
<rect x="345" y="212" width="304" height="33" fill="#d5d5d5" />
<text x="254" y="233" font-size="15.5" fill="#444" textLength="54" lengthAdjust="spacingAndGlyphs">Messen</text>
<path d="M322.5 222.5L333.5 233.5M333.5 222.5L322.5 233.5" stroke="#333" stroke-width="2.4" fill="none"/>
<path d="M354.5 228H369.5M362 220.5V235.5" stroke="#333" stroke-width="3" fill="none"/>
<path d="M619.5 221.5h19M619.5 228h19M619.5 234.5h19" stroke="#333" stroke-width="3" fill="none"/>
<rect x="250" y="251" width="397" height="36" fill="#e9e9e9" />
<path d="M266 266.0h10l-5 6.5z" fill="#333"/>
<text x="288" y="275" font-size="17" fill="#555" textLength="152" lengthAdjust="spacingAndGlyphs">Auswahl 1 (Fläche)</text>
<rect x="265" y="288" width="364" height="31" fill="#efc060" />
<text x="277" y="308.5" font-size="15.5" fill="#1e1e1e" textLength="48" lengthAdjust="spacingAndGlyphs">Radius</text>
<text x="430" y="308.5" font-size="15.5" fill="#1c1c1c" textLength="95" lengthAdjust="spacingAndGlyphs" font-weight="bold">10,000 mm</text>
<text x="277" y="338.5" font-size="15.5" fill="#1e1e1e" textLength="95" lengthAdjust="spacingAndGlyphs">Durchmesser</text>
<text x="430" y="338.5" font-size="15.5" fill="#1c1c1c" textLength="95" lengthAdjust="spacingAndGlyphs" font-weight="bold">20,000 mm</text>
<text x="277" y="368.5" font-size="15.5" fill="#1e1e1e" textLength="128" lengthAdjust="spacingAndGlyphs">Gesamtkonturlä..</text>
<text x="430" y="368.5" font-size="15.5" fill="#1c1c1c" textLength="105" lengthAdjust="spacingAndGlyphs" font-weight="bold">125,664 mm</text>
<text x="277" y="398.5" font-size="15.5" fill="#1e1e1e" textLength="46" lengthAdjust="spacingAndGlyphs">Fläche</text>
<text x="430" y="398.5" font-size="15.5" fill="#1c1c1c" textLength="113" lengthAdjust="spacingAndGlyphs" font-weight="bold">848,230 mm²</text>
<rect x="250" y="413" width="397" height="36" fill="#e9e9e9" />
<path d="M268.0 426v10l7.0 -5z" fill="#333"/>
<text x="288" y="437" font-size="17" fill="#555" textLength="192" lengthAdjust="spacingAndGlyphs">Erweiterte Einstellungen</text>

<path d="M661 921v24l6-5l5 10l4-2l-5-10h8z" fill="#fff" stroke="#2c2c2c" stroke-width="2.4" stroke-linejoin="round"/><rect x="682" y="933" width="10" height="30" fill="#ececec" stroke="#2c2c2c" stroke-width="2.6"/><path d="M684 940h4M684 946h4M684 952h4M684 958h4" stroke="#888" stroke-width="1.2"/>
<rect x="0" y="0" width="1919" height="38" fill="#d8d8d8" />
<path d="M14 3h12v4h-3v15h4v6h-14v-6h4v-15h-3z" fill="#c98a3a"/>
<path d="M12 24h16v7h-16z" fill="#8a6a48"/>
<path d="M50 7h14l7 6v14h-21z" fill="#fafafa" stroke="#555" stroke-width="2.2"/>
<path d="M84.8 16.08h6.4l-3.2 4.16z" fill="#555"/>
<path d="M103 27v-18h8l3 4h10v5M103 27l6-10h20l-6 10z" fill="#f4f4f4" stroke="#555" stroke-width="2.2" stroke-linejoin="round"/>
<path d="M139 5h22v24h-22z" fill="#4a4a4a"/><path d="M144 5h12v9h-12z" fill="#e8e8e8"/><path d="M145 20h10v9h-10z" fill="#d0d0d0"/>
<path d="M177 17l9-8v5h10v9h-4v-4h-6v5z" fill="#e8e8e8" stroke="#666" stroke-width="1.8" stroke-linejoin="round"/>
<path d="M210.4 16.44h5.2l-2.6 3.3800000000000003z" fill="#777"/>
<path d="M252 17l-9-8v5h-10v9h4v-4h6v5z" fill="#dedede" stroke="#bdbdbd" stroke-width="1.8" stroke-linejoin="round"/>
<path d="M264.4 16.44h5.2l-2.6 3.3800000000000003z" fill="#b5b5b5"/>
<line x1="283" y1="5" x2="283" y2="30" stroke="#c4c4c4" stroke-width="1.5" />
<path d="M293 18l12-11l12 11M297 16v12h6v-7h4v7h6v-12" fill="#f4f4f4" stroke="#4a4a4a" stroke-width="2.4" stroke-linejoin="round"/>
<path d="M335 8l6 5l-6 5M335 13h-3v12h14v-6" fill="none" stroke="#b0b0b0" stroke-width="2.2"/><path d="M343 18h11v10h-11z" fill="#e6e6e6" stroke="#b8b8b8" stroke-width="1.6"/>
<path d="M367.4 16.44h5.2l-2.6 3.3800000000000003z" fill="#777"/>
<path d="M384 7h22v22h-22z" fill="#4f9d5d"/><path d="M384 7h22v6h-22z" fill="#3d7f4a"/><path d="M392 15h6v5h-6zM400 21h5v5h-5z" fill="#bfe3c5"/>
<path d="M417.4 16.44h5.2l-2.6 3.3800000000000003z" fill="#777"/>
<path d="M440 6h10v14h-10z" fill="#e4e4e4" stroke="#b0b0b0" stroke-width="1.6"/><path d="M447 18h9v10h-9z" fill="#ececec" stroke="#b8b8b8" stroke-width="1.6"/>
<circle cx="484" cy="17" r="11" fill="#e9e9e9" stroke="#3f3f3f" stroke-width="3.2"/><path d="M476.500 9.500l15 15M491.500 9.500l-15 15" stroke="#3f3f3f" stroke-width="4"/>
<rect x="502" y="3" width="150" height="30" fill="#dcdcdc" />
<text x="513" y="23" font-size="17" fill="#555" textLength="77" lengthAdjust="spacingAndGlyphs">Generisch</text>
<path d="M639.4 15.84h7.2l-3.6 4.680000000000001z" fill="#444"/>
<circle cx="668" cy="17" r="12" fill="#d9a13c"/><path d="M668 17L668 5A12 12 0 0 1 680 17z" fill="#d94c4c"/><path d="M668 17L680 17A12 12 0 0 1 668 29z" fill="#4d84d8"/><path d="M668 17L668 29A12 12 0 0 1 656 17z" fill="#5cb85c"/><circle cx="668" cy="17" r="4" fill="#e9d9f0"/>
<rect x="690" y="3" width="148" height="30" fill="#dedede" />
<path d="M694 6h18v20h-18z" fill="#cfd6de" stroke="#8a8f98" stroke-width="1.5"/><path d="M694 18l6-6l5 5l3-2l4 4v7h-18z" fill="#7b8794"/>
<text x="718" y="23" font-size="17" fill="#555" textLength="67" lengthAdjust="spacingAndGlyphs">Vorgabe</text>
<path d="M824.4 15.84h7.2l-3.6 4.680000000000001z" fill="#444"/>
<circle cx="853" cy="15" r="10" fill="#e0a040"/><path d="M853 15V5A10 10 0 0 1 863 15z" fill="#d95050"/><path d="M853 15h10A10 10 0 0 1 853 25z" fill="#4f86d8"/><path d="M853 15v10A10 10 0 0 1 843 15z" fill="#5cb85c"/>
<circle cx="890" cy="15" r="10" fill="#e0a040"/><path d="M890 15V5A10 10 0 0 1 900 15z" fill="#d95050"/><path d="M890 15h10A10 10 0 0 1 890 25z" fill="#4f86d8"/><path d="M890 15v10A10 10 0 0 1 880 15z" fill="#5cb85c"/>
<circle cx="861" cy="23" r="6" fill="#5a8fd0" stroke="#35588a" stroke-width="1.2"/>
<path d="M893 18l8 8" stroke="#c04040" stroke-width="4"/>
<text x="919" y="25" font-size="24" fill="#555" textLength="22" lengthAdjust="spacingAndGlyphs" font-style="italic" font-family="Liberation Serif, serif">fx</text>
<path d="M955 17H971M963 9V25" stroke="#b0b0b0" stroke-width="3.4" fill="none"/>
<line x1="983" y1="11" x2="1003" y2="11" stroke="#666" stroke-width="2" />
<path d="M989.4 16.84h7.2l-3.6 4.680000000000001z" fill="#555"/>
<text x="1033" y="23" font-size="17" fill="#5a5a5a" textLength="110" lengthAdjust="spacingAndGlyphs">Basisplatte.ipt</text>
<path d="M1175.6 13v8l5.6 -4z" fill="#555"/>
<rect x="1190" y="2" width="272" height="31" fill="#fbfbfb" />
<text x="1197" y="22" font-size="17" fill="#4a4a4a" textLength="257" lengthAdjust="spacingAndGlyphs">Hilfe und Befehle durchsuchen..</text>
<circle cx="1478" cy="11" r="6.5" fill="#5b7fc0" stroke="#2c4f92" stroke-width="1.6"/><path d="M1466 29c0-9 5-12 12-12s12 3 12 12z" fill="#5b7fc0" stroke="#2c4f92" stroke-width="1.6"/>
<text x="1497" y="23" font-size="17" fill="#666" textLength="110" lengthAdjust="spacingAndGlyphs">thomasXJGXP</text>
<path d="M1625.2 16.32h5.6l-2.8 3.6399999999999997z" fill="#666"/>
<path d="M1644 7h5l4 13h13l3-9h-18" fill="none" stroke="#4a4a4a" stroke-width="2.2"/><circle cx="1655" cy="26" r="2.6" fill="#4a4a4a"/><circle cx="1665" cy="26" r="2.6" fill="#4a4a4a"/>
<path d="M1683 13l4 4l-4 4M1690 13l4 4l-4 4" fill="none" stroke="#444" stroke-width="2"/>
<line x1="1819" y1="25" x2="1833" y2="25" stroke="#333" stroke-width="2.6" />
<path d="M1855 14h12v11h-12zM1859 14v-4h12v11h-4" fill="none" stroke="#333" stroke-width="2.2"/>
<path d="M1892 9L1908 25M1908 9L1892 25" stroke="#222" stroke-width="3" fill="none"/>
<rect x="0" y="38" width="1919" height="31" fill="#dadada" />
<rect x="3" y="39" width="62" height="30" fill="#f0a43a" />
<text x="10" y="60" font-size="17" fill="#fff3dc" textLength="42" lengthAdjust="spacingAndGlyphs">Datei</text>
<rect x="492" y="40" width="80" height="30" fill="#f1f1f1" />
<text x="84" y="60" font-size="17" fill="#6e6e6e" textLength="83" lengthAdjust="spacingAndGlyphs">3D-Modell</text>
<text x="198" y="60" font-size="17" fill="#6e6e6e" textLength="47" lengthAdjust="spacingAndGlyphs">Skizze</text>
<text x="274" y="60" font-size="17" fill="#6e6e6e" textLength="202" lengthAdjust="spacingAndGlyphs">Mit Anmerkung versehen</text>
<text x="505" y="60" font-size="17" fill="#333" textLength="53" lengthAdjust="spacingAndGlyphs">Prüfen</text>
<text x="587" y="60" font-size="17" fill="#6e6e6e" textLength="46" lengthAdjust="spacingAndGlyphs">Extras</text>
<text x="662" y="60" font-size="17" fill="#6e6e6e" textLength="78" lengthAdjust="spacingAndGlyphs">Verwalten</text>
<text x="769" y="60" font-size="17" fill="#6e6e6e" textLength="60" lengthAdjust="spacingAndGlyphs">Ansicht</text>
<text x="859" y="60" font-size="17" fill="#6e6e6e" textLength="110" lengthAdjust="spacingAndGlyphs">Umgebungen</text>
<text x="998" y="60" font-size="17" fill="#6e6e6e" textLength="103" lengthAdjust="spacingAndGlyphs">Erste Schritte</text>
<text x="1130" y="60" font-size="17" fill="#6e6e6e" textLength="156" lengthAdjust="spacingAndGlyphs">Zusammenarbeiten</text>
<rect x="1331" y="47" width="20" height="14" rx="4" fill="none" stroke="#555" stroke-width="1.8"/><path d="M1338 51v6l5-3z" fill="#555"/>
<path d="M1361 54.2h6l-3 3.9000000000000004z" fill="#444"/>
<rect x="0" y="69" width="1919" height="141" fill="#f1f1f1" />
<rect x="15" y="95.5" width="45" height="8" fill="#f9e9b4" />
<rect x="15" y="103" width="45" height="6.5" fill="#f3c440" />
<rect x="15" y="109.5" width="45" height="1.5" fill="#fdf2d0" />
<rect x="15" y="111" width="45" height="7" fill="#e1a11f" />
<path d="M16 95v9M59 95v9M18 99.500h39" stroke="#4a4a4a" stroke-width="1.8" fill="none"/><path d="M17 99.500l6-3.200v6.400zM58 99.500l-6-3.200v6.400z" fill="#4a4a4a"/>
<text x="8" y="148" font-size="17" fill="#444" textLength="59" lengthAdjust="spacingAndGlyphs">Messen</text>
<path d="M108 78h38v40h-38z" fill="#f6f6f6" stroke="#dcdcdc" stroke-width="2"/><path d="M136 100h20v30h-20z" fill="#ededed" stroke="#d8d8d8" stroke-width="2"/><path d="M141 108h10M141 116h10" stroke="#cfcfcf" stroke-width="2"/>
<text x="97" y="148" font-size="17" fill="#c2c2c2" textLength="68" lengthAdjust="spacingAndGlyphs">Bereichs-</text>
<text x="77" y="170" font-size="17" fill="#c2c2c2" textLength="111" lengthAdjust="spacingAndGlyphs">eigenschaften</text>
<text x="68" y="202" font-size="17" fill="#555" textLength="59" lengthAdjust="spacingAndGlyphs">Messen</text>
<line x1="196" y1="72" x2="196" y2="206" stroke="#dedede" stroke-width="2" />
<clipPath id="zb5"><rect x="230" y="78" width="50" height="50"/></clipPath>
<rect x="230" y="78" width="50" height="50" fill="#fdfdfd" stroke="#bbb" stroke-width="1"/>
<g clip-path="url(#zb5)" fill="none" stroke="#3a3a3a" stroke-width="7.500"><path d="M228 84l26 19l-26 19"/><path d="M244 74c24 12 24 46 0 58"/><path d="M262 72c22 12 22 50 0 62"/><path d="M279 70c12 14 12 52 0 66"/></g>
<text x="204" y="148" font-size="17" fill="#444" textLength="103" lengthAdjust="spacingAndGlyphs">Zebrastreifen</text>
<clipPath id="brl5"><path d="M375 78h36c10 13 10 37 0 50h-36c-10-13-10-37 0-50z"/></clipPath>
<g clip-path="url(#brl5)"><rect x="360" y="78" width="66" height="17" fill="#e5534b"/><rect x="360" y="94" width="66" height="7" fill="#f0a030"/><rect x="360" y="100" width="66" height="5" fill="#e8d83a"/><rect x="360" y="104" width="66" height="7" fill="#4bb86a"/><rect x="360" y="110" width="66" height="19" fill="#2e9be6"/></g>
<text x="316" y="148" font-size="17" fill="#444" textLength="153" lengthAdjust="spacingAndGlyphs">Flächenverjüngung</text>
<radialGradient id="fl5" gradientUnits="userSpaceOnUse" cx="540" cy="70" r="78"><stop offset="0" stop-color="#e8503e"/><stop offset=".3" stop-color="#ea5a3c"/><stop offset=".42" stop-color="#f0a030"/><stop offset=".52" stop-color="#dfe040"/><stop offset=".66" stop-color="#4cc470"/><stop offset=".82" stop-color="#30b0d8"/><stop offset="1" stop-color="#2e86e4"/></radialGradient>
<rect x="478" y="78" width="50" height="50" fill="url(#fl5)" />
<text x="478" y="148" font-size="17" fill="#444" textLength="51" lengthAdjust="spacingAndGlyphs">Fläche</text>
<path d="M542 80h48v48h-16v-34h-16v34h-16z" fill="#f4ecc8" stroke="#86bdb0" stroke-width="2.6"/><path d="M574 80h16v48h-16z" fill="#cfe8e2" opacity=".8"/><path d="M542 80h16v14h-16z" fill="#f4d0c0" opacity=".8"/>
<text x="538" y="148" font-size="17" fill="#444" textLength="56" lengthAdjust="spacingAndGlyphs">Schnitt</text>
<path d="M624 122c2-22 10-38 22-38s20 16 22 38l-8-3c-3-9-8-14-14-14s-11 5-14 14z" fill="#eef4fb" stroke="#5a80b0" stroke-width="2.4" stroke-linejoin="round"/><path d="M634 100l-6-8M646 96v-12M658 100l6-8" stroke="#5a80b0" stroke-width="1.8"/>
<text x="603" y="148" font-size="17" fill="#444" textLength="91" lengthAdjust="spacingAndGlyphs">Krümmung</text>
<text x="418" y="202" font-size="17" fill="#555" textLength="62" lengthAdjust="spacingAndGlyphs">Analyse</text>
<line x1="700" y1="72" x2="700" y2="206" stroke="#dedede" stroke-width="2" />
<rect x="709" y="77" width="49" height="30" fill="#f7f7f7" stroke="#e2e2e2" stroke-width="1.5"/>
<circle cx="725" cy="91" r="9" fill="#fff" stroke="#555" stroke-width="2"/>
<path d="M721.4 89.84h7.2l-3.6 4.680000000000001z" fill="#444"/>
<path d="M745.4 90.44h5.2l-2.6 3.3800000000000003z" fill="#444"/>
<rect x="0" y="210" width="244" height="832" fill="#f2f2f2" />
<rect x="88" y="212" width="156" height="33" fill="#d5d5d5" />
<text x="5" y="233" font-size="15.5" fill="#444" textLength="45" lengthAdjust="spacingAndGlyphs">Modell</text>
<path d="M66.5 222.5L77.5 233.5M77.5 222.5L66.5 233.5" stroke="#333" stroke-width="2.4" fill="none"/>
<path d="M96.5 228H111.5M104 220.5V235.5" stroke="#333" stroke-width="3" fill="none"/>
<circle cx="189" cy="226" r="7.5" fill="none" stroke="#333" stroke-width="2.8"/><path d="M194 232l7 7" stroke="#333" stroke-width="3.2"/>
<path d="M215.5 221.5h19M215.5 228h19M215.5 234.5h19" stroke="#333" stroke-width="3" fill="none"/>
<line x1="244.5" y1="210" x2="244.5" y2="1042" stroke="#b4b4b4" stroke-width="1.5" />
<text x="32" y="270" font-size="15.5" fill="#2a2a2a" textLength="102" lengthAdjust="spacingAndGlyphs">Basisplatte.ipt</text>
<path d="M7 258l4-5h14v14l-4 5h-14z" fill="#3d8fd6"/><path d="M7 258h14v14h-14z" fill="#62aee8"/>
<text x="56" y="300" font-size="15.5" fill="#2a2a2a" textLength="128" lengthAdjust="spacingAndGlyphs">Volumenkörper(1)</text>
<path d="M7.5 292H18.5M13 286.5V297.5" stroke="#555" stroke-width="2" fill="none"/>
<path d="M28 284h9l3 3h11v15h-23z" fill="#d8c878"/><path d="M35 290h9v8h-9z" fill="#7f9a4a"/>
<text x="56" y="330" font-size="15.5" fill="#2a2a2a" textLength="158" lengthAdjust="spacingAndGlyphs">Ansicht: Hauptansicht</text>
<path d="M7.5 322H18.5M13 316.5V327.5" stroke="#555" stroke-width="2" fill="none"/>
<path d="M33 313v19h8M33 322h14" fill="none" stroke="#3a78b8" stroke-width="2.2"/><circle cx="33" cy="313" r="2.2" fill="#3a78b8"/><circle cx="42" cy="332" r="2.2" fill="#3a78b8"/>
<text x="56" y="360" font-size="15.5" fill="#2a2a2a" textLength="66" lengthAdjust="spacingAndGlyphs">Ursprung</text>
<path d="M7.5 352H18.5M13 346.5V357.5" stroke="#555" stroke-width="2" fill="none"/>
<path d="M28 343h9l3 3h11v16h-23z" fill="#f0c850"/><path d="M28 349h23v13h-23z" fill="#f7d870"/>
<text x="56" y="390" font-size="15.5" fill="#2a2a2a" textLength="77" lengthAdjust="spacingAndGlyphs">Extrusion1</text>
<path d="M7.5 382H18.5M13 376.5V387.5" stroke="#555" stroke-width="2" fill="none"/>
<path d="M28 377l4-5h13v15l-4 5h-13z" fill="#2f78c4"/><path d="M28 377h13v15h-13z" fill="#5aa4e4"/><path d="M49 391v-20" stroke="#444" stroke-width="1.8"/>
<text x="56" y="420" font-size="15.5" fill="#2a2a2a" textLength="77" lengthAdjust="spacingAndGlyphs">Extrusion2</text>
<path d="M7.5 412H18.5M13 406.5V417.5" stroke="#555" stroke-width="2" fill="none"/>
<path d="M28 407l4-5h13v15l-4 5h-13z" fill="#2f78c4"/><path d="M28 407h13v15h-13z" fill="#5aa4e4"/><path d="M49 421v-20" stroke="#444" stroke-width="1.8"/>
<text x="56" y="450" font-size="15.5" fill="#2a2a2a" textLength="69" lengthAdjust="spacingAndGlyphs">Spiegeln1</text>
<path d="M7.5 442H18.5M13 436.5V447.5" stroke="#555" stroke-width="2" fill="none"/>
<path d="M30 452l9-19l9 19z" fill="#dfe8f4" stroke="#44648c" stroke-width="2"/><path d="M39 433v19" stroke="#44648c" stroke-width="1.6"/>
<text x="56" y="480" font-size="15.5" fill="#2a2a2a" textLength="69" lengthAdjust="spacingAndGlyphs">Bohrung1</text>
<path d="M7.5 472H18.5M13 466.5V477.5" stroke="#555" stroke-width="2" fill="none"/>
<rect x="29" y="463" width="21" height="19" fill="#dce6ee" stroke="#4a5a6a" stroke-width="2"/><circle cx="39" cy="473" r="5.5" fill="#8aa0b4" stroke="#4a5a6a" stroke-width="1.4"/>
<text x="56" y="510" font-size="15.5" fill="#2a2a2a" textLength="83" lengthAdjust="spacingAndGlyphs">Bauteilende</text>
<circle cx="40" cy="503" r="9.5" fill="#d83030"/><path d="M35.500 498.5l9 9M44.500 498.5l-9 9" stroke="#fff" stroke-width="2.6"/>
<linearGradient id="dtb5" x1="0" y1="0" x2="0" y2="1"><stop offset="0" stop-color="#d2d2d2"/><stop offset="1" stop-color="#dedede"/></linearGradient>
<rect x="244" y="1005" width="1675" height="38" fill="url(#dtb5)" />
<path d="M256 1023l10-9l10 9M259 1021v11h5v-6h4v6h5v-11" fill="#f4f4f4" stroke="#555" stroke-width="2" stroke-linejoin="round"/>
<rect x="290" y="1007" width="165" height="33" fill="#ececec" />
<rect x="290" y="1039" width="165" height="3.5" fill="#4fa6de" />
<text x="302" y="1028" font-size="17" fill="#4a8fc0" textLength="110" lengthAdjust="spacingAndGlyphs">Basisplatte.ipt</text>
<path d="M424.5 1015.5L435.5 1026.5M435.5 1015.5L424.5 1026.5" stroke="#333" stroke-width="2" fill="none"/>
<path d="M1892.5 1016.5h19M1892.5 1023h19M1892.5 1029.5h19" stroke="#555" stroke-width="2.4" fill="none"/>
<rect x="0" y="1043" width="1919" height="37" fill="#f0f0f0" />
<text x="3" y="1070" font-size="15.5" fill="#333" textLength="1140" lengthAdjust="spacingAndGlyphs">Nächsten Punkt/nächste Linie/Kante/Achse, Ebene oder Fläche auswählen (oder einen leeren Bereich zum erneuten Starten des Messens wählen)</text>
<text x="1816" y="1070" font-size="15.5" fill="#444">1</text>
<text x="1873" y="1070" font-size="15.5" fill="#444">1</text>
<text x="1661" y="1047" font-size="32" fill="#ececec" textLength="87" lengthAdjust="spacingAndGlyphs" font-weight="bold" stroke="#8e8e8e" stroke-width="1.3" paint-order="stroke" fill-opacity=".92">Linked</text>
<rect x="1751" y="1020" width="29" height="29" fill="#f4f4f4" rx="3" stroke="#a0a0a0" stroke-width="1" fill-opacity=".9"/>
<text x="1754" y="1046" font-size="27" fill="#bdbdbd" textLength="23" lengthAdjust="spacingAndGlyphs" font-weight="bold" stroke="#b0b0b0" stroke-width=".4">in</text>
<text x="1786" y="1047" font-size="32" fill="#ececec" textLength="100" lengthAdjust="spacingAndGlyphs" font-weight="bold" stroke="#8e8e8e" stroke-width="1.3" paint-order="stroke" fill-opacity=".92">Learning</text>
<rect x="1.5" y="1.5" width="1916" height="1076.25" fill="none" stroke="#fdfdfd" stroke-width="3"/>
</svg>
<svg class="p" style="left:5px;top:782px" width="633" height="356" viewBox="0 0 1919 1079.25" font-family='"Liberation Sans", sans-serif'>
<linearGradient id="vbg6" x1="0" y1="1" x2="1" y2="0"><stop offset="0" stop-color="#bfbfbf"/><stop offset=".55" stop-color="#c5c5c5"/><stop offset="1" stop-color="#cecece"/></linearGradient><rect x="244" y="210" width="1675" height="796" fill="url(#vbg6)" />
<clipPath id="vc6"><rect x="244" y="210" width="1675" height="796"/></clipPath>
<g clip-path="url(#vc6)"><polygon points="1447.5,479 1491.5,637 1217,1006 1056,1006" fill="#d2d2d2" stroke="#4c4c4c" stroke-width="1.3" stroke-linejoin="round" />
<polygon points="240,251 1447.5,479 1056,1006 240,1010" fill="#a8a8a8" stroke="#4c4c4c" stroke-width="1.3" stroke-linejoin="round" />
<path d="M389 1008Q420 968 499 968Q575 968 599 1008z" fill="#d4d4d4" stroke="#4c4c4c" stroke-width="1.3"/>
<linearGradient id="ycy6" x1="0" y1="0" x2="0" y2="1"><stop offset="0" stop-color="#c8d050" stop-opacity=".32"/><stop offset="1" stop-color="#c8d050" stop-opacity="0"/></linearGradient>
<path d="M856 620L862 730Q940 770 1030 720L1022 590z" fill="url(#ycy6)"/>
<g transform="translate(937,606) rotate(-13)"><path d="M-84 0A84 50 0 0 1 84 0Q76 26 22 43L10 50A84 50 0 0 1 -84 0z" fill="#cfc22e" stroke="#8ede5a" stroke-width="5.500" stroke-linejoin="round"/></g>
<line x1="936" y1="652" x2="671" y2="1006" stroke="#2c3048" stroke-width="2" />
<circle cx="937" cy="651" r="5.5" fill="#10183c"/></g>
<path d="M318 896l-4 30l-6 30" stroke="#888" stroke-width="1.2" fill="none"/><path d="M314 926l-22-4" stroke="#d04040" stroke-width="1.4"/>
<path d="M311 908l8-16l9 18z" fill="#301880"/>
<path d="M290 922l14-8v16z" fill="#d02020"/>
<circle cx="312" cy="947" r="7" fill="#30a030"/>
<text x="311" y="890" font-size="14" fill="#2020c0">Z</text>
<text x="276" y="926" font-size="13" fill="#e03030">X</text>
<text x="296" y="968" font-size="12" fill="#30c030">Y</text>
<path d="M1868 220h16v14h-16zM1876 220v14" fill="none" stroke="#444" stroke-width="2"/>
<path d="M1901 221L1913 233M1913 221L1901 233" stroke="#444" stroke-width="2" fill="none"/>
<rect x="1866" y="383" width="60" height="342" rx="8" fill="#d8d8d8" fill-opacity=".35" stroke="#8c8c8c" stroke-width="2.4"/>
<circle cx="1891" cy="432" r="15" fill="#eaeaea" fill-opacity=".5" stroke="#7c7c7c" stroke-width="2.2"/><circle cx="1891" cy="432" r="8.5" fill="none" stroke="#888888" stroke-width="2"/>
<path d="M1880 516v-14l4-2v-10h4v9h2v-11h4v11h2v-9h4v12l2-4h4l-5 14v4z" fill="#ececec" fill-opacity=".5" stroke="#787878" stroke-width="1.8"/>
<path d="M1876 534h14l6 6v18h-20z" fill="#eaeaea" fill-opacity=".5" stroke="#7c7c7c" stroke-width="1.8"/><circle cx="1894" cy="553" r="6" fill="#e8e8e8" fill-opacity=".5" stroke="#707070" stroke-width="2"/><path d="M1899 558l7 7" stroke="#707070" stroke-width="2.6"/>
<path d="M1891 598l7 9h-4v4h9v-4l7 6l-7 6v-4h-9v4h4l-7 9l-7-9h4v-4h-9v4l-7-6l7-6v4h9v-4h-4z" fill="#e8e8e8" fill-opacity=".5" stroke="#7a7a7a" stroke-width="1.6" transform="translate(0,0) scale(1)"/>
<rect x="1877" y="668" width="30" height="22" rx="3" fill="#e8e8e8" fill-opacity=".5" stroke="#7a7a7a" stroke-width="2"/><rect x="1883" y="675" width="18" height="9" fill="none" stroke="#888888" stroke-width="1.6"/><path d="M1884 668v-6h5M1899 668v-6h-5" fill="none" stroke="#7a7a7a" stroke-width="1.8"/>
<circle cx="1891" cy="466" r="1.8" fill="#999"/>
<circle cx="1891" cy="582" r="1.8" fill="#999"/>
<circle cx="1891" cy="644" r="1.8" fill="#999"/>
<circle cx="1904" cy="393" r="3.4" fill="none" stroke="#aaa" stroke-width="1.4"/><circle cx="1904" cy="714" r="3.4" fill="none" stroke="#aaa" stroke-width="1.4"/>
<g opacity="1"><path d="M1834 268l52 4l8 48l-14 26z" fill="#9c9c9c" opacity=".5"/><path d="M1805.300 306.900L1830.800 275L1883.900 279.300L1864.800 304.700z" fill="#d8d8d8" stroke="#b2b2b2" stroke-width="1.4" stroke-linejoin="round"/><path d="M1805.300 306.900L1864.800 304.700L1866.900 357.800L1818.100 345.100z" fill="#dadada" stroke="#b2b2b2" stroke-width="1.4" stroke-linejoin="round"/><path d="M1883.900 279.300L1888.100 321.700L1866.900 357.800L1864.800 304.700z" fill="#c6c6c6" stroke="#b2b2b2" stroke-width="1.4" stroke-linejoin="round"/><path d="M1828 288l34-1M1824 322l30 8" stroke="#9a9a9a" stroke-width="2.6" stroke-dasharray="5 2"/><path d="M1820 308l36 2M1826 336l34 10" stroke="#bababa" stroke-width="1.8"/></g>
<rect x="248" y="210" width="401" height="610" fill="#f4f4f4" />
<rect x="345" y="212" width="304" height="33" fill="#d5d5d5" />
<text x="254" y="233" font-size="15.5" fill="#444" textLength="54" lengthAdjust="spacingAndGlyphs">Messen</text>
<path d="M322.5 222.5L333.5 233.5M333.5 222.5L322.5 233.5" stroke="#333" stroke-width="2.4" fill="none"/>
<path d="M354.5 228H369.5M362 220.5V235.5" stroke="#333" stroke-width="3" fill="none"/>
<path d="M619.5 221.5h19M619.5 228h19M619.5 234.5h19" stroke="#333" stroke-width="3" fill="none"/>
<rect x="250" y="251" width="397" height="36" fill="#e9e9e9" />
<path d="M266 266.0h10l-5 6.5z" fill="#333"/>
<text x="288" y="275" font-size="17" fill="#555" textLength="125" lengthAdjust="spacingAndGlyphs">Messergebnisse</text>
<rect x="265" y="288" width="364" height="31" fill="#efc060" />
<text x="277" y="308.5" font-size="15.5" fill="#1e1e1e" textLength="92" lengthAdjust="spacingAndGlyphs">Achsabstand</text>
<text x="430" y="308.5" font-size="15.5" fill="#1c1c1c" textLength="105" lengthAdjust="spacingAndGlyphs" font-weight="bold">325,000 mm</text>
<path d="M287 327l5 6l-5 6" fill="none" stroke="#aaa" stroke-width="1.6"/>
<text x="304" y="338.5" font-size="15.5" fill="#1e1e1e" textLength="38" lengthAdjust="spacingAndGlyphs">Delta</text>
<text x="277" y="363.5" font-size="15.5" fill="#1e1e1e" textLength="114" lengthAdjust="spacingAndGlyphs">Mindestabstand</text>
<text x="430" y="363.5" font-size="15.5" fill="#1c1c1c" textLength="105" lengthAdjust="spacingAndGlyphs" font-weight="bold">305,000 mm</text>
<path d="M287 382l5 6l-5 6" fill="none" stroke="#aaa" stroke-width="1.6"/>
<text x="304" y="393.5" font-size="15.5" fill="#1e1e1e" textLength="38" lengthAdjust="spacingAndGlyphs">Delta</text>
<rect x="250" y="404" width="397" height="36" fill="#e9e9e9" />
<path d="M266 419.0h10l-5 6.5z" fill="#333"/>
<text x="288" y="428" font-size="17" fill="#555" textLength="152" lengthAdjust="spacingAndGlyphs">Auswahl 1 (Fläche)</text>
<text x="277" y="461.5" font-size="15.5" fill="#1e1e1e" textLength="48" lengthAdjust="spacingAndGlyphs">Radius</text>
<text x="430" y="461.5" font-size="15.5" fill="#1c1c1c" textLength="95" lengthAdjust="spacingAndGlyphs" font-weight="bold">10,000 mm</text>
<text x="277" y="491.5" font-size="15.5" fill="#1e1e1e" textLength="95" lengthAdjust="spacingAndGlyphs">Durchmesser</text>
<text x="430" y="491.5" font-size="15.5" fill="#1c1c1c" textLength="95" lengthAdjust="spacingAndGlyphs" font-weight="bold">20,000 mm</text>
<text x="277" y="521.5" font-size="15.5" fill="#1e1e1e" textLength="128" lengthAdjust="spacingAndGlyphs">Gesamtkonturlä..</text>
<text x="430" y="521.5" font-size="15.5" fill="#1c1c1c" textLength="105" lengthAdjust="spacingAndGlyphs" font-weight="bold">125,664 mm</text>
<text x="277" y="551.5" font-size="15.5" fill="#1e1e1e" textLength="46" lengthAdjust="spacingAndGlyphs">Fläche</text>
<text x="430" y="551.5" font-size="15.5" fill="#1c1c1c" textLength="113" lengthAdjust="spacingAndGlyphs" font-weight="bold">848,230 mm²</text>
<path d="M287 570l5 6l-5 6" fill="none" stroke="#aaa" stroke-width="1.6"/>
<text x="304" y="581.5" font-size="15.5" fill="#1e1e1e" textLength="101" lengthAdjust="spacingAndGlyphs">Punkt messen</text>
<rect x="250" y="591" width="397" height="36" fill="#e9e9e9" />
<path d="M266 606.0h10l-5 6.5z" fill="#333"/>
<text x="288" y="615" font-size="17" fill="#555" textLength="152" lengthAdjust="spacingAndGlyphs">Auswahl 2 (Fläche)</text>
<text x="277" y="648.5" font-size="15.5" fill="#1e1e1e" textLength="48" lengthAdjust="spacingAndGlyphs">Radius</text>
<text x="430" y="648.5" font-size="15.5" fill="#1c1c1c" textLength="95" lengthAdjust="spacingAndGlyphs" font-weight="bold">10,000 mm</text>
<text x="277" y="678.5" font-size="15.5" fill="#1e1e1e" textLength="95" lengthAdjust="spacingAndGlyphs">Durchmesser</text>
<text x="430" y="678.5" font-size="15.5" fill="#1c1c1c" textLength="95" lengthAdjust="spacingAndGlyphs" font-weight="bold">20,000 mm</text>
<text x="277" y="708.5" font-size="15.5" fill="#1e1e1e" textLength="128" lengthAdjust="spacingAndGlyphs">Gesamtkonturlä..</text>
<text x="430" y="708.5" font-size="15.5" fill="#1c1c1c" textLength="105" lengthAdjust="spacingAndGlyphs" font-weight="bold">125,664 mm</text>
<text x="277" y="738.5" font-size="15.5" fill="#1e1e1e" textLength="46" lengthAdjust="spacingAndGlyphs">Fläche</text>
<text x="430" y="738.5" font-size="15.5" fill="#1c1c1c" textLength="113" lengthAdjust="spacingAndGlyphs" font-weight="bold">848,230 mm²</text>
<path d="M287 757l5 6l-5 6" fill="none" stroke="#aaa" stroke-width="1.6"/>
<text x="304" y="768.5" font-size="15.5" fill="#1e1e1e" textLength="101" lengthAdjust="spacingAndGlyphs">Punkt messen</text>
<rect x="250" y="779" width="397" height="36" fill="#e9e9e9" />
<path d="M268.0 792v10l7.0 -5z" fill="#333"/>
<text x="288" y="803" font-size="17" fill="#555" textLength="192" lengthAdjust="spacingAndGlyphs">Erweiterte Einstellungen</text>

<path d="M1162 292v24l6-5l5 10l4-2l-5-10h8z" fill="#fff" stroke="#2c2c2c" stroke-width="2.4" stroke-linejoin="round"/><rect x="1183" y="304" width="10" height="30" fill="#ececec" stroke="#2c2c2c" stroke-width="2.6"/><path d="M1185 311h4M1185 317h4M1185 323h4M1185 329h4" stroke="#888" stroke-width="1.2"/>
<rect x="0" y="0" width="1919" height="38" fill="#d8d8d8" />
<path d="M14 3h12v4h-3v15h4v6h-14v-6h4v-15h-3z" fill="#c98a3a"/>
<path d="M12 24h16v7h-16z" fill="#8a6a48"/>
<path d="M50 7h14l7 6v14h-21z" fill="#fafafa" stroke="#555" stroke-width="2.2"/>
<path d="M84.8 16.08h6.4l-3.2 4.16z" fill="#555"/>
<path d="M103 27v-18h8l3 4h10v5M103 27l6-10h20l-6 10z" fill="#f4f4f4" stroke="#555" stroke-width="2.2" stroke-linejoin="round"/>
<path d="M139 5h22v24h-22z" fill="#4a4a4a"/><path d="M144 5h12v9h-12z" fill="#e8e8e8"/><path d="M145 20h10v9h-10z" fill="#d0d0d0"/>
<path d="M177 17l9-8v5h10v9h-4v-4h-6v5z" fill="#e8e8e8" stroke="#666" stroke-width="1.8" stroke-linejoin="round"/>
<path d="M210.4 16.44h5.2l-2.6 3.3800000000000003z" fill="#777"/>
<path d="M252 17l-9-8v5h-10v9h4v-4h6v5z" fill="#dedede" stroke="#bdbdbd" stroke-width="1.8" stroke-linejoin="round"/>
<path d="M264.4 16.44h5.2l-2.6 3.3800000000000003z" fill="#b5b5b5"/>
<line x1="283" y1="5" x2="283" y2="30" stroke="#c4c4c4" stroke-width="1.5" />
<path d="M293 18l12-11l12 11M297 16v12h6v-7h4v7h6v-12" fill="#f4f4f4" stroke="#4a4a4a" stroke-width="2.4" stroke-linejoin="round"/>
<path d="M335 8l6 5l-6 5M335 13h-3v12h14v-6" fill="none" stroke="#b0b0b0" stroke-width="2.2"/><path d="M343 18h11v10h-11z" fill="#e6e6e6" stroke="#b8b8b8" stroke-width="1.6"/>
<path d="M367.4 16.44h5.2l-2.6 3.3800000000000003z" fill="#777"/>
<path d="M384 7h22v22h-22z" fill="#4f9d5d"/><path d="M384 7h22v6h-22z" fill="#3d7f4a"/><path d="M392 15h6v5h-6zM400 21h5v5h-5z" fill="#bfe3c5"/>
<path d="M417.4 16.44h5.2l-2.6 3.3800000000000003z" fill="#777"/>
<path d="M440 6h10v14h-10z" fill="#e4e4e4" stroke="#b0b0b0" stroke-width="1.6"/><path d="M447 18h9v10h-9z" fill="#ececec" stroke="#b8b8b8" stroke-width="1.6"/>
<circle cx="484" cy="17" r="11" fill="#e9e9e9" stroke="#3f3f3f" stroke-width="3.2"/><path d="M476.500 9.500l15 15M491.500 9.500l-15 15" stroke="#3f3f3f" stroke-width="4"/>
<rect x="502" y="3" width="150" height="30" fill="#dcdcdc" />
<text x="513" y="23" font-size="17" fill="#555" textLength="77" lengthAdjust="spacingAndGlyphs">Generisch</text>
<path d="M639.4 15.84h7.2l-3.6 4.680000000000001z" fill="#444"/>
<circle cx="668" cy="17" r="12" fill="#d9a13c"/><path d="M668 17L668 5A12 12 0 0 1 680 17z" fill="#d94c4c"/><path d="M668 17L680 17A12 12 0 0 1 668 29z" fill="#4d84d8"/><path d="M668 17L668 29A12 12 0 0 1 656 17z" fill="#5cb85c"/><circle cx="668" cy="17" r="4" fill="#e9d9f0"/>
<rect x="690" y="3" width="148" height="30" fill="#dedede" />
<path d="M694 6h18v20h-18z" fill="#cfd6de" stroke="#8a8f98" stroke-width="1.5"/><path d="M694 18l6-6l5 5l3-2l4 4v7h-18z" fill="#7b8794"/>
<text x="718" y="23" font-size="17" fill="#555" textLength="67" lengthAdjust="spacingAndGlyphs">Vorgabe</text>
<path d="M824.4 15.84h7.2l-3.6 4.680000000000001z" fill="#444"/>
<circle cx="853" cy="15" r="10" fill="#e0a040"/><path d="M853 15V5A10 10 0 0 1 863 15z" fill="#d95050"/><path d="M853 15h10A10 10 0 0 1 853 25z" fill="#4f86d8"/><path d="M853 15v10A10 10 0 0 1 843 15z" fill="#5cb85c"/>
<circle cx="890" cy="15" r="10" fill="#e0a040"/><path d="M890 15V5A10 10 0 0 1 900 15z" fill="#d95050"/><path d="M890 15h10A10 10 0 0 1 890 25z" fill="#4f86d8"/><path d="M890 15v10A10 10 0 0 1 880 15z" fill="#5cb85c"/>
<circle cx="861" cy="23" r="6" fill="#5a8fd0" stroke="#35588a" stroke-width="1.2"/>
<path d="M893 18l8 8" stroke="#c04040" stroke-width="4"/>
<text x="919" y="25" font-size="24" fill="#555" textLength="22" lengthAdjust="spacingAndGlyphs" font-style="italic" font-family="Liberation Serif, serif">fx</text>
<path d="M955 17H971M963 9V25" stroke="#b0b0b0" stroke-width="3.4" fill="none"/>
<line x1="983" y1="11" x2="1003" y2="11" stroke="#666" stroke-width="2" />
<path d="M989.4 16.84h7.2l-3.6 4.680000000000001z" fill="#555"/>
<text x="1033" y="23" font-size="17" fill="#5a5a5a" textLength="110" lengthAdjust="spacingAndGlyphs">Basisplatte.ipt</text>
<path d="M1175.6 13v8l5.6 -4z" fill="#555"/>
<rect x="1190" y="2" width="272" height="31" fill="#fbfbfb" />
<text x="1197" y="22" font-size="17" fill="#4a4a4a" textLength="257" lengthAdjust="spacingAndGlyphs">Hilfe und Befehle durchsuchen..</text>
<circle cx="1478" cy="11" r="6.5" fill="#5b7fc0" stroke="#2c4f92" stroke-width="1.6"/><path d="M1466 29c0-9 5-12 12-12s12 3 12 12z" fill="#5b7fc0" stroke="#2c4f92" stroke-width="1.6"/>
<text x="1497" y="23" font-size="17" fill="#666" textLength="110" lengthAdjust="spacingAndGlyphs">thomasXJGXP</text>
<path d="M1625.2 16.32h5.6l-2.8 3.6399999999999997z" fill="#666"/>
<path d="M1644 7h5l4 13h13l3-9h-18" fill="none" stroke="#4a4a4a" stroke-width="2.2"/><circle cx="1655" cy="26" r="2.6" fill="#4a4a4a"/><circle cx="1665" cy="26" r="2.6" fill="#4a4a4a"/>
<path d="M1683 13l4 4l-4 4M1690 13l4 4l-4 4" fill="none" stroke="#444" stroke-width="2"/>
<line x1="1819" y1="25" x2="1833" y2="25" stroke="#333" stroke-width="2.6" />
<path d="M1855 14h12v11h-12zM1859 14v-4h12v11h-4" fill="none" stroke="#333" stroke-width="2.2"/>
<path d="M1892 9L1908 25M1908 9L1892 25" stroke="#222" stroke-width="3" fill="none"/>
<rect x="0" y="38" width="1919" height="31" fill="#dadada" />
<rect x="3" y="39" width="62" height="30" fill="#f0a43a" />
<text x="10" y="60" font-size="17" fill="#fff3dc" textLength="42" lengthAdjust="spacingAndGlyphs">Datei</text>
<rect x="492" y="40" width="80" height="30" fill="#f1f1f1" />
<text x="84" y="60" font-size="17" fill="#6e6e6e" textLength="83" lengthAdjust="spacingAndGlyphs">3D-Modell</text>
<text x="198" y="60" font-size="17" fill="#6e6e6e" textLength="47" lengthAdjust="spacingAndGlyphs">Skizze</text>
<text x="274" y="60" font-size="17" fill="#6e6e6e" textLength="202" lengthAdjust="spacingAndGlyphs">Mit Anmerkung versehen</text>
<text x="505" y="60" font-size="17" fill="#333" textLength="53" lengthAdjust="spacingAndGlyphs">Prüfen</text>
<text x="587" y="60" font-size="17" fill="#6e6e6e" textLength="46" lengthAdjust="spacingAndGlyphs">Extras</text>
<text x="662" y="60" font-size="17" fill="#6e6e6e" textLength="78" lengthAdjust="spacingAndGlyphs">Verwalten</text>
<text x="769" y="60" font-size="17" fill="#6e6e6e" textLength="60" lengthAdjust="spacingAndGlyphs">Ansicht</text>
<text x="859" y="60" font-size="17" fill="#6e6e6e" textLength="110" lengthAdjust="spacingAndGlyphs">Umgebungen</text>
<text x="998" y="60" font-size="17" fill="#6e6e6e" textLength="103" lengthAdjust="spacingAndGlyphs">Erste Schritte</text>
<text x="1130" y="60" font-size="17" fill="#6e6e6e" textLength="156" lengthAdjust="spacingAndGlyphs">Zusammenarbeiten</text>
<rect x="1331" y="47" width="20" height="14" rx="4" fill="none" stroke="#555" stroke-width="1.8"/><path d="M1338 51v6l5-3z" fill="#555"/>
<path d="M1361 54.2h6l-3 3.9000000000000004z" fill="#444"/>
<rect x="0" y="69" width="1919" height="141" fill="#f1f1f1" />
<rect x="15" y="95.5" width="45" height="8" fill="#f9e9b4" />
<rect x="15" y="103" width="45" height="6.5" fill="#f3c440" />
<rect x="15" y="109.5" width="45" height="1.5" fill="#fdf2d0" />
<rect x="15" y="111" width="45" height="7" fill="#e1a11f" />
<path d="M16 95v9M59 95v9M18 99.500h39" stroke="#4a4a4a" stroke-width="1.8" fill="none"/><path d="M17 99.500l6-3.200v6.400zM58 99.500l-6-3.200v6.400z" fill="#4a4a4a"/>
<text x="8" y="148" font-size="17" fill="#444" textLength="59" lengthAdjust="spacingAndGlyphs">Messen</text>
<path d="M108 78h38v40h-38z" fill="#f6f6f6" stroke="#dcdcdc" stroke-width="2"/><path d="M136 100h20v30h-20z" fill="#ededed" stroke="#d8d8d8" stroke-width="2"/><path d="M141 108h10M141 116h10" stroke="#cfcfcf" stroke-width="2"/>
<text x="97" y="148" font-size="17" fill="#c2c2c2" textLength="68" lengthAdjust="spacingAndGlyphs">Bereichs-</text>
<text x="77" y="170" font-size="17" fill="#c2c2c2" textLength="111" lengthAdjust="spacingAndGlyphs">eigenschaften</text>
<text x="68" y="202" font-size="17" fill="#555" textLength="59" lengthAdjust="spacingAndGlyphs">Messen</text>
<line x1="196" y1="72" x2="196" y2="206" stroke="#dedede" stroke-width="2" />
<clipPath id="zb6"><rect x="230" y="78" width="50" height="50"/></clipPath>
<rect x="230" y="78" width="50" height="50" fill="#fdfdfd" stroke="#bbb" stroke-width="1"/>
<g clip-path="url(#zb6)" fill="none" stroke="#3a3a3a" stroke-width="7.500"><path d="M228 84l26 19l-26 19"/><path d="M244 74c24 12 24 46 0 58"/><path d="M262 72c22 12 22 50 0 62"/><path d="M279 70c12 14 12 52 0 66"/></g>
<text x="204" y="148" font-size="17" fill="#444" textLength="103" lengthAdjust="spacingAndGlyphs">Zebrastreifen</text>
<clipPath id="brl6"><path d="M375 78h36c10 13 10 37 0 50h-36c-10-13-10-37 0-50z"/></clipPath>
<g clip-path="url(#brl6)"><rect x="360" y="78" width="66" height="17" fill="#e5534b"/><rect x="360" y="94" width="66" height="7" fill="#f0a030"/><rect x="360" y="100" width="66" height="5" fill="#e8d83a"/><rect x="360" y="104" width="66" height="7" fill="#4bb86a"/><rect x="360" y="110" width="66" height="19" fill="#2e9be6"/></g>
<text x="316" y="148" font-size="17" fill="#444" textLength="153" lengthAdjust="spacingAndGlyphs">Flächenverjüngung</text>
<radialGradient id="fl6" gradientUnits="userSpaceOnUse" cx="540" cy="70" r="78"><stop offset="0" stop-color="#e8503e"/><stop offset=".3" stop-color="#ea5a3c"/><stop offset=".42" stop-color="#f0a030"/><stop offset=".52" stop-color="#dfe040"/><stop offset=".66" stop-color="#4cc470"/><stop offset=".82" stop-color="#30b0d8"/><stop offset="1" stop-color="#2e86e4"/></radialGradient>
<rect x="478" y="78" width="50" height="50" fill="url(#fl6)" />
<text x="478" y="148" font-size="17" fill="#444" textLength="51" lengthAdjust="spacingAndGlyphs">Fläche</text>
<path d="M542 80h48v48h-16v-34h-16v34h-16z" fill="#f4ecc8" stroke="#86bdb0" stroke-width="2.6"/><path d="M574 80h16v48h-16z" fill="#cfe8e2" opacity=".8"/><path d="M542 80h16v14h-16z" fill="#f4d0c0" opacity=".8"/>
<text x="538" y="148" font-size="17" fill="#444" textLength="56" lengthAdjust="spacingAndGlyphs">Schnitt</text>
<path d="M624 122c2-22 10-38 22-38s20 16 22 38l-8-3c-3-9-8-14-14-14s-11 5-14 14z" fill="#eef4fb" stroke="#5a80b0" stroke-width="2.4" stroke-linejoin="round"/><path d="M634 100l-6-8M646 96v-12M658 100l6-8" stroke="#5a80b0" stroke-width="1.8"/>
<text x="603" y="148" font-size="17" fill="#444" textLength="91" lengthAdjust="spacingAndGlyphs">Krümmung</text>
<text x="418" y="202" font-size="17" fill="#555" textLength="62" lengthAdjust="spacingAndGlyphs">Analyse</text>
<line x1="700" y1="72" x2="700" y2="206" stroke="#dedede" stroke-width="2" />
<rect x="709" y="77" width="49" height="30" fill="#f7f7f7" stroke="#e2e2e2" stroke-width="1.5"/>
<circle cx="725" cy="91" r="9" fill="#fff" stroke="#555" stroke-width="2"/>
<path d="M721.4 89.84h7.2l-3.6 4.680000000000001z" fill="#444"/>
<path d="M745.4 90.44h5.2l-2.6 3.3800000000000003z" fill="#444"/>
<rect x="0" y="210" width="244" height="832" fill="#f2f2f2" />
<rect x="88" y="212" width="156" height="33" fill="#d5d5d5" />
<text x="5" y="233" font-size="15.5" fill="#444" textLength="45" lengthAdjust="spacingAndGlyphs">Modell</text>
<path d="M66.5 222.5L77.5 233.5M77.5 222.5L66.5 233.5" stroke="#333" stroke-width="2.4" fill="none"/>
<path d="M96.5 228H111.5M104 220.5V235.5" stroke="#333" stroke-width="3" fill="none"/>
<circle cx="189" cy="226" r="7.5" fill="none" stroke="#333" stroke-width="2.8"/><path d="M194 232l7 7" stroke="#333" stroke-width="3.2"/>
<path d="M215.5 221.5h19M215.5 228h19M215.5 234.5h19" stroke="#333" stroke-width="3" fill="none"/>
<line x1="244.5" y1="210" x2="244.5" y2="1042" stroke="#b4b4b4" stroke-width="1.5" />
<text x="32" y="270" font-size="15.5" fill="#2a2a2a" textLength="102" lengthAdjust="spacingAndGlyphs">Basisplatte.ipt</text>
<path d="M7 258l4-5h14v14l-4 5h-14z" fill="#3d8fd6"/><path d="M7 258h14v14h-14z" fill="#62aee8"/>
<text x="56" y="300" font-size="15.5" fill="#2a2a2a" textLength="128" lengthAdjust="spacingAndGlyphs">Volumenkörper(1)</text>
<path d="M7.5 292H18.5M13 286.5V297.5" stroke="#555" stroke-width="2" fill="none"/>
<path d="M28 284h9l3 3h11v15h-23z" fill="#d8c878"/><path d="M35 290h9v8h-9z" fill="#7f9a4a"/>
<text x="56" y="330" font-size="15.5" fill="#2a2a2a" textLength="158" lengthAdjust="spacingAndGlyphs">Ansicht: Hauptansicht</text>
<path d="M7.5 322H18.5M13 316.5V327.5" stroke="#555" stroke-width="2" fill="none"/>
<path d="M33 313v19h8M33 322h14" fill="none" stroke="#3a78b8" stroke-width="2.2"/><circle cx="33" cy="313" r="2.2" fill="#3a78b8"/><circle cx="42" cy="332" r="2.2" fill="#3a78b8"/>
<text x="56" y="360" font-size="15.5" fill="#2a2a2a" textLength="66" lengthAdjust="spacingAndGlyphs">Ursprung</text>
<path d="M7.5 352H18.5M13 346.5V357.5" stroke="#555" stroke-width="2" fill="none"/>
<path d="M28 343h9l3 3h11v16h-23z" fill="#f0c850"/><path d="M28 349h23v13h-23z" fill="#f7d870"/>
<text x="56" y="390" font-size="15.5" fill="#2a2a2a" textLength="77" lengthAdjust="spacingAndGlyphs">Extrusion1</text>
<path d="M7.5 382H18.5M13 376.5V387.5" stroke="#555" stroke-width="2" fill="none"/>
<path d="M28 377l4-5h13v15l-4 5h-13z" fill="#2f78c4"/><path d="M28 377h13v15h-13z" fill="#5aa4e4"/><path d="M49 391v-20" stroke="#444" stroke-width="1.8"/>
<text x="56" y="420" font-size="15.5" fill="#2a2a2a" textLength="77" lengthAdjust="spacingAndGlyphs">Extrusion2</text>
<path d="M7.5 412H18.5M13 406.5V417.5" stroke="#555" stroke-width="2" fill="none"/>
<path d="M28 407l4-5h13v15l-4 5h-13z" fill="#2f78c4"/><path d="M28 407h13v15h-13z" fill="#5aa4e4"/><path d="M49 421v-20" stroke="#444" stroke-width="1.8"/>
<text x="56" y="450" font-size="15.5" fill="#2a2a2a" textLength="69" lengthAdjust="spacingAndGlyphs">Spiegeln1</text>
<path d="M7.5 442H18.5M13 436.5V447.5" stroke="#555" stroke-width="2" fill="none"/>
<path d="M30 452l9-19l9 19z" fill="#dfe8f4" stroke="#44648c" stroke-width="2"/><path d="M39 433v19" stroke="#44648c" stroke-width="1.6"/>
<text x="56" y="480" font-size="15.5" fill="#2a2a2a" textLength="69" lengthAdjust="spacingAndGlyphs">Bohrung1</text>
<path d="M7.5 472H18.5M13 466.5V477.5" stroke="#555" stroke-width="2" fill="none"/>
<rect x="29" y="463" width="21" height="19" fill="#dce6ee" stroke="#4a5a6a" stroke-width="2"/><circle cx="39" cy="473" r="5.5" fill="#8aa0b4" stroke="#4a5a6a" stroke-width="1.4"/>
<text x="56" y="510" font-size="15.5" fill="#2a2a2a" textLength="83" lengthAdjust="spacingAndGlyphs">Bauteilende</text>
<circle cx="40" cy="503" r="9.5" fill="#d83030"/><path d="M35.500 498.5l9 9M44.500 498.5l-9 9" stroke="#fff" stroke-width="2.6"/>
<linearGradient id="dtb6" x1="0" y1="0" x2="0" y2="1"><stop offset="0" stop-color="#d2d2d2"/><stop offset="1" stop-color="#dedede"/></linearGradient>
<rect x="244" y="1005" width="1675" height="38" fill="url(#dtb6)" />
<path d="M256 1023l10-9l10 9M259 1021v11h5v-6h4v6h5v-11" fill="#f4f4f4" stroke="#555" stroke-width="2" stroke-linejoin="round"/>
<rect x="290" y="1007" width="165" height="33" fill="#ececec" />
<rect x="290" y="1039" width="165" height="3.5" fill="#4fa6de" />
<text x="302" y="1028" font-size="17" fill="#4a8fc0" textLength="110" lengthAdjust="spacingAndGlyphs">Basisplatte.ipt</text>
<path d="M424.5 1015.5L435.5 1026.5M435.5 1015.5L424.5 1026.5" stroke="#333" stroke-width="2" fill="none"/>
<path d="M1892.5 1016.5h19M1892.5 1023h19M1892.5 1029.5h19" stroke="#555" stroke-width="2.4" fill="none"/>
<rect x="0" y="1043" width="1919" height="37" fill="#f0f0f0" />
<text x="3" y="1070" font-size="15.5" fill="#333" textLength="1140" lengthAdjust="spacingAndGlyphs">Nächsten Punkt/nächste Linie/Kante/Achse, Ebene oder Fläche auswählen (oder einen leeren Bereich zum erneuten Starten des Messens wählen)</text>
<text x="1816" y="1070" font-size="15.5" fill="#444">1</text>
<text x="1873" y="1070" font-size="15.5" fill="#444">1</text>
<text x="1661" y="1047" font-size="32" fill="#ececec" textLength="87" lengthAdjust="spacingAndGlyphs" font-weight="bold" stroke="#8e8e8e" stroke-width="1.3" paint-order="stroke" fill-opacity=".92">Linked</text>
<rect x="1751" y="1020" width="29" height="29" fill="#f4f4f4" rx="3" stroke="#a0a0a0" stroke-width="1" fill-opacity=".9"/>
<text x="1754" y="1046" font-size="27" fill="#bdbdbd" textLength="23" lengthAdjust="spacingAndGlyphs" font-weight="bold" stroke="#b0b0b0" stroke-width=".4">in</text>
<text x="1786" y="1047" font-size="32" fill="#ececec" textLength="100" lengthAdjust="spacingAndGlyphs" font-weight="bold" stroke="#8e8e8e" stroke-width="1.3" paint-order="stroke" fill-opacity=".92">Learning</text>
<rect x="1.5" y="1.5" width="1916" height="1076.25" fill="none" stroke="#fdfdfd" stroke-width="3"/>
</svg>
<svg class="p" style="left:643px;top:782px" width="633" height="356" viewBox="0 0 1919 1079.25" font-family='"Liberation Sans", sans-serif'>
<linearGradient id="vbg7" x1="0" y1="1" x2="1" y2="0"><stop offset="0" stop-color="#bfbfbf"/><stop offset=".55" stop-color="#c5c5c5"/><stop offset="1" stop-color="#cecece"/></linearGradient><rect x="244" y="210" width="1675" height="796" fill="url(#vbg7)" />
<clipPath id="vc7"><rect x="244" y="210" width="1675" height="796"/></clipPath>
<g clip-path="url(#vc7)"><polygon points="1925,360 1439,1006 1925,1010" fill="#d0d0d0" />
<polygon points="1925,735 1720,1010 1925,1010" fill="#c5c5c5" stroke="#555" stroke-width="1.3" stroke-linejoin="round" />
<line x1="1928" y1="360" x2="1442" y2="1008" stroke="#f2b4b4" stroke-width="3" />
<polygon points="240,205 1925,205 1925,360 1439,1008 470,1008 240,964" fill="#b68483" stroke="#cc2026" stroke-width="3.6" stroke-linejoin="round" />
<linearGradient id="rcy7" x1="0" y1="0" x2="0" y2="1"><stop offset="0" stop-color="#a8b878" stop-opacity=".55"/><stop offset=".7" stop-color="#a8a878" stop-opacity=".35"/><stop offset="1" stop-color="#a8a878" stop-opacity="0"/></linearGradient>
<path d="M792 720L815 880Q930 990 1110 880L1083 670z" fill="url(#rcy7)"/>
<clipPath id="gel7"><ellipse cx="0" cy="0" rx="148" ry="95"/></clipPath>
<g transform="translate(937,694) rotate(-9)"><ellipse rx="148" ry="95" fill="#ade0ad"/><g clip-path="url(#gel7)"><ellipse cx="30" cy="140" rx="90" ry="70" fill="#b0b0b8" stroke="#78d070" stroke-width="5"/></g><ellipse rx="148" ry="95" fill="none" stroke="#c82424" stroke-width="3.5"/></g>
<line x1="1359" y1="210" x2="958" y2="749" stroke="#3c2c70" stroke-width="1.6" />
<path d="M953 756l4 -17l10 8z" fill="#14204c"/></g>
<path d="M318 896l-4 30l-6 30" stroke="#888" stroke-width="1.2" fill="none"/><path d="M314 926l-22-4" stroke="#d04040" stroke-width="1.4"/>
<path d="M311 908l8-16l9 18z" fill="#301880"/>
<path d="M290 922l14-8v16z" fill="#d02020"/>
<circle cx="312" cy="947" r="7" fill="#30a030"/>
<text x="311" y="890" font-size="14" fill="#2020c0">Z</text>
<text x="276" y="926" font-size="13" fill="#e03030">X</text>
<text x="296" y="968" font-size="12" fill="#30c030">Y</text>
<path d="M1868 220h16v14h-16zM1876 220v14" fill="none" stroke="#444" stroke-width="2"/>
<path d="M1901 221L1913 233M1913 221L1901 233" stroke="#444" stroke-width="2" fill="none"/>
<rect x="1866" y="383" width="60" height="342" rx="8" fill="#d8d8d8" fill-opacity=".35" stroke="#8c8c8c" stroke-width="2.4"/>
<circle cx="1891" cy="432" r="15" fill="#eaeaea" fill-opacity=".5" stroke="#7c7c7c" stroke-width="2.2"/><circle cx="1891" cy="432" r="8.5" fill="none" stroke="#888888" stroke-width="2"/>
<path d="M1880 516v-14l4-2v-10h4v9h2v-11h4v11h2v-9h4v12l2-4h4l-5 14v4z" fill="#ececec" fill-opacity=".5" stroke="#787878" stroke-width="1.8"/>
<path d="M1876 534h14l6 6v18h-20z" fill="#eaeaea" fill-opacity=".5" stroke="#7c7c7c" stroke-width="1.8"/><circle cx="1894" cy="553" r="6" fill="#e8e8e8" fill-opacity=".5" stroke="#707070" stroke-width="2"/><path d="M1899 558l7 7" stroke="#707070" stroke-width="2.6"/>
<path d="M1891 598l7 9h-4v4h9v-4l7 6l-7 6v-4h-9v4h4l-7 9l-7-9h4v-4h-9v4l-7-6l7-6v4h9v-4h-4z" fill="#e8e8e8" fill-opacity=".5" stroke="#7a7a7a" stroke-width="1.6" transform="translate(0,0) scale(1)"/>
<rect x="1877" y="668" width="30" height="22" rx="3" fill="#e8e8e8" fill-opacity=".5" stroke="#7a7a7a" stroke-width="2"/><rect x="1883" y="675" width="18" height="9" fill="none" stroke="#888888" stroke-width="1.6"/><path d="M1884 668v-6h5M1899 668v-6h-5" fill="none" stroke="#7a7a7a" stroke-width="1.8"/>
<circle cx="1891" cy="466" r="1.8" fill="#999"/>
<circle cx="1891" cy="582" r="1.8" fill="#999"/>
<circle cx="1891" cy="644" r="1.8" fill="#999"/>
<circle cx="1904" cy="393" r="3.4" fill="none" stroke="#aaa" stroke-width="1.4"/><circle cx="1904" cy="714" r="3.4" fill="none" stroke="#aaa" stroke-width="1.4"/>
<g opacity="0.55"><path d="M1834 268l52 4l8 48l-14 26z" fill="#9c9c9c" opacity=".5"/><path d="M1805.300 306.900L1830.800 275L1883.900 279.300L1864.800 304.700z" fill="#d8d8d8" stroke="#b2b2b2" stroke-width="1.4" stroke-linejoin="round"/><path d="M1805.300 306.900L1864.800 304.700L1866.900 357.800L1818.100 345.100z" fill="#dadada" stroke="#b2b2b2" stroke-width="1.4" stroke-linejoin="round"/><path d="M1883.900 279.300L1888.100 321.700L1866.900 357.800L1864.800 304.700z" fill="#c6c6c6" stroke="#b2b2b2" stroke-width="1.4" stroke-linejoin="round"/><path d="M1828 288l34-1M1824 322l30 8" stroke="#9a9a9a" stroke-width="2.6" stroke-dasharray="5 2"/><path d="M1820 308l36 2M1826 336l34 10" stroke="#bababa" stroke-width="1.8"/></g>
<rect x="248" y="210" width="401" height="610" fill="#f4f4f4" />
<rect x="345" y="212" width="304" height="33" fill="#d5d5d5" />
<text x="254" y="233" font-size="15.5" fill="#444" textLength="54" lengthAdjust="spacingAndGlyphs">Messen</text>
<path d="M322.5 222.5L333.5 233.5M333.5 222.5L322.5 233.5" stroke="#333" stroke-width="2.4" fill="none"/>
<path d="M354.5 228H369.5M362 220.5V235.5" stroke="#333" stroke-width="3" fill="none"/>
<path d="M619.5 221.5h19M619.5 228h19M619.5 234.5h19" stroke="#333" stroke-width="3" fill="none"/>
<rect x="250" y="251" width="397" height="36" fill="#e9e9e9" />
<path d="M266 266.0h10l-5 6.5z" fill="#333"/>
<text x="288" y="275" font-size="17" fill="#555" textLength="125" lengthAdjust="spacingAndGlyphs">Messergebnisse</text>
<rect x="265" y="288" width="364" height="31" fill="#efc060" />
<text x="277" y="308.5" font-size="15.5" fill="#1e1e1e" textLength="92" lengthAdjust="spacingAndGlyphs">Achsabstand</text>
<text x="430" y="308.5" font-size="15.5" fill="#1c1c1c" textLength="105" lengthAdjust="spacingAndGlyphs" font-weight="bold">325,000 mm</text>
<path d="M287 327l5 6l-5 6" fill="none" stroke="#aaa" stroke-width="1.6"/>
<text x="304" y="338.5" font-size="15.5" fill="#1e1e1e" textLength="38" lengthAdjust="spacingAndGlyphs">Delta</text>
<text x="277" y="363.5" font-size="15.5" fill="#1e1e1e" textLength="114" lengthAdjust="spacingAndGlyphs">Mindestabstand</text>
<text x="430" y="363.5" font-size="15.5" fill="#1c1c1c" textLength="105" lengthAdjust="spacingAndGlyphs" font-weight="bold">305,000 mm</text>
<path d="M287 382l5 6l-5 6" fill="none" stroke="#aaa" stroke-width="1.6"/>
<text x="304" y="393.5" font-size="15.5" fill="#1e1e1e" textLength="38" lengthAdjust="spacingAndGlyphs">Delta</text>
<rect x="250" y="404" width="397" height="36" fill="#e9e9e9" />
<path d="M266 419.0h10l-5 6.5z" fill="#333"/>
<text x="288" y="428" font-size="17" fill="#555" textLength="152" lengthAdjust="spacingAndGlyphs">Auswahl 1 (Fläche)</text>
<text x="277" y="461.5" font-size="15.5" fill="#1e1e1e" textLength="48" lengthAdjust="spacingAndGlyphs">Radius</text>
<text x="430" y="461.5" font-size="15.5" fill="#1c1c1c" textLength="95" lengthAdjust="spacingAndGlyphs" font-weight="bold">10,000 mm</text>
<text x="277" y="491.5" font-size="15.5" fill="#1e1e1e" textLength="95" lengthAdjust="spacingAndGlyphs">Durchmesser</text>
<text x="430" y="491.5" font-size="15.5" fill="#1c1c1c" textLength="95" lengthAdjust="spacingAndGlyphs" font-weight="bold">20,000 mm</text>
<text x="277" y="521.5" font-size="15.5" fill="#1e1e1e" textLength="128" lengthAdjust="spacingAndGlyphs">Gesamtkonturlä..</text>
<text x="430" y="521.5" font-size="15.5" fill="#1c1c1c" textLength="105" lengthAdjust="spacingAndGlyphs" font-weight="bold">125,664 mm</text>
<text x="277" y="551.5" font-size="15.5" fill="#1e1e1e" textLength="46" lengthAdjust="spacingAndGlyphs">Fläche</text>
<text x="430" y="551.5" font-size="15.5" fill="#1c1c1c" textLength="113" lengthAdjust="spacingAndGlyphs" font-weight="bold">848,230 mm²</text>
<path d="M287 570l5 6l-5 6" fill="none" stroke="#aaa" stroke-width="1.6"/>
<text x="304" y="581.5" font-size="15.5" fill="#1e1e1e" textLength="101" lengthAdjust="spacingAndGlyphs">Punkt messen</text>
<rect x="250" y="591" width="397" height="36" fill="#e9e9e9" />
<path d="M266 606.0h10l-5 6.5z" fill="#333"/>
<text x="288" y="615" font-size="17" fill="#555" textLength="152" lengthAdjust="spacingAndGlyphs">Auswahl 2 (Fläche)</text>
<text x="277" y="648.5" font-size="15.5" fill="#1e1e1e" textLength="48" lengthAdjust="spacingAndGlyphs">Radius</text>
<text x="430" y="648.5" font-size="15.5" fill="#1c1c1c" textLength="95" lengthAdjust="spacingAndGlyphs" font-weight="bold">10,000 mm</text>
<text x="277" y="678.5" font-size="15.5" fill="#1e1e1e" textLength="95" lengthAdjust="spacingAndGlyphs">Durchmesser</text>
<text x="430" y="678.5" font-size="15.5" fill="#1c1c1c" textLength="95" lengthAdjust="spacingAndGlyphs" font-weight="bold">20,000 mm</text>
<text x="277" y="708.5" font-size="15.5" fill="#1e1e1e" textLength="128" lengthAdjust="spacingAndGlyphs">Gesamtkonturlä..</text>
<text x="430" y="708.5" font-size="15.5" fill="#1c1c1c" textLength="105" lengthAdjust="spacingAndGlyphs" font-weight="bold">125,664 mm</text>
<text x="277" y="738.5" font-size="15.5" fill="#1e1e1e" textLength="46" lengthAdjust="spacingAndGlyphs">Fläche</text>
<text x="430" y="738.5" font-size="15.5" fill="#1c1c1c" textLength="113" lengthAdjust="spacingAndGlyphs" font-weight="bold">848,230 mm²</text>
<path d="M287 757l5 6l-5 6" fill="none" stroke="#aaa" stroke-width="1.6"/>
<text x="304" y="768.5" font-size="15.5" fill="#1e1e1e" textLength="101" lengthAdjust="spacingAndGlyphs">Punkt messen</text>
<rect x="250" y="779" width="397" height="36" fill="#e9e9e9" />
<path d="M268.0 792v10l7.0 -5z" fill="#333"/>
<text x="288" y="803" font-size="17" fill="#555" textLength="192" lengthAdjust="spacingAndGlyphs">Erweiterte Einstellungen</text>
<rect x="614" y="388" width="300" height="37" fill="#f4f0f0" fill-opacity=".62" stroke="#e6dede" stroke-width="1.5"/>
<text x="625" y="413" font-size="17" fill="#a596a6" textLength="281" lengthAdjust="spacingAndGlyphs">Zu akkumuliertem Wert hinzufügen</text>
<path d="M814 441v24l6-5l5 10l4-2l-5-10h8z" fill="#fff" stroke="#2c2c2c" stroke-width="2.4" stroke-linejoin="round"/><rect x="835" y="453" width="10" height="30" fill="#ececec" stroke="#2c2c2c" stroke-width="2.6"/><path d="M837 460h4M837 466h4M837 472h4M837 478h4" stroke="#888" stroke-width="1.2"/>
<rect x="0" y="0" width="1919" height="38" fill="#d8d8d8" />
<path d="M14 3h12v4h-3v15h4v6h-14v-6h4v-15h-3z" fill="#c98a3a"/>
<path d="M12 24h16v7h-16z" fill="#8a6a48"/>
<path d="M50 7h14l7 6v14h-21z" fill="#fafafa" stroke="#555" stroke-width="2.2"/>
<path d="M84.8 16.08h6.4l-3.2 4.16z" fill="#555"/>
<path d="M103 27v-18h8l3 4h10v5M103 27l6-10h20l-6 10z" fill="#f4f4f4" stroke="#555" stroke-width="2.2" stroke-linejoin="round"/>
<path d="M139 5h22v24h-22z" fill="#4a4a4a"/><path d="M144 5h12v9h-12z" fill="#e8e8e8"/><path d="M145 20h10v9h-10z" fill="#d0d0d0"/>
<path d="M177 17l9-8v5h10v9h-4v-4h-6v5z" fill="#e8e8e8" stroke="#666" stroke-width="1.8" stroke-linejoin="round"/>
<path d="M210.4 16.44h5.2l-2.6 3.3800000000000003z" fill="#777"/>
<path d="M252 17l-9-8v5h-10v9h4v-4h6v5z" fill="#dedede" stroke="#bdbdbd" stroke-width="1.8" stroke-linejoin="round"/>
<path d="M264.4 16.44h5.2l-2.6 3.3800000000000003z" fill="#b5b5b5"/>
<line x1="283" y1="5" x2="283" y2="30" stroke="#c4c4c4" stroke-width="1.5" />
<path d="M293 18l12-11l12 11M297 16v12h6v-7h4v7h6v-12" fill="#f4f4f4" stroke="#4a4a4a" stroke-width="2.4" stroke-linejoin="round"/>
<path d="M335 8l6 5l-6 5M335 13h-3v12h14v-6" fill="none" stroke="#b0b0b0" stroke-width="2.2"/><path d="M343 18h11v10h-11z" fill="#e6e6e6" stroke="#b8b8b8" stroke-width="1.6"/>
<path d="M367.4 16.44h5.2l-2.6 3.3800000000000003z" fill="#777"/>
<path d="M384 7h22v22h-22z" fill="#4f9d5d"/><path d="M384 7h22v6h-22z" fill="#3d7f4a"/><path d="M392 15h6v5h-6zM400 21h5v5h-5z" fill="#bfe3c5"/>
<path d="M417.4 16.44h5.2l-2.6 3.3800000000000003z" fill="#777"/>
<path d="M440 6h10v14h-10z" fill="#e4e4e4" stroke="#b0b0b0" stroke-width="1.6"/><path d="M447 18h9v10h-9z" fill="#ececec" stroke="#b8b8b8" stroke-width="1.6"/>
<circle cx="484" cy="17" r="11" fill="#e9e9e9" stroke="#3f3f3f" stroke-width="3.2"/><path d="M476.500 9.500l15 15M491.500 9.500l-15 15" stroke="#3f3f3f" stroke-width="4"/>
<rect x="502" y="3" width="150" height="30" fill="#dcdcdc" />
<text x="513" y="23" font-size="17" fill="#555" textLength="77" lengthAdjust="spacingAndGlyphs">Generisch</text>
<path d="M639.4 15.84h7.2l-3.6 4.680000000000001z" fill="#444"/>
<circle cx="668" cy="17" r="12" fill="#d9a13c"/><path d="M668 17L668 5A12 12 0 0 1 680 17z" fill="#d94c4c"/><path d="M668 17L680 17A12 12 0 0 1 668 29z" fill="#4d84d8"/><path d="M668 17L668 29A12 12 0 0 1 656 17z" fill="#5cb85c"/><circle cx="668" cy="17" r="4" fill="#e9d9f0"/>
<rect x="690" y="3" width="148" height="30" fill="#dedede" />
<path d="M694 6h18v20h-18z" fill="#cfd6de" stroke="#8a8f98" stroke-width="1.5"/><path d="M694 18l6-6l5 5l3-2l4 4v7h-18z" fill="#7b8794"/>
<text x="718" y="23" font-size="17" fill="#555" textLength="67" lengthAdjust="spacingAndGlyphs">Vorgabe</text>
<path d="M824.4 15.84h7.2l-3.6 4.680000000000001z" fill="#444"/>
<circle cx="853" cy="15" r="10" fill="#e0a040"/><path d="M853 15V5A10 10 0 0 1 863 15z" fill="#d95050"/><path d="M853 15h10A10 10 0 0 1 853 25z" fill="#4f86d8"/><path d="M853 15v10A10 10 0 0 1 843 15z" fill="#5cb85c"/>
<circle cx="890" cy="15" r="10" fill="#e0a040"/><path d="M890 15V5A10 10 0 0 1 900 15z" fill="#d95050"/><path d="M890 15h10A10 10 0 0 1 890 25z" fill="#4f86d8"/><path d="M890 15v10A10 10 0 0 1 880 15z" fill="#5cb85c"/>
<circle cx="861" cy="23" r="6" fill="#5a8fd0" stroke="#35588a" stroke-width="1.2"/>
<path d="M893 18l8 8" stroke="#c04040" stroke-width="4"/>
<text x="919" y="25" font-size="24" fill="#555" textLength="22" lengthAdjust="spacingAndGlyphs" font-style="italic" font-family="Liberation Serif, serif">fx</text>
<path d="M955 17H971M963 9V25" stroke="#b0b0b0" stroke-width="3.4" fill="none"/>
<line x1="983" y1="11" x2="1003" y2="11" stroke="#666" stroke-width="2" />
<path d="M989.4 16.84h7.2l-3.6 4.680000000000001z" fill="#555"/>
<text x="1033" y="23" font-size="17" fill="#5a5a5a" textLength="110" lengthAdjust="spacingAndGlyphs">Basisplatte.ipt</text>
<path d="M1175.6 13v8l5.6 -4z" fill="#555"/>
<rect x="1190" y="2" width="272" height="31" fill="#fbfbfb" />
<text x="1197" y="22" font-size="17" fill="#4a4a4a" textLength="257" lengthAdjust="spacingAndGlyphs">Hilfe und Befehle durchsuchen..</text>
<circle cx="1478" cy="11" r="6.5" fill="#5b7fc0" stroke="#2c4f92" stroke-width="1.6"/><path d="M1466 29c0-9 5-12 12-12s12 3 12 12z" fill="#5b7fc0" stroke="#2c4f92" stroke-width="1.6"/>
<text x="1497" y="23" font-size="17" fill="#666" textLength="110" lengthAdjust="spacingAndGlyphs">thomasXJGXP</text>
<path d="M1625.2 16.32h5.6l-2.8 3.6399999999999997z" fill="#666"/>
<path d="M1644 7h5l4 13h13l3-9h-18" fill="none" stroke="#4a4a4a" stroke-width="2.2"/><circle cx="1655" cy="26" r="2.6" fill="#4a4a4a"/><circle cx="1665" cy="26" r="2.6" fill="#4a4a4a"/>
<path d="M1683 13l4 4l-4 4M1690 13l4 4l-4 4" fill="none" stroke="#444" stroke-width="2"/>
<line x1="1819" y1="25" x2="1833" y2="25" stroke="#333" stroke-width="2.6" />
<path d="M1855 14h12v11h-12zM1859 14v-4h12v11h-4" fill="none" stroke="#333" stroke-width="2.2"/>
<path d="M1892 9L1908 25M1908 9L1892 25" stroke="#222" stroke-width="3" fill="none"/>
<rect x="0" y="38" width="1919" height="31" fill="#dadada" />
<rect x="3" y="39" width="62" height="30" fill="#f0a43a" />
<text x="10" y="60" font-size="17" fill="#fff3dc" textLength="42" lengthAdjust="spacingAndGlyphs">Datei</text>
<rect x="492" y="40" width="80" height="30" fill="#f1f1f1" />
<text x="84" y="60" font-size="17" fill="#6e6e6e" textLength="83" lengthAdjust="spacingAndGlyphs">3D-Modell</text>
<text x="198" y="60" font-size="17" fill="#6e6e6e" textLength="47" lengthAdjust="spacingAndGlyphs">Skizze</text>
<text x="274" y="60" font-size="17" fill="#6e6e6e" textLength="202" lengthAdjust="spacingAndGlyphs">Mit Anmerkung versehen</text>
<text x="505" y="60" font-size="17" fill="#333" textLength="53" lengthAdjust="spacingAndGlyphs">Prüfen</text>
<text x="587" y="60" font-size="17" fill="#6e6e6e" textLength="46" lengthAdjust="spacingAndGlyphs">Extras</text>
<text x="662" y="60" font-size="17" fill="#6e6e6e" textLength="78" lengthAdjust="spacingAndGlyphs">Verwalten</text>
<text x="769" y="60" font-size="17" fill="#6e6e6e" textLength="60" lengthAdjust="spacingAndGlyphs">Ansicht</text>
<text x="859" y="60" font-size="17" fill="#6e6e6e" textLength="110" lengthAdjust="spacingAndGlyphs">Umgebungen</text>
<text x="998" y="60" font-size="17" fill="#6e6e6e" textLength="103" lengthAdjust="spacingAndGlyphs">Erste Schritte</text>
<text x="1130" y="60" font-size="17" fill="#6e6e6e" textLength="156" lengthAdjust="spacingAndGlyphs">Zusammenarbeiten</text>
<rect x="1331" y="47" width="20" height="14" rx="4" fill="none" stroke="#555" stroke-width="1.8"/><path d="M1338 51v6l5-3z" fill="#555"/>
<path d="M1361 54.2h6l-3 3.9000000000000004z" fill="#444"/>
<rect x="0" y="69" width="1919" height="141" fill="#f1f1f1" />
<rect x="15" y="95.5" width="45" height="8" fill="#f9e9b4" />
<rect x="15" y="103" width="45" height="6.5" fill="#f3c440" />
<rect x="15" y="109.5" width="45" height="1.5" fill="#fdf2d0" />
<rect x="15" y="111" width="45" height="7" fill="#e1a11f" />
<path d="M16 95v9M59 95v9M18 99.500h39" stroke="#4a4a4a" stroke-width="1.8" fill="none"/><path d="M17 99.500l6-3.200v6.400zM58 99.500l-6-3.200v6.400z" fill="#4a4a4a"/>
<text x="8" y="148" font-size="17" fill="#444" textLength="59" lengthAdjust="spacingAndGlyphs">Messen</text>
<path d="M108 78h38v40h-38z" fill="#f6f6f6" stroke="#dcdcdc" stroke-width="2"/><path d="M136 100h20v30h-20z" fill="#ededed" stroke="#d8d8d8" stroke-width="2"/><path d="M141 108h10M141 116h10" stroke="#cfcfcf" stroke-width="2"/>
<text x="97" y="148" font-size="17" fill="#c2c2c2" textLength="68" lengthAdjust="spacingAndGlyphs">Bereichs-</text>
<text x="77" y="170" font-size="17" fill="#c2c2c2" textLength="111" lengthAdjust="spacingAndGlyphs">eigenschaften</text>
<text x="68" y="202" font-size="17" fill="#555" textLength="59" lengthAdjust="spacingAndGlyphs">Messen</text>
<line x1="196" y1="72" x2="196" y2="206" stroke="#dedede" stroke-width="2" />
<clipPath id="zb7"><rect x="230" y="78" width="50" height="50"/></clipPath>
<rect x="230" y="78" width="50" height="50" fill="#fdfdfd" stroke="#bbb" stroke-width="1"/>
<g clip-path="url(#zb7)" fill="none" stroke="#3a3a3a" stroke-width="7.500"><path d="M228 84l26 19l-26 19"/><path d="M244 74c24 12 24 46 0 58"/><path d="M262 72c22 12 22 50 0 62"/><path d="M279 70c12 14 12 52 0 66"/></g>
<text x="204" y="148" font-size="17" fill="#444" textLength="103" lengthAdjust="spacingAndGlyphs">Zebrastreifen</text>
<clipPath id="brl7"><path d="M375 78h36c10 13 10 37 0 50h-36c-10-13-10-37 0-50z"/></clipPath>
<g clip-path="url(#brl7)"><rect x="360" y="78" width="66" height="17" fill="#e5534b"/><rect x="360" y="94" width="66" height="7" fill="#f0a030"/><rect x="360" y="100" width="66" height="5" fill="#e8d83a"/><rect x="360" y="104" width="66" height="7" fill="#4bb86a"/><rect x="360" y="110" width="66" height="19" fill="#2e9be6"/></g>
<text x="316" y="148" font-size="17" fill="#444" textLength="153" lengthAdjust="spacingAndGlyphs">Flächenverjüngung</text>
<radialGradient id="fl7" gradientUnits="userSpaceOnUse" cx="540" cy="70" r="78"><stop offset="0" stop-color="#e8503e"/><stop offset=".3" stop-color="#ea5a3c"/><stop offset=".42" stop-color="#f0a030"/><stop offset=".52" stop-color="#dfe040"/><stop offset=".66" stop-color="#4cc470"/><stop offset=".82" stop-color="#30b0d8"/><stop offset="1" stop-color="#2e86e4"/></radialGradient>
<rect x="478" y="78" width="50" height="50" fill="url(#fl7)" />
<text x="478" y="148" font-size="17" fill="#444" textLength="51" lengthAdjust="spacingAndGlyphs">Fläche</text>
<path d="M542 80h48v48h-16v-34h-16v34h-16z" fill="#f4ecc8" stroke="#86bdb0" stroke-width="2.6"/><path d="M574 80h16v48h-16z" fill="#cfe8e2" opacity=".8"/><path d="M542 80h16v14h-16z" fill="#f4d0c0" opacity=".8"/>
<text x="538" y="148" font-size="17" fill="#444" textLength="56" lengthAdjust="spacingAndGlyphs">Schnitt</text>
<path d="M624 122c2-22 10-38 22-38s20 16 22 38l-8-3c-3-9-8-14-14-14s-11 5-14 14z" fill="#eef4fb" stroke="#5a80b0" stroke-width="2.4" stroke-linejoin="round"/><path d="M634 100l-6-8M646 96v-12M658 100l6-8" stroke="#5a80b0" stroke-width="1.8"/>
<text x="603" y="148" font-size="17" fill="#444" textLength="91" lengthAdjust="spacingAndGlyphs">Krümmung</text>
<text x="418" y="202" font-size="17" fill="#555" textLength="62" lengthAdjust="spacingAndGlyphs">Analyse</text>
<line x1="700" y1="72" x2="700" y2="206" stroke="#dedede" stroke-width="2" />
<rect x="709" y="77" width="49" height="30" fill="#f7f7f7" stroke="#e2e2e2" stroke-width="1.5"/>
<circle cx="725" cy="91" r="9" fill="#fff" stroke="#555" stroke-width="2"/>
<path d="M721.4 89.84h7.2l-3.6 4.680000000000001z" fill="#444"/>
<path d="M745.4 90.44h5.2l-2.6 3.3800000000000003z" fill="#444"/>
<rect x="0" y="210" width="244" height="832" fill="#f2f2f2" />
<rect x="88" y="212" width="156" height="33" fill="#d5d5d5" />
<text x="5" y="233" font-size="15.5" fill="#444" textLength="45" lengthAdjust="spacingAndGlyphs">Modell</text>
<path d="M66.5 222.5L77.5 233.5M77.5 222.5L66.5 233.5" stroke="#333" stroke-width="2.4" fill="none"/>
<path d="M96.5 228H111.5M104 220.5V235.5" stroke="#333" stroke-width="3" fill="none"/>
<circle cx="189" cy="226" r="7.5" fill="none" stroke="#333" stroke-width="2.8"/><path d="M194 232l7 7" stroke="#333" stroke-width="3.2"/>
<path d="M215.5 221.5h19M215.5 228h19M215.5 234.5h19" stroke="#333" stroke-width="3" fill="none"/>
<line x1="244.5" y1="210" x2="244.5" y2="1042" stroke="#b4b4b4" stroke-width="1.5" />
<text x="32" y="270" font-size="15.5" fill="#2a2a2a" textLength="102" lengthAdjust="spacingAndGlyphs">Basisplatte.ipt</text>
<path d="M7 258l4-5h14v14l-4 5h-14z" fill="#3d8fd6"/><path d="M7 258h14v14h-14z" fill="#62aee8"/>
<text x="56" y="300" font-size="15.5" fill="#2a2a2a" textLength="128" lengthAdjust="spacingAndGlyphs">Volumenkörper(1)</text>
<path d="M7.5 292H18.5M13 286.5V297.5" stroke="#555" stroke-width="2" fill="none"/>
<path d="M28 284h9l3 3h11v15h-23z" fill="#d8c878"/><path d="M35 290h9v8h-9z" fill="#7f9a4a"/>
<text x="56" y="330" font-size="15.5" fill="#2a2a2a" textLength="158" lengthAdjust="spacingAndGlyphs">Ansicht: Hauptansicht</text>
<path d="M7.5 322H18.5M13 316.5V327.5" stroke="#555" stroke-width="2" fill="none"/>
<path d="M33 313v19h8M33 322h14" fill="none" stroke="#3a78b8" stroke-width="2.2"/><circle cx="33" cy="313" r="2.2" fill="#3a78b8"/><circle cx="42" cy="332" r="2.2" fill="#3a78b8"/>
<text x="56" y="360" font-size="15.5" fill="#2a2a2a" textLength="66" lengthAdjust="spacingAndGlyphs">Ursprung</text>
<path d="M7.5 352H18.5M13 346.5V357.5" stroke="#555" stroke-width="2" fill="none"/>
<path d="M28 343h9l3 3h11v16h-23z" fill="#f0c850"/><path d="M28 349h23v13h-23z" fill="#f7d870"/>
<text x="56" y="390" font-size="15.5" fill="#2a2a2a" textLength="77" lengthAdjust="spacingAndGlyphs">Extrusion1</text>
<path d="M7.5 382H18.5M13 376.5V387.5" stroke="#555" stroke-width="2" fill="none"/>
<path d="M28 377l4-5h13v15l-4 5h-13z" fill="#2f78c4"/><path d="M28 377h13v15h-13z" fill="#5aa4e4"/><path d="M49 391v-20" stroke="#444" stroke-width="1.8"/>
<text x="56" y="420" font-size="15.5" fill="#2a2a2a" textLength="77" lengthAdjust="spacingAndGlyphs">Extrusion2</text>
<path d="M7.5 412H18.5M13 406.5V417.5" stroke="#555" stroke-width="2" fill="none"/>
<path d="M28 407l4-5h13v15l-4 5h-13z" fill="#2f78c4"/><path d="M28 407h13v15h-13z" fill="#5aa4e4"/><path d="M49 421v-20" stroke="#444" stroke-width="1.8"/>
<text x="56" y="450" font-size="15.5" fill="#2a2a2a" textLength="69" lengthAdjust="spacingAndGlyphs">Spiegeln1</text>
<path d="M7.5 442H18.5M13 436.5V447.5" stroke="#555" stroke-width="2" fill="none"/>
<path d="M30 452l9-19l9 19z" fill="#dfe8f4" stroke="#44648c" stroke-width="2"/><path d="M39 433v19" stroke="#44648c" stroke-width="1.6"/>
<text x="56" y="480" font-size="15.5" fill="#2a2a2a" textLength="69" lengthAdjust="spacingAndGlyphs">Bohrung1</text>
<path d="M7.5 472H18.5M13 466.5V477.5" stroke="#555" stroke-width="2" fill="none"/>
<rect x="29" y="463" width="21" height="19" fill="#dce6ee" stroke="#4a5a6a" stroke-width="2"/><circle cx="39" cy="473" r="5.5" fill="#8aa0b4" stroke="#4a5a6a" stroke-width="1.4"/>
<text x="56" y="510" font-size="15.5" fill="#2a2a2a" textLength="83" lengthAdjust="spacingAndGlyphs">Bauteilende</text>
<circle cx="40" cy="503" r="9.5" fill="#d83030"/><path d="M35.500 498.5l9 9M44.500 498.5l-9 9" stroke="#fff" stroke-width="2.6"/>
<linearGradient id="dtb7" x1="0" y1="0" x2="0" y2="1"><stop offset="0" stop-color="#d2d2d2"/><stop offset="1" stop-color="#dedede"/></linearGradient>
<rect x="244" y="1005" width="1675" height="38" fill="url(#dtb7)" />
<path d="M256 1023l10-9l10 9M259 1021v11h5v-6h4v6h5v-11" fill="#f4f4f4" stroke="#555" stroke-width="2" stroke-linejoin="round"/>
<rect x="290" y="1007" width="165" height="33" fill="#ececec" />
<rect x="290" y="1039" width="165" height="3.5" fill="#4fa6de" />
<text x="302" y="1028" font-size="17" fill="#4a8fc0" textLength="110" lengthAdjust="spacingAndGlyphs">Basisplatte.ipt</text>
<path d="M424.5 1015.5L435.5 1026.5M435.5 1015.5L424.5 1026.5" stroke="#333" stroke-width="2" fill="none"/>
<path d="M1892.5 1016.5h19M1892.5 1023h19M1892.5 1029.5h19" stroke="#555" stroke-width="2.4" fill="none"/>
<rect x="0" y="1043" width="1919" height="37" fill="#f0f0f0" />
<text x="3" y="1070" font-size="15.5" fill="#333" textLength="1140" lengthAdjust="spacingAndGlyphs">Nächsten Punkt/nächste Linie/Kante/Achse, Ebene oder Fläche auswählen (oder einen leeren Bereich zum erneuten Starten des Messens wählen)</text>
<text x="1816" y="1070" font-size="15.5" fill="#444">1</text>
<text x="1873" y="1070" font-size="15.5" fill="#444">1</text>
<text x="1661" y="1047" font-size="32" fill="#ececec" textLength="87" lengthAdjust="spacingAndGlyphs" font-weight="bold" stroke="#8e8e8e" stroke-width="1.3" paint-order="stroke" fill-opacity=".92">Linked</text>
<rect x="1751" y="1020" width="29" height="29" fill="#f4f4f4" rx="3" stroke="#a0a0a0" stroke-width="1" fill-opacity=".9"/>
<text x="1754" y="1046" font-size="27" fill="#bdbdbd" textLength="23" lengthAdjust="spacingAndGlyphs" font-weight="bold" stroke="#b0b0b0" stroke-width=".4">in</text>
<text x="1786" y="1047" font-size="32" fill="#ececec" textLength="100" lengthAdjust="spacingAndGlyphs" font-weight="bold" stroke="#8e8e8e" stroke-width="1.3" paint-order="stroke" fill-opacity=".92">Learning</text>
<rect x="1.5" y="1.5" width="1916" height="1076.25" fill="none" stroke="#fdfdfd" stroke-width="3"/>
</svg>
<svg class="p" style="left:1281px;top:782px" width="633" height="356" viewBox="0 0 1919 1079.25" font-family='"Liberation Sans", sans-serif'>
<linearGradient id="vbg8" x1="0" y1="1" x2="1" y2="0"><stop offset="0" stop-color="#bfbfbf"/><stop offset=".55" stop-color="#c5c5c5"/><stop offset="1" stop-color="#cecece"/></linearGradient><rect x="244" y="210" width="1675" height="796" fill="url(#vbg8)" />
<clipPath id="vc8"><rect x="244" y="210" width="1675" height="796"/></clipPath>
<g clip-path="url(#vc8)"><polygon points="1045.5,375 1063,367.7 1187.8,577.3 1172.8,584.8" fill="#a2a2a2" stroke="#4c4c4c" stroke-width="1.2" stroke-linejoin="round" />
<polygon points="1172.8,584.8 1187.8,577.3 1190.3,667.2 1172.8,674.7" fill="#a0a0a0" stroke="#4c4c4c" stroke-width="1.2" stroke-linejoin="round" />
<polygon points="1172.8,674.7 1190.3,667.2 1257.7,697.2 1242.7,707" fill="#9c9c9c" stroke="#4c4c4c" stroke-width="1.2" stroke-linejoin="round" />
<polygon points="1242.7,707 1257.7,697.2 1387.5,906.5 1367.5,914" fill="#a2a2a2" stroke="#4c4c4c" stroke-width="1.2" stroke-linejoin="round" />
<polygon points="1367.5,914 1387.5,906.5 1294,1008 1280,1008" fill="#dadada" stroke="#4c4c4c" stroke-width="1" stroke-linejoin="round" />
<polygon points="973,785 992,770 997,778 980,792" fill="#dcdcdc" />
<polygon points="1045.5,375 843,570 973,785 992,770 1055.5,874 1038,891.6 1105.4,1008 1280,1008 1367.5,914 1242.7,707 1172.8,674.7 1172.8,584.8" fill="#a8a8a8" stroke="#4c4c4c" stroke-width="1.3" stroke-linejoin="round" />
<line x1="1013" y1="492.5" x2="941" y2="570" stroke="#484848" stroke-width="28.8" stroke-linecap="round"/>
<line x1="1013" y1="492.5" x2="941" y2="570" stroke="#cecece" stroke-width="25.6" stroke-linecap="round"/>
<line x1="1011.1" y1="486.2" x2="934.5" y2="568.6" stroke="#dadada" stroke-width="13.5" stroke-linecap="round"/>
<line x1="940.1" y1="571.0" x2="945.6" y2="565.1" stroke="#b2b2b2" stroke-width="24.0" stroke-linecap="round"/>
<line x1="943.6" y1="550.3" x2="960.4" y2="565.9" stroke="#484848" stroke-width="1.2"/>
<line x1="1018.6" y1="488.5" x2="935.6" y2="577.8" stroke="#484848" stroke-width="1.3"/>
<line x1="1267.7" y1="919" x2="1198" y2="989" stroke="#484848" stroke-width="28.8" stroke-linecap="round"/>
<line x1="1267.7" y1="919" x2="1198" y2="989" stroke="#cecece" stroke-width="25.6" stroke-linecap="round"/>
<line x1="1266.1" y1="912.6" x2="1191.6" y2="987.4" stroke="#dadada" stroke-width="13.5" stroke-linecap="round"/>
<line x1="1197.0" y1="990.0" x2="1202.8" y2="984.2" stroke="#b2b2b2" stroke-width="24.0" stroke-linecap="round"/>
<line x1="1201.3" y1="969.4" x2="1217.6" y2="985.6" stroke="#484848" stroke-width="1.2"/>
<line x1="1273.4" y1="915.2" x2="1192.3" y2="996.6" stroke="#484848" stroke-width="1.3"/>
<ellipse cx="1050.5" cy="437.6" rx="6.5" ry="9" transform="rotate(-20 1050.5 437.6)" fill="#b4b4b4" stroke="#4c4c4c" stroke-width="1.3"/>
<ellipse cx="887" cy="597.3" rx="6.5" ry="9" transform="rotate(-20 887 597.3)" fill="#b4b4b4" stroke="#4c4c4c" stroke-width="1.3"/>
<ellipse cx="1321.6" cy="888" rx="6.5" ry="9" transform="rotate(-20 1321.6 888)" fill="#b4b4b4" stroke="#4c4c4c" stroke-width="1.3"/></g>
<path d="M305 890l6 50l-18 4" stroke="#888" stroke-width="1.2" fill="none"/>
<path d="M300 890l22 10l-16 12z" fill="#c02020"/>
<path d="M298 948l16-16l8 14z" fill="#1818a0"/>
<path d="M306 944l14-10l4 12z" fill="#20a040"/>
<text x="293" y="886" font-size="12" fill="#e03030">X</text>
<text x="281" y="950" font-size="14" fill="#2020c0">Z</text>
<path d="M1868 220h16v14h-16zM1876 220v14" fill="none" stroke="#444" stroke-width="2"/>
<path d="M1901 221L1913 233M1913 221L1901 233" stroke="#444" stroke-width="2" fill="none"/>
<rect x="1866" y="383" width="60" height="342" rx="8" fill="#d8d8d8" fill-opacity=".35" stroke="#8c8c8c" stroke-width="2.4"/>
<circle cx="1891" cy="432" r="15" fill="#eaeaea" fill-opacity=".5" stroke="#7c7c7c" stroke-width="2.2"/><circle cx="1891" cy="432" r="8.5" fill="none" stroke="#888888" stroke-width="2"/>
<path d="M1880 516v-14l4-2v-10h4v9h2v-11h4v11h2v-9h4v12l2-4h4l-5 14v4z" fill="#ececec" fill-opacity=".5" stroke="#787878" stroke-width="1.8"/>
<path d="M1876 534h14l6 6v18h-20z" fill="#eaeaea" fill-opacity=".5" stroke="#7c7c7c" stroke-width="1.8"/><circle cx="1894" cy="553" r="6" fill="#e8e8e8" fill-opacity=".5" stroke="#707070" stroke-width="2"/><path d="M1899 558l7 7" stroke="#707070" stroke-width="2.6"/>
<path d="M1891 598l7 9h-4v4h9v-4l7 6l-7 6v-4h-9v4h4l-7 9l-7-9h4v-4h-9v4l-7-6l7-6v4h9v-4h-4z" fill="#e8e8e8" fill-opacity=".5" stroke="#7a7a7a" stroke-width="1.6" transform="translate(0,0) scale(1)"/>
<rect x="1877" y="668" width="30" height="22" rx="3" fill="#e8e8e8" fill-opacity=".5" stroke="#7a7a7a" stroke-width="2"/><rect x="1883" y="675" width="18" height="9" fill="none" stroke="#888888" stroke-width="1.6"/><path d="M1884 668v-6h5M1899 668v-6h-5" fill="none" stroke="#7a7a7a" stroke-width="1.8"/>
<circle cx="1891" cy="466" r="1.8" fill="#999"/>
<circle cx="1891" cy="582" r="1.8" fill="#999"/>
<circle cx="1891" cy="644" r="1.8" fill="#999"/>
<circle cx="1904" cy="393" r="3.4" fill="none" stroke="#aaa" stroke-width="1.4"/><circle cx="1904" cy="714" r="3.4" fill="none" stroke="#aaa" stroke-width="1.4"/>
<g opacity="1"><path d="M1803.200 311.100L1864.800 272.900L1896.600 317.500L1833 357.800z" fill="#d4d4d4" opacity=".7" stroke="#b2b2b2" stroke-width="1.4" stroke-linejoin="round"/><path d="M1820 312l40 44M1836 298l38 36M1852 286l30 36" stroke="#b0b0b0" stroke-width="2.4" opacity=".8"/></g>
<rect x="248" y="210" width="401" height="82" fill="#f4f4f4" />
<rect x="345" y="212" width="304" height="33" fill="#d5d5d5" />
<text x="254" y="233" font-size="15.5" fill="#444" textLength="54" lengthAdjust="spacingAndGlyphs">Messen</text>
<path d="M322.5 222.5L333.5 233.5M333.5 222.5L322.5 233.5" stroke="#333" stroke-width="2.4" fill="none"/>
<path d="M354.5 228H369.5M362 220.5V235.5" stroke="#333" stroke-width="3" fill="none"/>
<path d="M619.5 221.5h19M619.5 228h19M619.5 234.5h19" stroke="#333" stroke-width="3" fill="none"/>
<rect x="250" y="251" width="397" height="36" fill="#e9e9e9" />
<path d="M268.0 264v10l7.0 -5z" fill="#333"/>
<text x="288" y="275" font-size="17" fill="#555" textLength="192" lengthAdjust="spacingAndGlyphs">Erweiterte Einstellungen</text>
<g transform="translate(904,913)" fill="none" stroke="#222" stroke-width="2"><ellipse rx="16" ry="7"/><ellipse rx="7" ry="16" transform="rotate(20)"/><circle r="1.5" fill="#222"/></g>
<rect x="0" y="0" width="1919" height="38" fill="#d8d8d8" />
<path d="M14 3h12v4h-3v15h4v6h-14v-6h4v-15h-3z" fill="#c98a3a"/>
<path d="M12 24h16v7h-16z" fill="#8a6a48"/>
<path d="M50 7h14l7 6v14h-21z" fill="#fafafa" stroke="#555" stroke-width="2.2"/>
<path d="M84.8 16.08h6.4l-3.2 4.16z" fill="#555"/>
<path d="M103 27v-18h8l3 4h10v5M103 27l6-10h20l-6 10z" fill="#f4f4f4" stroke="#555" stroke-width="2.2" stroke-linejoin="round"/>
<path d="M139 5h22v24h-22z" fill="#4a4a4a"/><path d="M144 5h12v9h-12z" fill="#e8e8e8"/><path d="M145 20h10v9h-10z" fill="#d0d0d0"/>
<path d="M177 17l9-8v5h10v9h-4v-4h-6v5z" fill="#e8e8e8" stroke="#666" stroke-width="1.8" stroke-linejoin="round"/>
<path d="M210.4 16.44h5.2l-2.6 3.3800000000000003z" fill="#777"/>
<path d="M252 17l-9-8v5h-10v9h4v-4h6v5z" fill="#dedede" stroke="#bdbdbd" stroke-width="1.8" stroke-linejoin="round"/>
<path d="M264.4 16.44h5.2l-2.6 3.3800000000000003z" fill="#b5b5b5"/>
<line x1="283" y1="5" x2="283" y2="30" stroke="#c4c4c4" stroke-width="1.5" />
<path d="M293 18l12-11l12 11M297 16v12h6v-7h4v7h6v-12" fill="#f4f4f4" stroke="#4a4a4a" stroke-width="2.4" stroke-linejoin="round"/>
<path d="M335 8l6 5l-6 5M335 13h-3v12h14v-6" fill="none" stroke="#b0b0b0" stroke-width="2.2"/><path d="M343 18h11v10h-11z" fill="#e6e6e6" stroke="#b8b8b8" stroke-width="1.6"/>
<path d="M367.4 16.44h5.2l-2.6 3.3800000000000003z" fill="#777"/>
<path d="M384 7h22v22h-22z" fill="#4f9d5d"/><path d="M384 7h22v6h-22z" fill="#3d7f4a"/><path d="M392 15h6v5h-6zM400 21h5v5h-5z" fill="#bfe3c5"/>
<path d="M417.4 16.44h5.2l-2.6 3.3800000000000003z" fill="#777"/>
<path d="M440 6h10v14h-10z" fill="#e4e4e4" stroke="#b0b0b0" stroke-width="1.6"/><path d="M447 18h9v10h-9z" fill="#ececec" stroke="#b8b8b8" stroke-width="1.6"/>
<circle cx="484" cy="17" r="11" fill="#e9e9e9" stroke="#3f3f3f" stroke-width="3.2"/><path d="M476.500 9.500l15 15M491.500 9.500l-15 15" stroke="#3f3f3f" stroke-width="4"/>
<rect x="502" y="3" width="150" height="30" fill="#dcdcdc" />
<text x="513" y="23" font-size="17" fill="#555" textLength="77" lengthAdjust="spacingAndGlyphs">Generisch</text>
<path d="M639.4 15.84h7.2l-3.6 4.680000000000001z" fill="#444"/>
<circle cx="668" cy="17" r="12" fill="#d9a13c"/><path d="M668 17L668 5A12 12 0 0 1 680 17z" fill="#d94c4c"/><path d="M668 17L680 17A12 12 0 0 1 668 29z" fill="#4d84d8"/><path d="M668 17L668 29A12 12 0 0 1 656 17z" fill="#5cb85c"/><circle cx="668" cy="17" r="4" fill="#e9d9f0"/>
<rect x="690" y="3" width="148" height="30" fill="#dedede" />
<path d="M694 6h18v20h-18z" fill="#cfd6de" stroke="#8a8f98" stroke-width="1.5"/><path d="M694 18l6-6l5 5l3-2l4 4v7h-18z" fill="#7b8794"/>
<text x="718" y="23" font-size="17" fill="#555" textLength="67" lengthAdjust="spacingAndGlyphs">Vorgabe</text>
<path d="M824.4 15.84h7.2l-3.6 4.680000000000001z" fill="#444"/>
<circle cx="853" cy="15" r="10" fill="#e0a040"/><path d="M853 15V5A10 10 0 0 1 863 15z" fill="#d95050"/><path d="M853 15h10A10 10 0 0 1 853 25z" fill="#4f86d8"/><path d="M853 15v10A10 10 0 0 1 843 15z" fill="#5cb85c"/>
<circle cx="890" cy="15" r="10" fill="#e0a040"/><path d="M890 15V5A10 10 0 0 1 900 15z" fill="#d95050"/><path d="M890 15h10A10 10 0 0 1 890 25z" fill="#4f86d8"/><path d="M890 15v10A10 10 0 0 1 880 15z" fill="#5cb85c"/>
<circle cx="861" cy="23" r="6" fill="#5a8fd0" stroke="#35588a" stroke-width="1.2"/>
<path d="M893 18l8 8" stroke="#c04040" stroke-width="4"/>
<text x="919" y="25" font-size="24" fill="#555" textLength="22" lengthAdjust="spacingAndGlyphs" font-style="italic" font-family="Liberation Serif, serif">fx</text>
<path d="M955 17H971M963 9V25" stroke="#b0b0b0" stroke-width="3.4" fill="none"/>
<line x1="983" y1="11" x2="1003" y2="11" stroke="#666" stroke-width="2" />
<path d="M989.4 16.84h7.2l-3.6 4.680000000000001z" fill="#555"/>
<text x="1033" y="23" font-size="17" fill="#5a5a5a" textLength="110" lengthAdjust="spacingAndGlyphs">Basisplatte.ipt</text>
<path d="M1175.6 13v8l5.6 -4z" fill="#555"/>
<rect x="1190" y="2" width="272" height="31" fill="#fbfbfb" />
<text x="1197" y="22" font-size="17" fill="#4a4a4a" textLength="257" lengthAdjust="spacingAndGlyphs">Hilfe und Befehle durchsuchen..</text>
<circle cx="1478" cy="11" r="6.5" fill="#5b7fc0" stroke="#2c4f92" stroke-width="1.6"/><path d="M1466 29c0-9 5-12 12-12s12 3 12 12z" fill="#5b7fc0" stroke="#2c4f92" stroke-width="1.6"/>
<text x="1497" y="23" font-size="17" fill="#666" textLength="110" lengthAdjust="spacingAndGlyphs">thomasXJGXP</text>
<path d="M1625.2 16.32h5.6l-2.8 3.6399999999999997z" fill="#666"/>
<path d="M1644 7h5l4 13h13l3-9h-18" fill="none" stroke="#4a4a4a" stroke-width="2.2"/><circle cx="1655" cy="26" r="2.6" fill="#4a4a4a"/><circle cx="1665" cy="26" r="2.6" fill="#4a4a4a"/>
<path d="M1683 13l4 4l-4 4M1690 13l4 4l-4 4" fill="none" stroke="#444" stroke-width="2"/>
<line x1="1819" y1="25" x2="1833" y2="25" stroke="#333" stroke-width="2.6" />
<path d="M1855 14h12v11h-12zM1859 14v-4h12v11h-4" fill="none" stroke="#333" stroke-width="2.2"/>
<path d="M1892 9L1908 25M1908 9L1892 25" stroke="#222" stroke-width="3" fill="none"/>
<rect x="0" y="38" width="1919" height="31" fill="#dadada" />
<rect x="3" y="39" width="62" height="30" fill="#f0a43a" />
<text x="10" y="60" font-size="17" fill="#fff3dc" textLength="42" lengthAdjust="spacingAndGlyphs">Datei</text>
<rect x="492" y="40" width="80" height="30" fill="#f1f1f1" />
<text x="84" y="60" font-size="17" fill="#6e6e6e" textLength="83" lengthAdjust="spacingAndGlyphs">3D-Modell</text>
<text x="198" y="60" font-size="17" fill="#6e6e6e" textLength="47" lengthAdjust="spacingAndGlyphs">Skizze</text>
<text x="274" y="60" font-size="17" fill="#6e6e6e" textLength="202" lengthAdjust="spacingAndGlyphs">Mit Anmerkung versehen</text>
<text x="505" y="60" font-size="17" fill="#333" textLength="53" lengthAdjust="spacingAndGlyphs">Prüfen</text>
<text x="587" y="60" font-size="17" fill="#6e6e6e" textLength="46" lengthAdjust="spacingAndGlyphs">Extras</text>
<text x="662" y="60" font-size="17" fill="#6e6e6e" textLength="78" lengthAdjust="spacingAndGlyphs">Verwalten</text>
<text x="769" y="60" font-size="17" fill="#6e6e6e" textLength="60" lengthAdjust="spacingAndGlyphs">Ansicht</text>
<text x="859" y="60" font-size="17" fill="#6e6e6e" textLength="110" lengthAdjust="spacingAndGlyphs">Umgebungen</text>
<text x="998" y="60" font-size="17" fill="#6e6e6e" textLength="103" lengthAdjust="spacingAndGlyphs">Erste Schritte</text>
<text x="1130" y="60" font-size="17" fill="#6e6e6e" textLength="156" lengthAdjust="spacingAndGlyphs">Zusammenarbeiten</text>
<rect x="1331" y="47" width="20" height="14" rx="4" fill="none" stroke="#555" stroke-width="1.8"/><path d="M1338 51v6l5-3z" fill="#555"/>
<path d="M1361 54.2h6l-3 3.9000000000000004z" fill="#444"/>
<rect x="0" y="69" width="1919" height="141" fill="#f1f1f1" />
<rect x="15" y="95.5" width="45" height="8" fill="#f9e9b4" />
<rect x="15" y="103" width="45" height="6.5" fill="#f3c440" />
<rect x="15" y="109.5" width="45" height="1.5" fill="#fdf2d0" />
<rect x="15" y="111" width="45" height="7" fill="#e1a11f" />
<path d="M16 95v9M59 95v9M18 99.500h39" stroke="#4a4a4a" stroke-width="1.8" fill="none"/><path d="M17 99.500l6-3.200v6.400zM58 99.500l-6-3.200v6.400z" fill="#4a4a4a"/>
<text x="8" y="148" font-size="17" fill="#444" textLength="59" lengthAdjust="spacingAndGlyphs">Messen</text>
<path d="M108 78h38v40h-38z" fill="#f6f6f6" stroke="#dcdcdc" stroke-width="2"/><path d="M136 100h20v30h-20z" fill="#ededed" stroke="#d8d8d8" stroke-width="2"/><path d="M141 108h10M141 116h10" stroke="#cfcfcf" stroke-width="2"/>
<text x="97" y="148" font-size="17" fill="#c2c2c2" textLength="68" lengthAdjust="spacingAndGlyphs">Bereichs-</text>
<text x="77" y="170" font-size="17" fill="#c2c2c2" textLength="111" lengthAdjust="spacingAndGlyphs">eigenschaften</text>
<text x="68" y="202" font-size="17" fill="#555" textLength="59" lengthAdjust="spacingAndGlyphs">Messen</text>
<line x1="196" y1="72" x2="196" y2="206" stroke="#dedede" stroke-width="2" />
<clipPath id="zb8"><rect x="230" y="78" width="50" height="50"/></clipPath>
<rect x="230" y="78" width="50" height="50" fill="#fdfdfd" stroke="#bbb" stroke-width="1"/>
<g clip-path="url(#zb8)" fill="none" stroke="#3a3a3a" stroke-width="7.500"><path d="M228 84l26 19l-26 19"/><path d="M244 74c24 12 24 46 0 58"/><path d="M262 72c22 12 22 50 0 62"/><path d="M279 70c12 14 12 52 0 66"/></g>
<text x="204" y="148" font-size="17" fill="#444" textLength="103" lengthAdjust="spacingAndGlyphs">Zebrastreifen</text>
<clipPath id="brl8"><path d="M375 78h36c10 13 10 37 0 50h-36c-10-13-10-37 0-50z"/></clipPath>
<g clip-path="url(#brl8)"><rect x="360" y="78" width="66" height="17" fill="#e5534b"/><rect x="360" y="94" width="66" height="7" fill="#f0a030"/><rect x="360" y="100" width="66" height="5" fill="#e8d83a"/><rect x="360" y="104" width="66" height="7" fill="#4bb86a"/><rect x="360" y="110" width="66" height="19" fill="#2e9be6"/></g>
<text x="316" y="148" font-size="17" fill="#444" textLength="153" lengthAdjust="spacingAndGlyphs">Flächenverjüngung</text>
<radialGradient id="fl8" gradientUnits="userSpaceOnUse" cx="540" cy="70" r="78"><stop offset="0" stop-color="#e8503e"/><stop offset=".3" stop-color="#ea5a3c"/><stop offset=".42" stop-color="#f0a030"/><stop offset=".52" stop-color="#dfe040"/><stop offset=".66" stop-color="#4cc470"/><stop offset=".82" stop-color="#30b0d8"/><stop offset="1" stop-color="#2e86e4"/></radialGradient>
<rect x="478" y="78" width="50" height="50" fill="url(#fl8)" />
<text x="478" y="148" font-size="17" fill="#444" textLength="51" lengthAdjust="spacingAndGlyphs">Fläche</text>
<path d="M542 80h48v48h-16v-34h-16v34h-16z" fill="#f4ecc8" stroke="#86bdb0" stroke-width="2.6"/><path d="M574 80h16v48h-16z" fill="#cfe8e2" opacity=".8"/><path d="M542 80h16v14h-16z" fill="#f4d0c0" opacity=".8"/>
<text x="538" y="148" font-size="17" fill="#444" textLength="56" lengthAdjust="spacingAndGlyphs">Schnitt</text>
<path d="M624 122c2-22 10-38 22-38s20 16 22 38l-8-3c-3-9-8-14-14-14s-11 5-14 14z" fill="#eef4fb" stroke="#5a80b0" stroke-width="2.4" stroke-linejoin="round"/><path d="M634 100l-6-8M646 96v-12M658 100l6-8" stroke="#5a80b0" stroke-width="1.8"/>
<text x="603" y="148" font-size="17" fill="#444" textLength="91" lengthAdjust="spacingAndGlyphs">Krümmung</text>
<text x="418" y="202" font-size="17" fill="#555" textLength="62" lengthAdjust="spacingAndGlyphs">Analyse</text>
<line x1="700" y1="72" x2="700" y2="206" stroke="#dedede" stroke-width="2" />
<rect x="709" y="77" width="49" height="30" fill="#f7f7f7" stroke="#e2e2e2" stroke-width="1.5"/>
<circle cx="725" cy="91" r="9" fill="#fff" stroke="#555" stroke-width="2"/>
<path d="M721.4 89.84h7.2l-3.6 4.680000000000001z" fill="#444"/>
<path d="M745.4 90.44h5.2l-2.6 3.3800000000000003z" fill="#444"/>
<rect x="0" y="210" width="244" height="832" fill="#f2f2f2" />
<rect x="88" y="212" width="156" height="33" fill="#d5d5d5" />
<text x="5" y="233" font-size="15.5" fill="#444" textLength="45" lengthAdjust="spacingAndGlyphs">Modell</text>
<path d="M66.5 222.5L77.5 233.5M77.5 222.5L66.5 233.5" stroke="#333" stroke-width="2.4" fill="none"/>
<path d="M96.5 228H111.5M104 220.5V235.5" stroke="#333" stroke-width="3" fill="none"/>
<circle cx="189" cy="226" r="7.5" fill="none" stroke="#333" stroke-width="2.8"/><path d="M194 232l7 7" stroke="#333" stroke-width="3.2"/>
<path d="M215.5 221.5h19M215.5 228h19M215.5 234.5h19" stroke="#333" stroke-width="3" fill="none"/>
<line x1="244.5" y1="210" x2="244.5" y2="1042" stroke="#b4b4b4" stroke-width="1.5" />
<text x="32" y="270" font-size="15.5" fill="#2a2a2a" textLength="102" lengthAdjust="spacingAndGlyphs">Basisplatte.ipt</text>
<path d="M7 258l4-5h14v14l-4 5h-14z" fill="#3d8fd6"/><path d="M7 258h14v14h-14z" fill="#62aee8"/>
<text x="56" y="300" font-size="15.5" fill="#2a2a2a" textLength="128" lengthAdjust="spacingAndGlyphs">Volumenkörper(1)</text>
<path d="M7.5 292H18.5M13 286.5V297.5" stroke="#555" stroke-width="2" fill="none"/>
<path d="M28 284h9l3 3h11v15h-23z" fill="#d8c878"/><path d="M35 290h9v8h-9z" fill="#7f9a4a"/>
<text x="56" y="330" font-size="15.5" fill="#2a2a2a" textLength="158" lengthAdjust="spacingAndGlyphs">Ansicht: Hauptansicht</text>
<path d="M7.5 322H18.5M13 316.5V327.5" stroke="#555" stroke-width="2" fill="none"/>
<path d="M33 313v19h8M33 322h14" fill="none" stroke="#3a78b8" stroke-width="2.2"/><circle cx="33" cy="313" r="2.2" fill="#3a78b8"/><circle cx="42" cy="332" r="2.2" fill="#3a78b8"/>
<text x="56" y="360" font-size="15.5" fill="#2a2a2a" textLength="66" lengthAdjust="spacingAndGlyphs">Ursprung</text>
<path d="M7.5 352H18.5M13 346.5V357.5" stroke="#555" stroke-width="2" fill="none"/>
<path d="M28 343h9l3 3h11v16h-23z" fill="#f0c850"/><path d="M28 349h23v13h-23z" fill="#f7d870"/>
<text x="56" y="390" font-size="15.5" fill="#2a2a2a" textLength="77" lengthAdjust="spacingAndGlyphs">Extrusion1</text>
<path d="M7.5 382H18.5M13 376.5V387.5" stroke="#555" stroke-width="2" fill="none"/>
<path d="M28 377l4-5h13v15l-4 5h-13z" fill="#2f78c4"/><path d="M28 377h13v15h-13z" fill="#5aa4e4"/><path d="M49 391v-20" stroke="#444" stroke-width="1.8"/>
<text x="56" y="420" font-size="15.5" fill="#2a2a2a" textLength="77" lengthAdjust="spacingAndGlyphs">Extrusion2</text>
<path d="M7.5 412H18.5M13 406.5V417.5" stroke="#555" stroke-width="2" fill="none"/>
<path d="M28 407l4-5h13v15l-4 5h-13z" fill="#2f78c4"/><path d="M28 407h13v15h-13z" fill="#5aa4e4"/><path d="M49 421v-20" stroke="#444" stroke-width="1.8"/>
<text x="56" y="450" font-size="15.5" fill="#2a2a2a" textLength="69" lengthAdjust="spacingAndGlyphs">Spiegeln1</text>
<path d="M7.5 442H18.5M13 436.5V447.5" stroke="#555" stroke-width="2" fill="none"/>
<path d="M30 452l9-19l9 19z" fill="#dfe8f4" stroke="#44648c" stroke-width="2"/><path d="M39 433v19" stroke="#44648c" stroke-width="1.6"/>
<text x="56" y="480" font-size="15.5" fill="#2a2a2a" textLength="69" lengthAdjust="spacingAndGlyphs">Bohrung1</text>
<path d="M7.5 472H18.5M13 466.5V477.5" stroke="#555" stroke-width="2" fill="none"/>
<rect x="29" y="463" width="21" height="19" fill="#dce6ee" stroke="#4a5a6a" stroke-width="2"/><circle cx="39" cy="473" r="5.5" fill="#8aa0b4" stroke="#4a5a6a" stroke-width="1.4"/>
<text x="56" y="510" font-size="15.5" fill="#2a2a2a" textLength="83" lengthAdjust="spacingAndGlyphs">Bauteilende</text>
<circle cx="40" cy="503" r="9.5" fill="#d83030"/><path d="M35.500 498.5l9 9M44.500 498.5l-9 9" stroke="#fff" stroke-width="2.6"/>
<linearGradient id="dtb8" x1="0" y1="0" x2="0" y2="1"><stop offset="0" stop-color="#d2d2d2"/><stop offset="1" stop-color="#dedede"/></linearGradient>
<rect x="244" y="1005" width="1675" height="38" fill="url(#dtb8)" />
<path d="M256 1023l10-9l10 9M259 1021v11h5v-6h4v6h5v-11" fill="#f4f4f4" stroke="#555" stroke-width="2" stroke-linejoin="round"/>
<rect x="290" y="1007" width="165" height="33" fill="#ececec" />
<rect x="290" y="1039" width="165" height="3.5" fill="#4fa6de" />
<text x="302" y="1028" font-size="17" fill="#4a8fc0" textLength="110" lengthAdjust="spacingAndGlyphs">Basisplatte.ipt</text>
<path d="M424.5 1015.5L435.5 1026.5M435.5 1015.5L424.5 1026.5" stroke="#333" stroke-width="2" fill="none"/>
<path d="M1892.5 1016.5h19M1892.5 1023h19M1892.5 1029.5h19" stroke="#555" stroke-width="2.4" fill="none"/>
<rect x="0" y="1043" width="1919" height="37" fill="#f0f0f0" />
<text x="3" y="1070" font-size="15.5" fill="#333" textLength="618" lengthAdjust="spacingAndGlyphs">Freies Drehen (Bei Anzeige des Drehsymbols klicken, um Ansicht zu zentrieren)</text>
<text x="1816" y="1070" font-size="15.5" fill="#444">1</text>
<text x="1873" y="1070" font-size="15.5" fill="#444">1</text>
<text x="1661" y="1047" font-size="32" fill="#ececec" textLength="87" lengthAdjust="spacingAndGlyphs" font-weight="bold" stroke="#8e8e8e" stroke-width="1.3" paint-order="stroke" fill-opacity=".92">Linked</text>
<rect x="1751" y="1020" width="29" height="29" fill="#f4f4f4" rx="3" stroke="#a0a0a0" stroke-width="1" fill-opacity=".9"/>
<text x="1754" y="1046" font-size="27" fill="#bdbdbd" textLength="23" lengthAdjust="spacingAndGlyphs" font-weight="bold" stroke="#b0b0b0" stroke-width=".4">in</text>
<text x="1786" y="1047" font-size="32" fill="#ececec" textLength="100" lengthAdjust="spacingAndGlyphs" font-weight="bold" stroke="#8e8e8e" stroke-width="1.3" paint-order="stroke" fill-opacity=".92">Learning</text>
<rect x="1.5" y="1.5" width="1916" height="1076.25" fill="none" stroke="#fdfdfd" stroke-width="3"/>
</svg>
</body></html>
